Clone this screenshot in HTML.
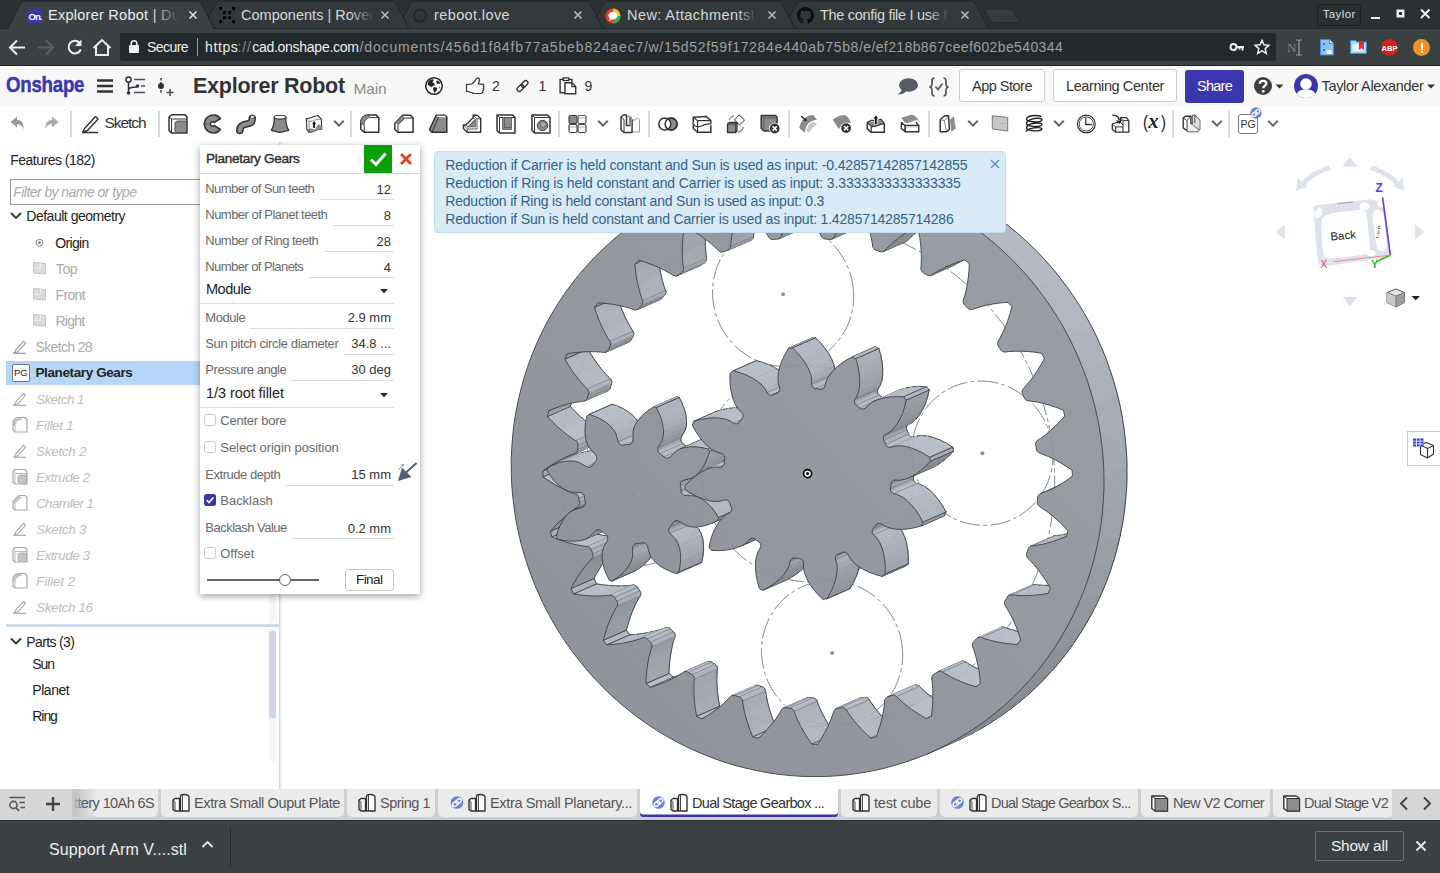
<!DOCTYPE html>
<html lang="en"><head><meta charset="utf-8"><title>Explorer Robot | Dual Stage Gearbox</title>
<style>
html,body{margin:0;padding:0;}
body{width:1440px;height:873px;overflow:hidden;position:relative;background:#fff;font-family:"Liberation Sans",sans-serif;}
div,span.t,svg{position:absolute;}
span.t{white-space:pre;line-height:1;}
div{box-sizing:border-box;}
</style></head>
<body>
<div style="left:0px;top:0px;width:1440px;height:28px;background:#2b3032;"></div>
<div style="left:0px;top:28px;width:1440px;height:37px;background:#3b4143;"></div>
<div style="left:0px;top:65px;width:1440px;height:1px;background:#1e2224;"></div>
<svg style="left:0;top:0" width="1440" height="29" viewBox="0 0 1440 29"><path d="M782,28.5 Q784,28 785,26 L797,3 Q798,1 800,1 L972,1 Q974,1 975,3 L987,26 Q988,28 990,28.5 Z" fill="#33393b" stroke="#1f2426" stroke-width="1"/><path d="M589,28.5 Q591,28 592,26 L604,3 Q605,1 607,1 L779,1 Q781,1 782,3 L794,26 Q795,28 797,28.5 Z" fill="#33393b" stroke="#1f2426" stroke-width="1"/><path d="M396,28.5 Q398,28 399,26 L411,3 Q412,1 414,1 L587,1 Q589,1 590,3 L602,26 Q603,28 605,28.5 Z" fill="#33393b" stroke="#1f2426" stroke-width="1"/><path d="M201,28.5 Q203,28 204,26 L216,3 Q217,1 219,1 L393,1 Q395,1 396,3 L408,26 Q409,28 411,28.5 Z" fill="#33393b" stroke="#1f2426" stroke-width="1"/><rect x="0" y="28" width="1440" height="1" fill="#23282a"/><path d="M6,28.5 Q8,28 9,26 L21,3 Q22,1 24,1 L198,1 Q200,1 201,3 L213,26 Q214,28 216,28.5 Z" fill="#3b4143" stroke="#1f2426" stroke-width="1"/><rect x="9" y="27.5" width="204" height="2" fill="#3b4143"/><path d="M986,9 L1010,9 C1012,9 1013,10 1014,12 L1019,21 C1019.5,22 1019,22.5 1018,22.5 L994,22.5 C992,22.5 991,21.5 990,19.5 L985,10.5 C984.5,9.5 985,9 986,9 Z" fill="#363c3e" stroke="#23282a"/><path d="M189.5,11.5 l7,7 m0,-7 l-7,7" stroke="#e4e6e6" stroke-width="1.5" fill="none"/><path d="M381.5,11.5 l7,7 m0,-7 l-7,7" stroke="#b9bcbd" stroke-width="1.5" fill="none"/><path d="M574.5,11.5 l7,7 m0,-7 l-7,7" stroke="#b9bcbd" stroke-width="1.5" fill="none"/><path d="M768.5,11.5 l7,7 m0,-7 l-7,7" stroke="#b9bcbd" stroke-width="1.5" fill="none"/><path d="M961.5,11.5 l7,7 m0,-7 l-7,7" stroke="#b9bcbd" stroke-width="1.5" fill="none"/></svg>
<div style="left:27px;top:9px;width:15px;height:14px;background:#3a36ae;"></div>
<span class="t" style="left:28.50px;top:11.96px;font-size:9.5px;color:#fff;font-weight:700;letter-spacing:-0.95px;">On.</span>
<svg style="left:219px;top:6px" width="17" height="18" viewBox="0 0 17 18"><rect x="0" y="0.9" width="3" height="3" fill="#000"/><rect x="13.1" y="0.9" width="3" height="3" fill="#000"/><rect x="4" y="5.1" width="3" height="3" fill="#000"/><rect x="9.1" y="5.1" width="3" height="3" fill="#000"/><rect x="4" y="10.2" width="3" height="3" fill="#000"/><rect x="9.1" y="10.2" width="3" height="3" fill="#000"/><rect x="0" y="14.2" width="3" height="3" fill="#000"/><rect x="13.1" y="14.2" width="3" height="3" fill="#000"/></svg>
<svg style="left:412px;top:8px" width="16" height="16" viewBox="0 0 16 16"><circle cx="8" cy="7.5" r="6" fill="none" stroke="#22272a" stroke-width="2"/><path d="M3,11 l-1.5,4 l4.5,-2z" fill="#22272a"/></svg>
<svg style="left:605px;top:8px" width="16" height="16" viewBox="0 0 16 16"><circle cx="8" cy="8" r="7.5" fill="#e8402a"/><path d="M8 .5a7.5 7.5 0 0 1 7.5 7.5h-7.5z" fill="#f5c518"/><path d="M15.500 8a7.5 7.500 0 0 1-7.500 7.500v-7.500z" fill="#2fb457"/><ellipse cx="8" cy="7.6" rx="4.600" ry="3.800" fill="#fff"/><path d="M5,10 l-1,3 l3.500,-2z" fill="#fff"/></svg>
<svg style="left:797px;top:7px" width="17" height="17" viewBox="0 0 16 16"><path fill="#0d0f10" d="M8 0C3.580 0 0 3.580 0 8c0 3.540 2.290 6.530 5.470 7.590.400.070.550-.170.550-.380 0-.190-.010-.820-.010-1.490-2.010.370-2.530-.490-2.690-.940-.090-.230-.480-.940-.820-1.130-.280-.150-.680-.520-.010-.530.630-.010 1.080.580 1.230.820.720 1.210 1.870.870 2.330.660.070-.520.280-.870.510-1.070-1.780-.200-3.640-.890-3.640-3.950 0-.870.310-1.590.820-2.150-.080-.200-.360-1.020.080-2.120 0 0 .670-.210 2.200.820.640-.180 1.320-.270 2-.270.680 0 1.360.090 2 .270 1.530-1.040 2.200-.820 2.200-.820.440 1.100.160 1.920.080 2.120.510.560.820 1.270.820 2.150 0 3.070-1.870 3.750-3.650 3.950.290.250.540.730.540 1.480 0 1.070-.010 1.930-.010 2.200 0 .210.150.460.550.380A8.013 8.013 0 0016 8c0-4.420-3.580-8-8-8z"/></svg>
<span class="t" style="left:48.00px;top:7.73px;font-size:14.5px;color:#eceeee;letter-spacing:0.26px;">Explorer Robot | Du</span>
<div style="left:150px;top:4px;width:34px;height:22px;background:linear-gradient(90deg,rgba(0,0,0,0),#3b4143 85%);"></div>
<span class="t" style="left:241.00px;top:7.73px;font-size:14.5px;color:#d5d8d9;letter-spacing:0.02px;">Components | Rover</span>
<div style="left:350px;top:4px;width:28px;height:22px;background:linear-gradient(90deg,rgba(0,0,0,0),#33393b 85%);"></div>
<span class="t" style="left:434.00px;top:7.73px;font-size:14.5px;color:#d5d8d9;letter-spacing:0.39px;">reboot.love</span>
<span class="t" style="left:627.00px;top:7.73px;font-size:14.5px;color:#d5d8d9;letter-spacing:0.42px;">New: Attachments!</span>
<div style="left:738px;top:4px;width:22px;height:22px;background:linear-gradient(90deg,rgba(0,0,0,0),#33393b 85%);"></div>
<span class="t" style="left:820.00px;top:7.73px;font-size:14.5px;color:#d5d8d9;letter-spacing:-0.3px;">The config file I use f</span>
<div style="left:928px;top:4px;width:24px;height:22px;background:linear-gradient(90deg,rgba(0,0,0,0),#33393b 85%);"></div>
<div style="left:1317px;top:4px;width:44px;height:22px;background:#2a2f31;border:1px solid #1b1f21;border-radius:3px;"></div>
<span class="t" style="left:1322.68px;top:9.27px;font-size:11.5px;color:#dcdfe0;letter-spacing:0.39px;">Taylor</span>
<svg style="left:1365px;top:0" width="75" height="28" viewBox="1365 0 75 28"><rect x="1371" y="17" width="9" height="2" fill="#eee"/><path d="M1396.500,9.500h8v8h-8z M1399,12v3h3v-3z" fill="#eee" fill-rule="evenodd"/><path d="M1421,9.500 l8.500,8.500 m0,-8.500 l-8.500,8.500" stroke="#eee" stroke-width="2" fill="none"/></svg>
<svg style="left:0;top:28px" width="120" height="37" viewBox="0 28 120 37" fill="none" stroke-linecap="butt"><path d="M25,47.500 H10.500 M17,40.500 l-7,7 l7,7" stroke="#eceeee" stroke-width="2"/><path d="M38,47.500 H52.500 M46,40.500 l7,7 l-7,7" stroke="#5b6163" stroke-width="2"/><path d="M79.500,42.700 A6.300,6.300 0 1 0 80.800,49.500" stroke="#eceeee" stroke-width="2"/><path d="M81.500,39.500 v6.500 h-6.500z" fill="#eceeee"/><path d="M93.500,48 L102,40 L110.500,48 M96,46.500 V55 H108 V46.500" stroke="#eceeee" stroke-width="2"/></svg>
<div style="left:120px;top:33px;width:1156px;height:28px;background:#24292b;border-radius:3px;"></div>
<svg style="left:128px;top:39px" width="12" height="15" viewBox="0 0 12 15"><rect x="1" y="6" width="10" height="8" rx="1" fill="#f0f0f0"/><path d="M3.200,6.500 V4.500 a2.800,2.800 0 0 1 5.600,0 V6.500" stroke="#f0f0f0" stroke-width="1.600" fill="none"/></svg>
<span class="t" style="left:147.00px;top:40.15px;font-size:14px;color:#eceeee;letter-spacing:-0.56px;">Secure</span>
<div style="left:197px;top:38px;width:1px;height:18px;background:#9a9ea0;"></div>
<span class="t" style="left:205.00px;top:40.15px;font-size:14px;color:#eceeee;letter-spacing:0.63px;">https</span>
<span class="t" style="left:237.60px;top:40.15px;font-size:14px;color:#8c9092;letter-spacing:0.78px;">://</span>
<span class="t" style="left:252.20px;top:40.15px;font-size:14px;color:#eceeee;letter-spacing:-0.27px;">cad.onshape.com</span>
<span class="t" style="left:359.50px;top:40.15px;font-size:14px;color:#9da1a3;letter-spacing:0.86px;">/documents/456d1f84fb77a5beb824aec7</span>
<span class="t" style="left:644.00px;top:40.15px;font-size:14px;color:#9da1a3;letter-spacing:0.67px;">/w/15d52f59f17284e440ab75b8</span>
<span class="t" style="left:859.00px;top:40.15px;font-size:14px;color:#9da1a3;letter-spacing:0.38px;">/e/ef218b867ceef602be540344</span>
<svg style="left:1228px;top:38px" width="48" height="20" viewBox="1228 38 48 20"><circle cx="1233.500" cy="47" r="3" stroke="#eceeee" stroke-width="2" fill="none"/><path d="M1236.500,47 h7.500 M1242.500,47 v3.500 M1239.500,47 v2.500" stroke="#eceeee" stroke-width="2" fill="none"/><path d="M1262,40.300 l2,4.500 l4.900,.5 l-3.700,3.300 l1.100,4.800 l-4.300,-2.600 l-4.300,2.600 l1.100,-4.800 l-3.700,-3.300 l4.900,-.5z" stroke="#eceeee" stroke-width="1.500" fill="none" stroke-linejoin="miter"/></svg>
<span class="t" style="left:1287.00px;top:41.00px;font-size:13px;color:#7e8486;font-family:'Liberation Serif',serif;">N</span>
<svg style="left:1295px;top:39px" width="8" height="17" viewBox="0 0 8 17"><path d="M1,1 h2 q1,0 1,1 v13 q0,1 -1,1 h-2 M7,1 h-2 q-1,0 -1,1 M7,16 h-2 q-1,0 -1,-1" stroke="#9ea3a5" stroke-width="1.200" fill="none"/></svg>
<svg style="left:1320px;top:38px" width="14" height="18" viewBox="0 0 14 18"><path d="M0.500,1.500 h9 l4,4 v11.500 h-13z" fill="#8ec3f7" stroke="#3b8be0" stroke-width="1"/><path d="M9.500,1.500 v4 h4" fill="#d8ecff" stroke="#3b8be0"/><rect x="3" y="5" width="2" height="2" fill="#2f6fc0"/><rect x="3" y="11" width="2" height="2" fill="#2f6fc0"/><rect x="6.500" y="12" width="5" height="4" fill="#e9f3ff"/></svg>
<svg style="left:1350px;top:38px" width="17" height="16" viewBox="0 0 17 16"><path d="M0.500,2.500 h5 l1.500,1.500 h9.500 v11.500 h-16z" fill="#9fd0f5" stroke="#3f93dd"/><rect x="2.500" y="5.500" width="12" height="8" fill="#e8f4fd"/><path d="M9,3 h5 v9 l-2.500,-2 l-2.500,2z" fill="#e03131"/></svg>
<div style="left:1381px;top:39px;width:17px;height:17px;background:#d81e1e;border-radius:50%;"></div>
<span class="t" style="left:1381.58px;top:44.65px;font-size:7.5px;color:#fff;font-weight:700;">ABP</span>
<div style="left:1413px;top:39px;width:17px;height:17px;background:#f0922b;border-radius:50%;"></div>
<div style="left:1420.5px;top:42.5px;width:2px;height:7px;background:#fff;"></div>
<div style="left:1420.5px;top:51px;width:2px;height:2px;background:#fff;"></div>
<div style="left:0px;top:66px;width:1440px;height:40px;background:#f8f8f8;"></div>
<span class="t" style="left:6.00px;top:73.98px;font-size:22px;color:#3a36ae;font-weight:700;transform:scaleX(.85);transform-origin:0 0;letter-spacing:-.3px;-webkit-text-stroke:.45px #3a36ae;">Onshape</span>
<svg style="left:90px;top:66px" width="100" height="39" viewBox="90 66 100 39"><path d="M97,80.500h16 M97,86h16 M97,91.500h16" stroke="#333" stroke-width="2.400"/><circle cx="128.500" cy="79.500" r="2.600" fill="none" stroke="#333" stroke-width="1.500"/><circle cx="128.500" cy="93" r="1.800" fill="#333"/><path d="M128.500,82 V92 M128.500,90 C128.500,86 136,88 137,86.500" stroke="#333" stroke-width="1.500" fill="none"/><circle cx="137.500" cy="86" r="1.700" fill="#333"/><path d="M134,79.500h11 M141,86h4 M134,92.500h11" stroke="#455060" stroke-width="1.500"/><path d="M161,78 V94" stroke="#333" stroke-width="1.500" stroke-dasharray="2.500,1.500"/><circle cx="161" cy="86" r="3" fill="#333"/><path d="M166.500,92.500h7 M170,89v7" stroke="#455060" stroke-width="1.600"/></svg>
<span class="t" style="left:193.00px;top:76.40px;font-size:21.5px;color:#333;font-weight:700;letter-spacing:-0.24px;">Explorer Robot</span>
<span class="t" style="left:353.50px;top:81.48px;font-size:15.5px;color:#8a8a8a;letter-spacing:-0.15px;">Main</span>
<svg style="left:424px;top:76px" width="20" height="20" viewBox="0 0 20 20"><circle cx="10" cy="10" r="8.300" fill="#fff" stroke="#222" stroke-width="1.500"/><path d="M4.500,5.500 C6,3.500 8,3 9.500,3.500 C10,5 8.500,5.500 8.500,6.500 C9.500,7.500 10.500,7 11,8.500 C10,10 8,10 7.500,11.500 C6.500,10.500 5.500,9.500 4,9 C3.500,8 3.800,6.500 4.500,5.500Z M12.500,4.500 C14,4.500 15.500,5.500 16.500,7.500 C15.500,8 14.500,7.500 13.500,8 C12.500,7 12,5.500 12.500,4.500Z M9.500,11.500 C11,11 12.500,11.500 13.500,12.500 C13,14.500 11.500,15.500 10.500,17 C9.500,16 10,14 9,13 C9,12.500 9.200,12 9.500,11.500Z M15,10.500 c1,0 1.500,1 1.500,2 c-.7,.3 -1.300,-.5 -1.500,-2z" fill="#222"/></svg>
<svg style="left:465px;top:75px" width="22" height="22" viewBox="0 0 22 22"><path d="M1.5,16.2 V9.6 L6.8,9 C9,7.5 10.500,5.500 11.400,3.500 C12.300,2.300 14.800,3.200 14.500,4.800 C14.300,6.300 13.800,7.700 13.200,9 L17,9.100 C18.600,9.200 19,10.300 18.300,11.200 C19.100,11.800 19,13 18.200,13.500 C18.900,14.300 18.600,15.300 17.800,15.700 C18.200,16.800 17.500,18.200 16,18.500 H9 C8,18.500 7.500,18 6.800,17.500 L1.500,16.200Z" fill="#fff" stroke="#333" stroke-width="1.200" stroke-linejoin="round"/></svg>
<span class="t" style="left:492.00px;top:79.15px;font-size:14px;color:#333;">2</span>
<svg style="left:514px;top:77px" width="18" height="18" viewBox="0 0 18 18"><g transform="rotate(-45 8.500 9)" fill="none" stroke="#333" stroke-width="1.400"><rect x="1.800" y="6.800" width="7.600" height="4.400" rx="2.200"/><rect x="7.600" y="6.800" width="7.600" height="4.400" rx="2.200"/></g></svg>
<span class="t" style="left:538.50px;top:79.15px;font-size:14px;color:#333;">1</span>
<svg style="left:559px;top:76px" width="20" height="20" viewBox="0 0 20 20"><path d="M4.200,3.400 H1.100 V16.700 H6 M9.800,3.400 H12.900 V6.800" fill="none" stroke="#333" stroke-width="1.400"/><rect x="4.200" y="1.900" width="5.600" height="2.600" fill="#fff" stroke="#333" stroke-width="1.300"/><path d="M6,6.800 H12.900 L16.700,10.600 V17.800 H6Z" fill="#fff" stroke="#333" stroke-width="1.400"/><path d="M12.900,6.800 V10.600 H16.700" fill="none" stroke="#333" stroke-width="1.200"/></svg>
<span class="t" style="left:584.50px;top:79.15px;font-size:14px;color:#333;">9</span>
<svg style="left:896px;top:77px" width="23" height="20" viewBox="0 0 23 20"><ellipse cx="12.500" cy="8" rx="9.500" ry="6.800" fill="#555c66"/><path d="M6,11.500 C5.500,14.500 3.500,16.500 1.500,17.500 C5.500,17.800 9,16 11,13.500Z" fill="#555c66"/></svg>
<svg style="left:928px;top:76px" width="22" height="22" viewBox="0 0 22 22" fill="none" stroke="#555c66" stroke-width="1.700"><path d="M6.500,2 C4,2 4,3.500 4,5.500 V8 C4,9.500 3.500,10.500 1.500,11 C3.500,11.500 4,12.500 4,14 V16.500 C4,18.500 4,20 6.500,20"/><path d="M15.500,2 C18,2 18,3.500 18,5.500 V8 C18,9.500 18.500,10.500 20.500,11 C18.500,11.500 18,12.500 18,14 V16.500 C18,18.500 18,20 15.500,20"/><path d="M7.500,10.500 L10,13.500 L14.500,7.500" stroke-width="1.800"/></svg>
<div style="left:959px;top:69px;width:86px;height:33px;background:#fff;border:1px solid #ccc;border-radius:3px;"></div>
<span class="t" style="left:972.00px;top:78.73px;font-size:14.5px;color:#333;letter-spacing:-0.5px;">App Store</span>
<div style="left:1053px;top:69px;width:124px;height:33px;background:#fff;border:1px solid #ccc;border-radius:3px;"></div>
<span class="t" style="left:1066.00px;top:78.73px;font-size:14.5px;color:#333;letter-spacing:-0.4px;">Learning Center</span>
<div style="left:1185px;top:70px;width:59px;height:32.5px;background:#3a36ae;border-radius:3px;"></div>
<span class="t" style="left:1197.00px;top:78.73px;font-size:14.5px;color:#fff;letter-spacing:-0.74px;">Share</span>
<svg style="left:1253px;top:76px" width="36" height="20" viewBox="0 0 36 20"><circle cx="10" cy="10" r="9" fill="#3d3d3d"/><path d="M6.800,7.800 C6.800,3.800 13.400,4 13.400,7.600 C13.400,9.800 10.200,9.800 10.200,12.300" stroke="#fff" stroke-width="2.300" fill="none"/><circle cx="10.200" cy="15.300" r="1.400" fill="#fff"/><path d="M22.500,8.500 h8 l-4,4z" fill="#333"/></svg>
<svg style="left:1294px;top:74px" width="24" height="26" viewBox="0 0 24 26"><defs><clipPath id="avc"><circle cx="12" cy="12" r="12"/></clipPath></defs><circle cx="12" cy="12" r="12" fill="#3a36ae"/><g clip-path="url(#avc)"><circle cx="12" cy="10" r="5.800" fill="#fff"/><path d="M1.500,25 C1.500,17 7,15.500 12,15.500 C17,15.500 22.500,17 22.500,25Z" fill="#fff"/></g></svg>
<span class="t" style="left:1321.50px;top:78.73px;font-size:14.5px;color:#333;letter-spacing:-0.33px;">Taylor Alexander</span>
<svg style="left:1426px;top:82px" width="10" height="8" viewBox="0 0 10 8"><path d="M1,2.500 h8 l-4,4z" fill="#333"/></svg>
<div style="left:0px;top:106px;width:1440px;height:36px;background:#fff;"></div>
<svg style="left:0;top:105px" width="1440" height="37" viewBox="0 105 1440 37" fill="none" stroke-linejoin="round"><path d="M10.500,122 L17,116.500 V120 C21.500,120 24,123 23.500,129.500 C22.500,126 21,124.300 17,124.300 V127.500Z" fill="#9a9a9a"/><path d="M58.500,122 L52,116.500 V120 C47.500,120 45,123 45.500,129.500 C46.500,126 48,124.300 52,124.300 V127.500Z" fill="#a9a9a9"/><rect x="70.2" y="111" width="1.600" height="26" fill="#d2d2d2"/><path d="M82,132.500 H98" stroke="#333" stroke-width="1.500"/><path d="M84.500,128.500 L95.500,116.500 L98,119 L87.500,130.500 L83,131.800Z" stroke="#333" stroke-width="1.400" fill="#fff"/><rect x="158.2" y="111" width="1.600" height="26" fill="#d2d2d2"/><g transform="translate(168,114)"><path d="M1,3 L3.500,0.800 H17 L19,3 V19 H3.500 L1,16.500Z" fill="#fff" stroke="#333" stroke-width="1.500"/><path d="M1,3 L3.500,5 V19 M3.500,5 H19" stroke="#333" stroke-width="1"/><path d="M7,8.500 L9,7 H18.500 V18.500 H9 L7,17Z" fill="#8c8c8c" stroke="#555" stroke-width="1"/></g><g transform="translate(202,114)"><path d="M18.500,4.500 A9,9 0 1 0 18.500,15.500 L12,11.500 A2.200,2.200 0 1 1 12,8.500Z" fill="#8c8c8c" stroke="#333" stroke-width="1.500"/><path d="M1,10 h5" stroke="#555" stroke-width=".8"/></g><g transform="translate(236,114)"><path d="M0.7,17.6 C0.6,14 2.5,9.5 7.6,7.8 C10.5,7 12.6,7.2 13.1,5.8 C13.4,4.5 13.2,3.5 13.6,2.6 C14.5,0.8 18.5,0.9 19.1,3.2 C19.4,5.5 19.2,7.5 18.3,9.2 C17,11.5 15,12.3 12.5,12.6 C10,12.9 8.3,13 7.6,14 C7,15.2 7,16.8 6.6,18.2 C5.8,20 1.2,19.9 0.7,17.6Z" fill="#8c8c8c" stroke="#333" stroke-width="1.5"/><ellipse cx="16.4" cy="3" rx="2.3" ry="1.4" fill="#fff" stroke="#333" stroke-width=".8"/></g><g transform="translate(271,114)"><path d="M3.2,3.2 C3.5,8 2.5,12.5 0.4,16.3 C3,17 6,18 9,18.4 C12,18 15,17 17.7,16.3 C15.5,12.5 14.5,8 14.9,3.2 Z" fill="#8c8c8c" stroke="#333" stroke-width="1.3"/><ellipse cx="9.05" cy="3.2" rx="5.85" ry="1.9" fill="#fff" stroke="#333" stroke-width="1.1"/></g><g transform="translate(305,114)"><path d="M1.3,4.6 C5,4.8 9,2 12.9,1.5 L16.3,5.100 L16.800,15.300 C12,14.500 9,18 4.200,18.400 L1.800,15.300Z" fill="#fff" stroke="#333" stroke-width="1.100"/><path d="M2.800,15.500 C5,14 7,14.500 9.500,15.500 C11.500,14 12.500,10 14,10.200 C15.500,10.500 16,12 16.800,13 V15.300 C12,14.500 9,18 4.200,18.400Z" fill="#8c8c8c"/><path d="M1.300,4.600 L4,7.500 L4.200,18.400 M4,7.500 C8,7.500 12,4.500 16.300,5.100" stroke="#555" stroke-width=".7" fill="none"/><path d="M9.100,14.200 V8.500" stroke="#fff" stroke-width="3.400"/><path d="M6.300,10.400 L9.100,6.500 L11.900,10.400Z" fill="#fff" stroke="#fff" stroke-width="1"/><path d="M9.100,13.900 V8.500" stroke="#111" stroke-width="1.900"/><path d="M7.100,10 L9.100,7.100 L11.100,10Z" fill="#111"/></g><path d="M334.2,120.8 l4.8,4.8 l4.8,-4.8" stroke="#666" stroke-width="2" fill="none" stroke-linejoin="miter"/><rect x="350.2" y="111" width="1.600" height="26" fill="#d2d2d2"/><g transform="translate(360,114)"><path d="M0.8,15.3 V9.5 C0.8,4.5 3.5,0.9 7.6,0.9 H15.9 L18.8,3.7 V18.2 H4.2Z" fill="#fff" stroke="#333" stroke-width="1.5"/><path d="M0.8,9.5 C0.8,4.5 3.5,0.9 7.6,0.9 L10.5,3.5 C6.500,3.700 4.200,7 4.200,11Z" fill="#8c8c8c" stroke="#444" stroke-width=".7"/><path d="M4.200,11 V18.200 M10.500,3.600 H18.800" stroke="#333" stroke-width="1" fill="none"/></g><g transform="translate(394,114)"><path d="M0.8,15.3 V9.5 L8.600,1.200 H16.400 L19.100,4.100 V18.200 H3.800Z" fill="#fff" stroke="#333" stroke-width="1.500"/><path d="M1.600,8.900 L8.800,1.600 L10.800,4.100 L4,10.500Z" fill="#8c8c8c"/><path d="M4,10.500 V18.200 M4,10.500 L10.800,4.100 H19.100" stroke="#333" stroke-width="1" fill="none"/></g><g transform="translate(429,114)"><path d="M0.400,15.800 L7.100,1.200 H15.900 L17.800,2.900 V18.200 H2.800Z" fill="#8c8c8c" stroke="#333" stroke-width="1.500"/><path d="M7.400,1.800 H15.600 L17.200,3.200 H9.600Z" fill="#fff"/><path d="M9.600,3.200 L3.200,18" stroke="#333" stroke-width="1" fill="none"/></g><g transform="translate(463,114)"><path d="M0.400,11 H2.800 L10.100,3.700 V1.200 H14 L17.700,4.600 V18.200 H4.300 L0.400,14.400Z" fill="#fff" stroke="#333" stroke-width="1.400"/><path d="M5.300,12.900 L12.500,5.600 V12.900Z" fill="#8c8c8c" stroke="#555" stroke-width=".7"/><path d="M0.400,11 L4.300,15 V18.200 M4.300,15 H14 V5 M2.800,11 L4.800,12.900 M10.100,3.700 L12.300,5.400 M10.100,1.200 L14,4.800 H17.700 M4.300,13.600 L12.300,5.400" stroke="#333" stroke-width=".8" fill="none"/></g><g transform="translate(496,114)"><path d="M1,1 H16.500 L19,3.500 V19 H3.500 L1,16.500Z" fill="#fff" stroke="#333" stroke-width="1.500"/><path d="M1,1 L3.500,3.500 V19 M3.500,3.500 H19" stroke="#333" stroke-width="1"/><path d="M6.500,3.500 H15.500 V15.500 H6.500Z" fill="#8c8c8c" stroke="#555" stroke-width=".8"/><path d="M8.500,3.500 V13.500 H15.500" stroke="#555" stroke-width=".8"/></g><g transform="translate(531,114)"><path d="M1,1 H16.500 L19,3.500 V19 H3.500 L1,16.500Z" fill="#fff" stroke="#333" stroke-width="1.500"/><path d="M1,1 L3.500,3.500 V19 M3.500,3.500 H19" stroke="#333" stroke-width="1"/><circle cx="11.500" cy="11.500" r="5.200" fill="#8c8c8c" stroke="#444" stroke-width="1"/><circle cx="12.300" cy="10.500" r="3" fill="#aaa" stroke="#555" stroke-width=".8"/></g><rect x="558.2" y="111" width="1.600" height="26" fill="#d2d2d2"/><g transform="translate(568,114)"><rect x="1" y="1.500" width="8" height="8" rx="1.500" fill="#8c8c8c" stroke="#444" stroke-width="1.200"/><rect x="10" y="1.500" width="8" height="8" rx="1.500" fill="#fff" stroke="#555" stroke-width="1.200"/><rect x="1" y="10.500" width="8" height="8" rx="1.500" fill="#fff" stroke="#444" stroke-width="1.200"/><rect x="10" y="10.500" width="8" height="8" rx="1.500" fill="#fff" stroke="#444" stroke-width="1.200"/><path d="M1,4 h17 M1,13 h17" stroke="#777" stroke-width=".6"/></g><path d="M598.2,120.8 l4.8,4.8 l4.8,-4.8" stroke="#666" stroke-width="2" fill="none" stroke-linejoin="miter"/><g transform="translate(620,114)"><path d="M12,6 H15 L17.500,4 L19.500,6 V18 H12Z" fill="#fff" stroke="#999" stroke-width="1"/><path d="M1,3 L3.500,1 H6.500 V11.500 H10.500 V6 H12 V18.500 H4 L1,16Z" fill="#fff" stroke="#333" stroke-width="1.500"/><path d="M1,3 L4,5.500 V18.500" stroke="#333" stroke-width="1"/><path d="M7,1 L12,3 V14 L9,11 V4Z" fill="#8c8c8c" stroke="none"/></g><rect x="648.2" y="111" width="1.600" height="26" fill="#d2d2d2"/><g transform="translate(658,114)"><circle cx="13.1" cy="10" r="6" fill="#8c8c8c" stroke="#333" stroke-width="1.500"/><circle cx="6.800" cy="10" r="6" fill="#fff" stroke="#333" stroke-width="1.500"/><circle cx="13.100" cy="10" r="6" fill="none" stroke="#333" stroke-width="1.500"/></g><g transform="translate(692,114)"><g stroke-linejoin="miter"><path d="M1.300,3.200 L14.400,2.500 L18.800,6.600 V18.200 H5.600 L1.300,14.500Z" fill="#fff" stroke="#333" stroke-width="1.500"/><path d="M1.300,3.200 L5.600,6.600 H18.800 M5.600,6.600 V18.200" stroke="#333" stroke-width="1.100" fill="none"/><path d="M18.800,9.200 V11.200 M1.300,8.500 V10.500" stroke="#fff" stroke-width="2.200"/><path d="M0.300,8.500 C3,13 6,13.500 9.500,12 C13,10 16,9.500 19.500,10" stroke="#333" stroke-width="1.200" fill="none"/></g></g><g transform="translate(726,114)"><path d="M3,6 A9,9 0 0 1 8,1.500 M17.500,13 A9,9 0 0 1 12,18.500" stroke="#999" stroke-width="1.500"/><path d="M13,1 L18.500,6 L13.500,11 L8.500,6Z" fill="#fff" stroke="#333" stroke-width="1"/><path d="M1.500,10 L3.500,8.500 H11 V17 L9.500,18.500 H1.500Z" fill="#8c8c8c" stroke="#333" stroke-width="1.300"/><path d="M1.500,10 H9.500 V18.500 M9.500,10 L11,8.500" stroke="#333" stroke-width=".8"/></g><g transform="translate(760,114)"><path d="M1.200,1.500 H15.500 L17,3 V17 H4 L1.200,14.500Z" fill="#8c8c8c" stroke="#333" stroke-width="1.500"/><path d="M1.200,1.500 L4,4 V17 M4,4 H17" stroke="#555" stroke-width=".9" fill="none"/><circle cx="14.7" cy="14.5" r="5.7" fill="#fff"/><circle cx="14.7" cy="14.5" r="4.9" fill="#333"/><path d="M12.6,12.4 l4.2,4.2 m0,-4.2 l-4.2,4.2" stroke="#fff" stroke-width="1.6"/></g><rect x="788.2" y="111" width="1.600" height="26" fill="#d2d2d2"/><g transform="translate(798,114)"><path d="M1.3,13.9 C1.8,11.5 2.4,10 3.2,8.6 C5,5.5 7,3.5 9.5,2.3 C11.5,1.4 13.5,1 15.4,1 L19,5.7 C16.5,6 14.5,6.6 12.9,7.6 C10.8,8.9 9.4,10.3 8.6,12 C7.6,14 7,16.3 6.6,18.8Z" fill="#8c8c8c"/><path d="M8.1,16.8 C8.6,14.6 9.3,12.9 10.5,11.5 C12,9.7 13.7,8.4 15.8,7.6 L19,10.5 C17.4,11.2 16,12.2 14.9,13.4 C13.4,15 12.2,16.8 11.5,18.8Z" fill="#c8c8c8"/><path d="M3.2,2 L7.6,6.2" stroke="#222" stroke-width="1.3"/><path d="M8.6,7.2 L5.2,6.6 L8,3.8Z" fill="#222"/></g><g transform="translate(831,114)"><path d="M1.8,5.700 C3.5,4.500 5.500,3.200 7.600,2.300 C9.500,1.500 11.500,1 13.400,1 C15,1.500 16.300,2.500 17.300,3.700 C18.500,5.200 19.200,7 19.700,8.600 C17.500,9 15.500,9.600 13.400,10.500 C11.500,11.400 9.500,13 7.600,14.900 C5.500,11.500 3.500,8.500 1.800,5.700Z" fill="#8c8c8c"/><circle cx="15.1" cy="14.1" r="5.7" fill="#fff"/><circle cx="15.1" cy="14.1" r="4.9" fill="#333"/><path d="M13.0,12.0 l4.2,4.2 m0,-4.2 l-4.2,4.2" stroke="#fff" stroke-width="1.6"/></g><g transform="translate(866,114)"><path d="M1.300,8.400 L5.600,6.400 L14.900,5.500 L18.300,9.400 V18.300 H5.200 L1.300,14.900Z" fill="#fff" stroke="#333" stroke-width="1.500"/><path d="M1.700,8.600 L14.900,6.200 L17.800,9.600 C15.500,9.700 13.500,10.300 12,11 C10,12 8.500,13 6.600,13 L5.200,12Z" fill="#8c8c8c"/><path d="M1.300,8.400 L5.200,12.300 V18.300 M5.200,12.500 C9,13.500 13,10 18.300,9.600" stroke="#333" stroke-width="1.200" fill="none"/><path d="M9.800,10.500 V3.700" stroke="#fff" stroke-width="3.600"/><path d="M6.800,4.800 L9.800,1 L12.900,4.800Z" fill="#fff" stroke="#fff" stroke-width="1.200"/><path d="M9.800,10 V3.700" stroke="#111" stroke-width="2"/><path d="M7.500,4.500 L9.800,1.600 L12.200,4.500Z" fill="#111"/></g><g transform="translate(900,114)"><path d="M1.300,3.700 C3,3.300 5,2.800 6.600,2.300 C8.500,1.700 10,1 11.500,0.800 C13,0.900 14.300,1.500 15.400,2.300 L18.800,6.200 C17.300,6.200 15.800,6.300 14.400,6.600 C12.500,7.100 11,8 9.500,8.600 C8,9 6.300,9 4.700,8.600Z" fill="#8c8c8c"/><path d="M1.300,8.800 L5.200,11.500 V17.800 L1.300,14.400Z" fill="#fff" stroke="#333" stroke-width="1.400"/><path d="M5.200,11.500 H18.800 V17.800 H5.200Z" fill="#fff" stroke="#333" stroke-width="1.400"/><path d="M5.900,12.200 H18.100 V13.800 H5.900Z" fill="#d4d4d4"/><path d="M15.800,8.300 L18.800,11.500 M1.300,8.800 L3,8.600" stroke="#333" stroke-width="1.300"/></g><rect x="928.2" y="111" width="1.600" height="26" fill="#d2d2d2"/><g transform="translate(939,114)"><path d="M10.900,5.700 L14.800,2.300 L16.800,14.400 L12.400,17.800Z" fill="#8c8c8c"/><path d="M1.200,17.800 V5.700 L5.600,1.800 H9.500 L10.400,15.400 L7.500,17.800Z" fill="#fff" stroke="#333" stroke-width="1.500"/><path d="M1.200,5.700 L5.400,6.600 L7.300,16.800 M5.400,6.600 L9.500,1.800" stroke="#666" stroke-width=".8"/></g><path d="M968.2,120.8 l4.8,4.8 l4.8,-4.8" stroke="#666" stroke-width="2" fill="none" stroke-linejoin="miter"/><g transform="translate(992,114)"><path d="M0.300,1.800 L15.700,3.400 V17.100 L0.300,14.900Z" fill="#c8c8c8" stroke="#777" stroke-width="1"/><path d="M8,9.500 h5" stroke="#aaa" stroke-width=".7"/></g><g transform="translate(1024,114)"><path d="M17.500,2.500 C12,0.500 3,1.800 2.500,5 C2.200,7.500 10,8.300 15,7.600 C19,7 19,4.300 14,4.300 C9,4.300 2.800,6 2.500,9.500 C2.200,12 10,13 15,12.300 C19,11.700 19,9 14,9 C9,9 2.800,10.500 2.500,14 C2.300,16 10,17.500 15,16.600 C19,16 19,13.600 14,13.600 C9,13.600 4,15 1.800,17.500" stroke="#222" stroke-width="1.400"/></g><path d="M1054.2,120.8 l4.8,4.8 l4.8,-4.8" stroke="#666" stroke-width="2" fill="none" stroke-linejoin="miter"/><g transform="translate(1076,114)"><circle cx="10.300" cy="10" r="8.900" stroke="#333" stroke-width="1.200" fill="#fff"/><circle cx="10.300" cy="10" r="7.100" stroke="#333" stroke-width=".9"/><path d="M9.800,3.700 V10.500 H15.900" stroke="#333" stroke-width="1.300"/></g><g transform="translate(1110,114)"><path d="M2.300,10 L6.600,8.500 H10.500 V3.700 H16.400 L18.800,6.600 V18.200 H5.700 L2.300,15.300Z" fill="#fff" stroke="#333" stroke-width="1.300"/><path d="M2.300,10 L5.700,12.900 V18.200 M5.700,12.900 H13 V18.200 M10.500,3.700 L13,6.600 H18.800 M13,6.600 V12.900 M10.500,8.500 L13,11" stroke="#333" stroke-width="1" fill="none"/><path d="M2.300,1.200 C6,1 8.600,2.700 9.400,6.500" stroke="#222" stroke-width="1.300" fill="none"/><path d="M5.900,5.900 L9.300,9.800 L12.800,5.600 L9.400,7Z" fill="#222"/></g></svg>
<span class="t" style="left:104.50px;top:115.38px;font-size:15.5px;color:#333;letter-spacing:-1.07px;">Sketch</span>
<span class="t" style="left:1143.30px;top:114.49px;font-size:17.5px;color:#222;transform:scaleX(.85);transform-origin:0 0;">(</span>
<span class="t" style="left:1160.80px;top:114.49px;font-size:17.5px;color:#222;transform:scaleX(.85);transform-origin:0 0;">)</span>
<span class="t" style="left:1148.30px;top:111.45px;font-size:20.5px;color:#222;font-weight:700;font-style:italic;font-family:'Liberation Serif',serif;">x</span>
<svg style="left:1170px;top:105px" width="120" height="37" viewBox="1170 105 120 37" fill="none" stroke-linejoin="round"><rect x="1172.2" y="111" width="1.600" height="26" fill="#d2d2d2"/><g transform="translate(1182,114)"><path d="M1.200,4.100 L3.600,2.200 H9 V10 H10.900 V1.700 L12.900,1.200 L17.700,6.600 V15.300 L15.300,17.500 H6.100 L1.200,13.900Z" fill="#fff" stroke="#333" stroke-width="1.400"/><path d="M10.900,1.700 L12.900,1.200 L17.700,6.600 V15.300 L10.900,10Z" fill="#e2e2e2"/><path d="M5.100,11 L10.900,10.300 L17.700,15.300 L15.300,17.500 H6.100 L5.100,16.500Z" fill="#f0f0f0"/><path d="M10.900,10.300 L17.700,15.300 L16.500,16.400 L9.500,10.500Z" fill="#9a9a9a"/><path d="M1.200,4.100 L5.100,6.600 V16.500 M5.100,6.600 L9,2.200 M12.900,1.200 V9" stroke="#333" stroke-width=".9" fill="none"/></g><path d="M1212.2,120.8 l4.8,4.8 l4.8,-4.8" stroke="#666" stroke-width="2" fill="none" stroke-linejoin="miter"/><rect x="1228.2" y="111" width="1.600" height="26" fill="#d2d2d2"/><rect x="1238.500" y="114.500" width="19" height="19" rx="2.500" fill="#fff" stroke="#777" stroke-width="1"/><circle cx="1256" cy="113" r="5.700" fill="#6d83d8"/><g transform="rotate(-40 1256 113)" stroke="#fff" stroke-width="1.300" fill="none"><rect x="1251.500" y="111.200" width="5.500" height="3.600" rx="1.800"/><rect x="1255" y="111.200" width="5.500" height="3.600" rx="1.800"/></g><path d="M1268.2,120.8 l4.8,4.8 l4.8,-4.8" stroke="#666" stroke-width="2" fill="none" stroke-linejoin="miter"/></svg>
<span class="t" style="left:1240.41px;top:118.61px;font-size:10.5px;color:#333;">PG</span>
<svg style="left:280px;top:142px" width="1160" height="647" viewBox="280 142 1160 647" fill="none" stroke-linejoin="round" stroke-linecap="round">
<style>.e{stroke:#3c4043;stroke-width:.9}.n{stroke:#6e7378;stroke-width:.6}.w0{fill:#858a90;stroke:#858a90;stroke-width:1}.w1{fill:#898e94;stroke:#898e94;stroke-width:1}.w2{fill:#8c9197;stroke:#8c9197;stroke-width:1}.w3{fill:#90959b;stroke:#90959b;stroke-width:1}.w4{fill:#93989f;stroke:#93989f;stroke-width:1}.w5{fill:#979ca2;stroke:#979ca2;stroke-width:1}.w6{fill:#9a9fa6;stroke:#9a9fa6;stroke-width:1}.w7{fill:#9ea3aa;stroke:#9ea3aa;stroke-width:1}.w8{fill:#a1a6ad;stroke:#a1a6ad;stroke-width:1}.w9{fill:#a5aab1;stroke:#a5aab1;stroke-width:1}.w10{fill:#a8adb5;stroke:#a8adb5;stroke-width:1}.w11{fill:#acb1b8;stroke:#acb1b8;stroke-width:1}.w12{fill:#afb4bc;stroke:#afb4bc;stroke-width:1}.w13{fill:#b3b8c0;stroke:#b3b8c0;stroke-width:1}.w14{fill:#b6bbc3;stroke:#b6bbc3;stroke-width:1}.w15{fill:#babfc7;stroke:#babfc7;stroke-width:1}</style>
<defs><linearGradient id="gf" gradientUnits="userSpaceOnUse" x1="560" y1="700" x2="1060" y2="250"><stop offset="0" stop-color="#90949a"/><stop offset="1" stop-color="#999da4"/></linearGradient></defs>
<path d="M853,286.1 L853.6,292.4 L853.7,298.7 L853.2,305 L852.2,311.2 L850.6,317.2 L848.6,323.1 L846,328.8 L843,334.1 L839.5,339.2 L835.6,344 L831.2,348.4 L826.5,352.3 L821.5,355.9 L816.2,358.9 L810.7,361.5 L804.9,363.5 L799,365 L792.9,366 L786.8,366.5 L780.6,366.3 L774.5,365.7 L768.4,364.5 L762.4,362.7 L756.6,360.5 L751,357.7 L745.7,354.5 L740.6,350.8 L735.8,346.7 L731.4,342.1 L727.4,337.2 L723.9,332 L720.7,326.5 L718.1,320.7 L715.9,314.8 L714.3,308.7 L713.2,302.5 L712.6,296.2 L712.5,289.9 L713,283.6 L714,277.4 L715.6,271.4 L717.6,265.5 L720.2,259.8 L723.2,254.5 L726.7,249.4 L730.6,244.6 L735,240.2 L739.7,236.3 L744.7,232.7 L750,229.7 L755.5,227.1 L761.3,225.1 L767.2,223.6 L773.3,222.6 L779.4,222.1 L785.6,222.3 L791.7,222.9 L797.8,224.1 L803.8,225.9 L809.6,228.1 L815.2,230.9 L820.5,234.1 L825.6,237.8 L830.4,241.9 L834.8,246.5 L838.8,251.4 L842.3,256.6 L845.5,262.1 L848.1,267.9 L850.3,273.8 L851.9,279.9ZM1052.3,445 L1052.9,451.3 L1053,457.6 L1052.5,463.9 L1051.5,470.1 L1049.9,476.1 L1047.9,482 L1045.3,487.7 L1042.3,493 L1038.8,498.1 L1034.9,502.9 L1030.5,507.3 L1025.8,511.2 L1020.8,514.8 L1015.5,517.8 L1010,520.4 L1004.2,522.4 L998.3,523.9 L992.2,524.9 L986.1,525.4 L979.9,525.2 L973.8,524.6 L967.7,523.4 L961.7,521.6 L955.9,519.4 L950.3,516.6 L945,513.4 L939.9,509.7 L935.1,505.6 L930.7,501 L926.7,496.1 L923.2,490.9 L920,485.4 L917.4,479.6 L915.2,473.7 L913.6,467.6 L912.5,461.4 L911.9,455.1 L911.8,448.8 L912.3,442.5 L913.3,436.3 L914.9,430.3 L916.9,424.4 L919.5,418.7 L922.5,413.4 L926,408.3 L929.9,403.5 L934.3,399.1 L939,395.2 L944,391.6 L949.3,388.6 L954.8,386 L960.6,384 L966.5,382.5 L972.6,381.5 L978.7,381 L984.9,381.2 L991,381.8 L997.1,383 L1003.1,384.8 L1008.9,387 L1014.5,389.8 L1019.8,393 L1024.9,396.7 L1029.7,400.8 L1034.1,405.4 L1038.1,410.3 L1041.6,415.5 L1044.8,421 L1047.4,426.8 L1049.6,432.7 L1051.2,438.8ZM902,644.7 L902.6,651 L902.7,657.3 L902.2,663.6 L901.2,669.8 L899.6,675.8 L897.6,681.7 L895,687.4 L892,692.7 L888.5,697.8 L884.6,702.6 L880.2,707 L875.5,710.9 L870.5,714.5 L865.2,717.5 L859.7,720.1 L853.9,722.1 L848,723.6 L841.9,724.6 L835.8,725.1 L829.6,724.9 L823.5,724.3 L817.4,723.1 L811.4,721.3 L805.6,719.1 L800,716.3 L794.7,713.1 L789.6,709.4 L784.8,705.3 L780.4,700.7 L776.4,695.8 L772.9,690.6 L769.7,685.1 L767.1,679.3 L764.9,673.4 L763.3,667.3 L762.2,661.1 L761.6,654.8 L761.5,648.5 L762,642.2 L763,636 L764.6,630 L766.6,624.1 L769.2,618.4 L772.2,613.1 L775.7,608 L779.6,603.2 L784,598.8 L788.7,594.9 L793.7,591.3 L799,588.3 L804.5,585.7 L810.3,583.7 L816.2,582.2 L822.3,581.2 L828.4,580.7 L834.6,580.9 L840.7,581.5 L846.8,582.7 L852.8,584.5 L858.6,586.7 L864.2,589.5 L869.5,592.7 L874.6,596.4 L879.4,600.5 L883.8,605.1 L887.8,610 L891.3,615.2 L894.5,620.7 L897.1,626.5 L899.3,632.4 L900.9,638.5ZM702.7,485.8 L703.3,492.1 L703.4,498.4 L702.9,504.7 L701.9,510.9 L700.3,516.9 L698.3,522.8 L695.7,528.5 L692.7,533.8 L689.2,538.9 L685.3,543.7 L680.9,548.1 L676.2,552 L671.2,555.6 L665.9,558.6 L660.4,561.2 L654.6,563.2 L648.7,564.7 L642.6,565.7 L636.5,566.2 L630.3,566 L624.2,565.4 L618.1,564.2 L612.1,562.4 L606.3,560.2 L600.7,557.4 L595.4,554.2 L590.3,550.5 L585.5,546.4 L581.1,541.8 L577.1,536.9 L573.6,531.7 L570.4,526.2 L567.8,520.4 L565.6,514.5 L564,508.4 L562.9,502.2 L562.3,495.9 L562.2,489.6 L562.7,483.3 L563.7,477.1 L565.3,471.1 L567.3,465.2 L569.9,459.5 L572.9,454.2 L576.4,449.1 L580.3,444.3 L584.7,439.9 L589.4,436 L594.4,432.4 L599.7,429.4 L605.2,426.8 L611,424.8 L616.9,423.3 L623,422.3 L629.1,421.8 L635.3,422 L641.4,422.6 L647.5,423.8 L653.5,425.6 L659.3,427.8 L664.9,430.6 L670.2,433.8 L675.3,437.5 L680.1,441.6 L684.5,446.2 L688.5,451.1 L692,456.3 L695.2,461.8 L697.8,467.6 L700,473.5 L701.6,479.6ZM1052.3,445 L1053.8,458.2 L1054.6,471.4 L1054.7,484.7 L1054.1,497.9 L1052.9,511 L1050.9,524 L1048.4,536.9 L1045.1,549.6 L1041.2,562.1 L1036.7,574.4 L1031.5,586.4 L1025.7,598 L1019.4,609.4 L1012.4,620.3 L1004.9,630.9 L996.8,641 L988.3,650.7 L979.2,659.9 L969.7,668.6 L959.7,676.7 L949.3,684.3 L938.5,691.3 L927.3,697.7 L915.8,703.5 L904.1,708.7 L892,713.2 L879.8,717.1 L867.3,720.3 L854.7,722.8 L841.9,724.6 L829,725.8 L816.1,726.2 L803.2,726 L790.3,725.1 L777.4,723.5 L764.6,721.2 L751.9,718.2 L739.4,714.5 L727.1,710.2 L714.9,705.3 L703.1,699.7 L691.5,693.5 L680.2,686.7 L669.3,679.3 L658.8,671.3 L648.7,662.8 L639,653.8 L629.8,644.3 L621,634.3 L612.8,623.8 L605.1,613 L598,601.8 L591.4,590.2 L585.5,578.3 L580.1,566.2 L575.4,553.7 L571.3,541.1 L567.8,528.2 L565,515.3 L562.9,502.2 L561.4,489 L560.6,475.8 L560.5,462.5 L561.1,449.3 L562.3,436.2 L564.3,423.2 L566.8,410.3 L570.1,397.6 L574,385.1 L578.5,372.8 L583.7,360.8 L589.5,349.2 L595.8,337.8 L602.8,326.9 L610.3,316.3 L618.4,306.2 L626.9,296.5 L636,287.3 L645.5,278.6 L655.5,270.5 L665.9,262.9 L676.7,255.9 L687.9,249.5 L699.4,243.7 L711.1,238.5 L723.2,234 L735.4,230.1 L747.9,226.9 L760.5,224.4 L773.3,222.6 L786.2,221.4 L799.1,221 L812,221.2 L824.9,222.1 L837.8,223.7 L850.6,226 L863.3,229 L875.8,232.7 L888.1,237 L900.3,241.9 L912.1,247.5 L923.7,253.7 L935,260.5 L945.9,267.9 L956.4,275.9 L966.5,284.4 L976.2,293.4 L985.4,302.9 L994.2,312.9 L1002.4,323.4 L1010.1,334.2 L1017.2,345.4 L1023.8,357 L1029.7,368.9 L1035.1,381 L1039.8,393.5 L1043.9,406.1 L1047.4,419 L1050.2,431.9ZM912.5,461.4 L913.4,470.8 L913.4,480.2 L912.7,489.6 L911.2,498.9 L908.9,508 L905.8,516.8 L901.9,525.3 L897.4,533.4 L892.2,541 L886.3,548.1 L879.8,554.7 L872.8,560.6 L865.2,565.9 L857.3,570.5 L848.9,574.3 L840.3,577.4 L831.4,579.7 L822.3,581.2 L813.1,581.8 L803.9,581.7 L794.7,580.7 L785.5,578.9 L776.6,576.3 L767.9,572.9 L759.5,568.7 L751.4,563.9 L743.8,558.3 L736.7,552.1 L730.1,545.3 L724.1,538 L718.8,530.2 L714.1,521.9 L710.1,513.3 L706.9,504.3 L704.4,495.2 L702.7,485.8 L701.8,476.4 L701.8,467 L702.5,457.6 L704,448.3 L706.3,439.2 L709.4,430.4 L713.3,421.9 L717.8,413.8 L723,406.2 L728.9,399.1 L735.4,392.5 L742.4,386.6 L750,381.3 L757.9,376.7 L766.3,372.9 L774.9,369.8 L783.8,367.5 L792.9,366 L802.1,365.4 L811.3,365.5 L820.5,366.5 L829.7,368.3 L838.6,370.9 L847.3,374.3 L855.7,378.5 L863.8,383.3 L871.4,388.9 L878.5,395.1 L885.1,401.9 L891.1,409.2 L896.4,417 L901.1,425.3 L905.1,433.9 L908.3,442.9 L910.8,452Z" stroke="#8d95a1" stroke-width="1" stroke-dasharray="20 4 3 4"/>
<circle cx="783.1" cy="294.3" r="2" fill="#8a929e"/>
<circle cx="982.4" cy="453.2" r="2" fill="#8a929e"/>
<circle cx="832.1" cy="652.9" r="2" fill="#8a929e"/>
<path class="w12" d="M571.8,590.4l-0.9,-1.8l23,-10.1l0.9,1.8z"/>
<path class="e" d="M594.8,580.3l-0.9,-1.8M570.9,588.6l23,-10.1"/>
<path class="w12" d="M572.7,592.2l-0.9,-1.8l23,-10.1l0.9,1.8z"/>
<path class="e" d="M595.7,582.1l-0.9,-1.8"/>
<path class="w12" d="M573.6,594l-0.9,-1.8l23,-10.1l0.9,1.8z"/>
<path class="e" d="M596.6,583.9l-0.9,-1.8M573.6,594l23,-10.1"/>
<path class="w4" d="M570.9,588.6l3.3,-6.1l23,-10.1l-3.3,6.1z"/>
<path class="e" d="M593.9,578.5l3.3,-6.1M570.9,588.6l23,-10.1"/>
<path class="w15" d="M580.5,595l-6.9,-1l23,-10.1l6.9,1z"/>
<path class="e" d="M603.5,584.9l-6.9,-1M573.6,594l23,-10.1"/>
<path class="w11" d="M551.9,537l-0.5,-1.9l23,-10.1l0.5,1.9z"/>
<path class="e" d="M574.9,526.9l-0.5,-1.9M551.9,537l23,-10.1"/>
<path class="w11" d="M551.4,535.1l-0.5,-1.9l23,-10.1l0.5,1.9z"/>
<path class="e" d="M574.4,525l-0.5,-1.9"/>
<path class="w11" d="M550.9,533.2l-0.5,-1.9l23,-10.1l0.5,1.9z"/>
<path class="e" d="M573.9,523.1l-0.5,-1.9M550.5,531.2l23,-10.1"/>
<path class="w15" d="M558.4,539.6l-6.5,-2.6l23,-10.1l6.5,2.6z"/>
<path class="e" d="M581.4,529.5l-6.5,-2.6M551.9,537l23,-10.1"/>
<path class="w2" d="M550.5,531.2l4.6,-5.2l23,-10.1l-4.6,5.2z"/>
<path class="e" d="M573.5,521.1l4.6,-5.2M550.5,531.2l23,-10.1"/>
<path class="w3" d="M574.3,582.5l3.5,-5.8l23,-10.1l-3.5,5.8z"/>
<path class="e" d="M597.3,572.4l3.5,-5.8"/>
<path class="w14" d="M604.5,641.8l-1.2,-1.6l23,-10.1l1.2,1.6z"/>
<path class="e" d="M627.5,631.7l-1.2,-1.6M603.3,640.3l23,-10.1"/>
<path class="w15" d="M587.3,595.7l-6.8,-0.7l23,-10.1l6.8,0.7z"/>
<path class="e" d="M610.3,585.6l-6.8,-0.7"/>
<path class="w14" d="M605.8,643.4l-1.2,-1.5l23,-10.1l1.2,1.5z"/>
<path class="e" d="M628.8,633.3l-1.2,-1.5"/>
<path class="w14" d="M607,644.9l-1.3,-1.5l23,-10.1l1.3,1.5z"/>
<path class="e" d="M630,634.8l-1.3,-1.5M607,644.9l23,-10.1"/>
<path class="w15" d="M564.9,541.8l-6.5,-2.2l23,-10.1l6.5,2.2z"/>
<path class="e" d="M587.9,531.7l-6.5,-2.2"/>
<path class="w6" d="M603.3,640.3l1.9,-6.8l23,-10.1l-1.9,6.8z"/>
<path class="e" d="M626.3,630.2l1.9,-6.8M603.3,640.3l23,-10.1"/>
<path class="w14" d="M613.9,644.4l-6.9,0.6l23,-10.1l6.9,-0.6z"/>
<path class="e" d="M636.9,634.3l-6.9,0.6M607,644.9l23,-10.1"/>
<path class="w1" d="M555.1,526l4.7,-4.9l23,-10.1l-4.7,4.9z"/>
<path class="e" d="M578.1,515.9l4.7,-4.9"/>
<path class="w3" d="M577.8,576.6l3.7,-5.5l23,-10.1l-3.7,5.5z"/>
<path class="e" d="M600.8,566.5l3.7,-5.5"/>
<path class="w15" d="M593.9,596l-6.6,-0.3l23,-10.1l6.6,0.3z"/>
<path class="e" d="M616.9,585.9l-6.6,-0.3"/>
<path class="w5" d="M605.2,633.5l2.2,-6.5l23,-10.1l-2.2,6.5z"/>
<path class="e" d="M628.2,623.4l2.2,-6.5"/>
<path class="w15" d="M571.4,543.6l-6.4,-1.8l23,-10.1l6.4,1.8z"/>
<path class="e" d="M594.4,533.5l-6.4,-1.8"/>
<path class="w2" d="M581.5,571.1l3.9,-5.2l23,-10.1l-3.9,5.2z"/>
<path class="e" d="M604.5,561l3.9,-5.2"/>
<path class="w9" d="M543,476.9l-0.1,-2l23,-10.1l0.1,2z"/>
<path class="e" d="M566,466.8l-0.1,-2M543,476.9l23,-10.1"/>
<path class="w14" d="M620.7,643.5l-6.7,0.9l23,-10.1l6.7,-0.9z"/>
<path class="e" d="M643.7,633.4l-6.7,0.9"/>
<path class="w1" d="M559.8,521.2l4.9,-4.5l23,-10.1l-4.9,4.5z"/>
<path class="e" d="M582.8,511.1l4.9,-4.5"/>
<path class="w5" d="M607.3,627l2.4,-6.3l23,-10.1l-2.4,6.3z"/>
<path class="e" d="M630.3,616.9l2.4,-6.3"/>
<path class="w9" d="M543,474.9l-0.1,-2l23,-10.1l0.1,2z"/>
<path class="e" d="M566,464.8l-0.1,-2"/>
<path class="w14" d="M600.4,596l-6.5,0l23,-10.1l6.5,-0z"/>
<path class="e" d="M623.4,585.9l-6.5,0"/>
<path class="w15" d="M577.8,545.1l-6.4,-1.5l23,-10.1l6.4,1.5z"/>
<path class="e" d="M600.8,535l-6.4,-1.5"/>
<path class="w9" d="M542.9,472.9l-0,-2l23,-10.1l0,2z"/>
<path class="e" d="M565.9,462.8l-0,-2M542.9,470.9l23,-10.1"/>
<path class="w15" d="M548.9,480.8l-5.9,-4l23,-10.1l5.9,4z"/>
<path class="e" d="M571.9,470.7l-5.9,-4M543,476.9l23,-10.1"/>
<path class="w4" d="M609.7,620.7l2.7,-6l23,-10.1l-2.7,6z"/>
<path class="e" d="M632.7,610.6l2.7,-6"/>
<path class="w0" d="M542.9,470.9l5.6,-4l23,-10.1l-5.6,4z"/>
<path class="e" d="M565.9,460.8l5.6,-4M542.9,470.9l23,-10.1"/>
<path class="w15" d="M554.8,484.5l-5.9,-3.6l23,-10.1l5.9,3.6z"/>
<path class="e" d="M577.8,474.4l-5.9,-3.6"/>
<path class="w2" d="M585.4,565.9l4.1,-4.8l23,-10.1l-4.1,4.8z"/>
<path class="e" d="M608.4,555.8l4.1,-4.8"/>
<path class="w0" d="M564.7,516.7l5,-4.1l23,-10.1l-5,4.1z"/>
<path class="e" d="M587.7,506.6l5,-4.1"/>
<path class="w15" d="M584,546.1l-6.3,-1.1l23,-10.1l6.3,1.1z"/>
<path class="e" d="M607,536l-6.3,-1.1"/>
<path class="w14" d="M627.2,642.3l-6.5,1.2l23,-10.1l6.5,-1.2z"/>
<path class="e" d="M650.2,632.2l-6.5,1.2"/>
<path class="w14" d="M606.7,595.6l-6.3,0.4l23,-10.1l6.3,-0.4z"/>
<path class="e" d="M629.7,585.5l-6.3,0.4"/>
<path class="w15" d="M560.7,487.7l-5.9,-3.2l23,-10.1l5.9,3.2z"/>
<path class="e" d="M583.7,477.6l-5.9,-3.2"/>
<path class="w1" d="M589.6,561.1l2.2,-2.3l23,-10.1l-2.2,2.3z"/>
<path class="e" d="M612.6,551l2.2,-2.3"/>
<path class="n" d="M591.8,558.8l23,-10.1"/>
<path class="w4" d="M612.4,614.7l2.9,-5.7l23,-10.1l-2.9,5.7z"/>
<path class="e" d="M635.4,604.6l2.9,-5.7"/>
<path class="w15" d="M587.3,546.5l-3.2,-0.3l23,-10.1l3.2,0.3z"/>
<path class="e" d="M610.3,536.4l-3.2,-0.3"/>
<path class="n" d="M587.3,546.5l23,-10.1"/>
<path class="w14" d="M647.4,684.8l-1.5,-1.2l23,-10.1l1.5,1.2z"/>
<path class="e" d="M670.4,674.7l-1.5,-1.2M645.9,683.6l23,-10.1"/>
<path class="w14" d="M609.9,595.2l-3.2,0.4l23,-10.1l3.2,-0.4z"/>
<path class="e" d="M632.9,585.1l-3.2,0.4"/>
<path class="n" d="M609.9,595.2l23,-10.1"/>
<path class="w15" d="M649,686l-1.5,-1.2l23,-10.1l1.5,1.2z"/>
<path class="e" d="M672,675.9l-1.5,-1.2"/>
<path class="w2" d="M591.8,558.8l0.8,-1.1l23,-10.1l-0.8,1.1z"/>
<path class="e" d="M614.8,548.7l0.8,-1.1"/>
<path class="n" d="M591.8,558.8l23,-10.1"/>
<path class="w8" d="M645.9,683.6l0.3,-7.1l23,-10.1l-0.3,7.1z"/>
<path class="e" d="M668.9,673.5l0.3,-7.1M645.9,683.6l23,-10.1"/>
<path class="w0" d="M548.5,466.9l5.7,-3.6l23,-10.1l-5.7,3.6z"/>
<path class="e" d="M571.5,456.8l5.7,-3.6"/>
<path class="w15" d="M588.5,546.8l-1.3,-0.3l23,-10.1l1.3,0.3z"/>
<path class="e" d="M611.5,536.7l-1.3,-0.3"/>
<path class="n" d="M587.3,546.5l23,-10.1"/>
<path class="w0" d="M569.6,512.5l5.1,-3.7l23,-10.1l-5.1,3.7z"/>
<path class="e" d="M592.6,502.4l5.1,-3.7"/>
<path class="w15" d="M650.5,687.3l-1.6,-1.2l23,-10.1l1.6,1.2z"/>
<path class="e" d="M673.5,677.2l-1.6,-1.2M650.5,687.3l23,-10.1"/>
<path class="w5" d="M592.6,557.7l0.4,-1.3l23,-10.1l-0.4,1.3z"/>
<path class="e" d="M615.6,547.6l0.4,-1.3"/>
<path class="w13" d="M633.5,640.8l-6.3,1.5l23,-10.1l6.3,-1.5z"/>
<path class="e" d="M656.5,630.7l-6.3,1.5"/>
<path class="w15" d="M589.7,547.5l-1.1,-0.7l23,-10.1l1.1,0.7z"/>
<path class="e" d="M612.7,537.4l-1.1,-0.7"/>
<path class="w15" d="M566.6,490.6l-5.9,-2.9l23,-10.1l5.9,2.9z"/>
<path class="e" d="M589.6,480.5l-5.9,-2.9"/>
<path class="w8" d="M593,556.5l0.1,-1.3l23,-10.1l-0.1,1.3z"/>
<path class="e" d="M616,546.4l0.1,-1.3"/>
<path class="w14" d="M611.2,595.2l-1.3,-0l23,-10.1l1.3,0z"/>
<path class="e" d="M634.2,585.1l-1.3,-0"/>
<path class="n" d="M609.9,595.2l23,-10.1"/>
<path class="w3" d="M615.3,609l1.7,-2.8l23,-10.1l-1.7,2.8z"/>
<path class="e" d="M638.3,598.9l1.7,-2.8"/>
<path class="n" d="M617,606.3l23,-10.1"/>
<path class="w10" d="M593.1,555.1l-0.3,-1.3l23,-10.1l0.3,1.3z"/>
<path class="e" d="M616.1,545l-0.3,-1.3"/>
<path class="n" d="M592.8,553.8l23,-10.1"/>
<path class="w14" d="M590.6,548.5l-0.9,-1l23,-10.1l0.9,1z"/>
<path class="e" d="M613.6,538.4l-0.9,-1"/>
<path class="w12" d="M592.8,553.8l-0.8,-2.1l23,-10.1l0.8,2.1z"/>
<path class="e" d="M615.8,543.7l-0.8,-2.1"/>
<path class="n" d="M592.8,553.8l23,-10.1"/>
<path class="w11" d="M592,551.7l-0.7,-2.1l23,-10.1l0.7,2.1z"/>
<path class="e" d="M615,541.6l-0.7,-2.1"/>
<path class="n" d="M591.2,549.7l23,-10.1"/>
<path class="w12" d="M591.2,549.7l-0.6,-1.2l23,-10.1l0.6,1.2z"/>
<path class="e" d="M614.2,539.6l-0.6,-1.2"/>
<path class="n" d="M591.2,549.7l23,-10.1"/>
<path class="w15" d="M612.5,595.6l-1.3,-0.4l23,-10.1l1.3,0.4z"/>
<path class="e" d="M635.5,585.5l-1.3,-0.4"/>
<path class="w8" d="M646.2,676.5l0.7,-6.9l23,-10.1l-0.7,6.9z"/>
<path class="e" d="M669.2,666.4l0.7,-6.9"/>
<path class="w0" d="M589.4,536.9l-4,2.3l23,-10.1l4,-2.3z"/>
<path class="e" d="M612.4,526.8l-4,2.3M585.4,539.2l23,-10.1"/>
<path class="w5" d="M617,606.3l0.5,-1.2l23,-10.1l-0.5,1.2z"/>
<path class="e" d="M640,596.2l0.5,-1.2"/>
<path class="n" d="M617,606.3l23,-10.1"/>
<path class="w15" d="M613.6,596.4l-1.1,-0.7l23,-10.1l1.1,0.7z"/>
<path class="e" d="M636.6,586.3l-1.1,-0.7"/>
<path class="w14" d="M614.5,597.4l-0.9,-1l23,-10.1l0.9,1z"/>
<path class="e" d="M637.5,587.3l-0.9,-1"/>
<path class="n" d="M614.5,597.4l23,-10.1"/>
<path class="w7" d="M617.5,605l0.2,-1.3l23,-10.1l-0.2,1.3z"/>
<path class="e" d="M640.5,594.9l0.2,-1.3"/>
<path class="w13" d="M615.7,599.3l-1.2,-1.9l23,-10.1l1.2,1.9z"/>
<path class="e" d="M638.7,589.2l-1.2,-1.9"/>
<path class="n" d="M614.5,597.4l23,-10.1"/>
<path class="w13" d="M657.1,685.1l-6.6,2.1l23,-10.1l6.6,-2.1z"/>
<path class="e" d="M680.1,675l-6.6,2.1M650.5,687.3l23,-10.1"/>
<path class="w13" d="M553.3,465l5.6,-2.1l23,-10.1l-5.6,2.1z"/>
<path class="e" d="M576.3,454.9l5.6,-2.1M553.3,465l23,-10.1"/>
<path class="w13" d="M616.9,601.2l-1.2,-1.9l23,-10.1l1.2,1.9z"/>
<path class="e" d="M639.9,591.1l-1.2,-1.9"/>
<path class="n" d="M616.9,601.2l23,-10.1"/>
<path class="w10" d="M617.7,603.7l-0.2,-1.3l23,-10.1l0.2,1.3z"/>
<path class="e" d="M640.7,593.6l-0.2,-1.3"/>
<path class="w12" d="M617.5,602.4l-0.6,-1.2l23,-10.1l0.6,1.2z"/>
<path class="e" d="M640.5,592.3l-0.6,-1.2"/>
<path class="n" d="M616.9,601.2l23,-10.1"/>
<path class="w0" d="M574.7,508.8l2.7,-1.7l23,-10.1l-2.7,1.7z"/>
<path class="e" d="M597.7,498.7l2.7,-1.7"/>
<path class="n" d="M577.4,507l23,-10.1"/>
<path class="w15" d="M572.6,493l-5.9,-2.5l23,-10.1l5.9,2.5z"/>
<path class="e" d="M595.6,482.9l-5.9,-2.5"/>
<path class="w0" d="M554.2,463.3l5.7,-3.3l23,-10.1l-5.7,3.3z"/>
<path class="e" d="M577.2,453.2l5.7,-3.3"/>
<path class="w7" d="M646.9,669.6l1,-6.7l23,-10.1l-1,6.7z"/>
<path class="e" d="M669.9,659.5l1,-6.7"/>
<path class="w13" d="M574.1,509.8l8,-2.1l23,-10.1l-8,2.1z"/>
<path class="e" d="M597.1,499.7l8,-2.1M574.1,509.8l23,-10.1M582,507.7l23,-10.1"/>
<path class="w13" d="M639.5,639l-6,1.8l23,-10.1l6,-1.8z"/>
<path class="e" d="M662.5,628.9l-6,1.8"/>
<path class="w0" d="M577.4,507l1,-0.9l23,-10.1l-1,0.9z"/>
<path class="e" d="M600.4,496.9l1,-0.9"/>
<path class="n" d="M577.4,507l23,-10.1"/>
<path class="w3" d="M578.4,506.2l0.7,-1.1l23,-10.1l-0.7,1.1z"/>
<path class="e" d="M601.4,496.1l0.7,-1.1"/>
<path class="w15" d="M575.7,494.1l-3.1,-1.1l23,-10.1l3.1,1.1z"/>
<path class="e" d="M598.7,484l-3.1,-1.1"/>
<path class="n" d="M575.7,494.1l23,-10.1"/>
<path class="w6" d="M579.1,505.1l0.4,-1.3l23,-10.1l-0.4,1.3z"/>
<path class="e" d="M602.1,495l0.4,-1.3"/>
<path class="w1" d="M595.3,531.1l-5.9,5.8l23,-10.1l5.9,-5.8z"/>
<path class="e" d="M618.3,521l-5.9,5.8"/>
<path class="n" d="M595.3,531.1l23,-10.1"/>
<path class="w8" d="M579.5,503.8l-0,-1.3l23,-10.1l0,1.3z"/>
<path class="e" d="M602.5,493.7l-0,-1.3"/>
<path class="n" d="M579.5,502.5l23,-10.1"/>
<path class="w7" d="M647.9,662.9l1.3,-6.5l23,-10.1l-1.3,6.5z"/>
<path class="e" d="M670.9,652.8l1.3,-6.5"/>
<path class="w13" d="M558.9,462.8l5.5,-1.4l23,-10.1l-5.5,1.4z"/>
<path class="e" d="M581.9,452.7l5.5,-1.4"/>
<path class="w10" d="M579.5,502.5l-0.3,-2.2l23,-10.1l0.3,2.2z"/>
<path class="e" d="M602.5,492.4l-0.3,-2.2"/>
<path class="n" d="M579.5,502.5l23,-10.1"/>
<path class="w15" d="M576.8,494.7l-1.2,-0.6l23,-10.1l1.2,0.6z"/>
<path class="e" d="M599.8,484.6l-1.2,-0.6"/>
<path class="n" d="M575.7,494.1l23,-10.1"/>
<path class="w13" d="M663.4,682.7l-6.3,2.4l23,-10.1l6.3,-2.4z"/>
<path class="e" d="M686.4,672.6l-6.3,2.4"/>
<path class="w10" d="M579.1,500.3l-0.3,-2.2l23,-10.1l0.3,2.2z"/>
<path class="e" d="M602.1,490.2l-0.3,-2.2"/>
<path class="n" d="M578.9,498.1l23,-10.1"/>
<path class="w14" d="M577.8,495.6l-1,-0.9l23,-10.1l1,0.9z"/>
<path class="e" d="M600.8,485.5l-1,-0.9"/>
<path class="w0" d="M617.2,577.7l-5.3,3.4l23,-10.1l5.3,-3.4z"/>
<path class="e" d="M640.2,567.6l-5.3,3.4M611.9,581.1l23,-10.1"/>
<path class="w11" d="M578.9,498.1l-0.4,-1.3l23,-10.1l0.4,1.3z"/>
<path class="e" d="M601.9,488l-0.4,-1.3"/>
<path class="n" d="M578.9,498.1l23,-10.1"/>
<path class="w13" d="M578.5,496.8l-0.7,-1.2l23,-10.1l0.7,1.2z"/>
<path class="e" d="M601.5,486.7l-0.7,-1.2"/>
<path class="w13" d="M642.5,637.9l-3,1.1l23,-10.1l3,-1.1z"/>
<path class="e" d="M665.5,627.8l-3,1.1"/>
<path class="n" d="M642.5,637.9l23,-10.1"/>
<path class="w0" d="M560,460l5.8,-2.9l23,-10.1l-5.8,2.9z"/>
<path class="e" d="M583,449.9l5.8,-2.9M565.7,457.2l23,-10.1"/>
<path class="w6" d="M649.1,656.4l1.6,-6.2l23,-10.1l-1.6,6.2z"/>
<path class="e" d="M672.1,646.3l1.6,-6.2"/>
<path class="w14" d="M643.8,637.6l-1.3,0.3l23,-10.1l1.3,-0.3z"/>
<path class="e" d="M666.8,627.5l-1.3,0.3"/>
<path class="n" d="M642.5,637.9l23,-10.1"/>
<path class="w0" d="M596.7,530.1l-1.4,0.9l23,-10.1l1.4,-0.9z"/>
<path class="e" d="M619.7,520l-1.4,0.9M596.7,530.1l23,-10.1"/>
<path class="n" d="M595.3,531.1l23,-10.1"/>
<path class="w15" d="M645.1,637.7l-1.3,-0.1l23,-10.1l1.3,0.1z"/>
<path class="e" d="M668.1,627.6l-1.3,-0.1"/>
<path class="w14" d="M564.4,461.5l5.3,-0.6l23,-10.1l-5.3,0.6z"/>
<path class="e" d="M587.4,451.4l5.3,-0.6"/>
<path class="w7" d="M547.4,416.6l0.4,-1.9l23,-10.1l-0.4,1.9z"/>
<path class="e" d="M570.4,406.5l0.4,-1.9M547.4,416.6l23,-10.1"/>
<path class="w15" d="M646.3,638.2l-1.2,-0.5l23,-10.1l1.2,0.5z"/>
<path class="e" d="M669.3,628.1l-1.2,-0.5"/>
<path class="w14" d="M552.3,421.7l-4.9,-5.2l23,-10.1l4.9,5.2z"/>
<path class="e" d="M575.3,411.6l-4.9,-5.2M547.4,416.6l23,-10.1"/>
<path class="w5" d="M650.8,650.2l1,-3.1l23,-10.1l-1,3.1z"/>
<path class="e" d="M673.8,640.1l1,-3.1"/>
<path class="n" d="M651.8,647.1l23,-10.1"/>
<path class="w15" d="M647.4,639l-1.1,-0.8l23,-10.1l1.1,0.8z"/>
<path class="e" d="M670.4,628.9l-1.1,-0.8"/>
<path class="n" d="M647.4,639l23,-10.1"/>
<path class="w7" d="M547.8,414.6l0.4,-1.9l23,-10.1l-0.4,1.9z"/>
<path class="e" d="M570.8,404.5l0.4,-1.9"/>
<path class="w0" d="M621.9,573.9l-4.7,3.8l23,-10.1l4.7,-3.8z"/>
<path class="e" d="M644.9,563.8l-4.7,3.8"/>
<path class="w12" d="M669.5,680.1l-6.1,2.6l23,-10.1l6.1,-2.6z"/>
<path class="e" d="M692.5,670l-6.1,2.6M669.5,680.1l23,-10.1"/>
<path class="w14" d="M648.9,640.6l-1.5,-1.6l23,-10.1l1.5,1.6z"/>
<path class="e" d="M671.9,630.5l-1.5,-1.6"/>
<path class="n" d="M647.4,639l23,-10.1"/>
<path class="w6" d="M548.2,412.7l0.4,-1.9l23,-10.1l-0.4,1.9z"/>
<path class="e" d="M571.2,402.6l0.4,-1.9M548.6,410.8l23,-10.1"/>
<path class="w7" d="M651.8,647.1l0.2,-1.3l23,-10.1l-0.2,1.3z"/>
<path class="e" d="M674.8,637l0.2,-1.3"/>
<path class="n" d="M651.8,647.1l23,-10.1"/>
<path class="w14" d="M650.5,642.1l-1.6,-1.5l23,-10.1l1.6,1.5z"/>
<path class="e" d="M673.5,632l-1.6,-1.5"/>
<path class="n" d="M650.5,642.1l23,-10.1"/>
<path class="w9" d="M652,645.8l-0.1,-1.3l23,-10.1l0.1,1.3z"/>
<path class="e" d="M675,635.7l-0.1,-1.3"/>
<path class="w13" d="M651.4,643.2l-0.8,-1.1l23,-10.1l0.8,1.1z"/>
<path class="e" d="M674.4,633.1l-0.8,-1.1"/>
<path class="n" d="M650.5,642.1l23,-10.1"/>
<path class="w14" d="M557.3,426.6l-5,-4.8l23,-10.1l5,4.8z"/>
<path class="e" d="M580.3,416.5l-5,-4.8"/>
<path class="w12" d="M651.9,644.4l-0.5,-1.3l23,-10.1l0.5,1.3z"/>
<path class="e" d="M674.9,634.3l-0.5,-1.3"/>
<path class="w15" d="M569.7,460.9l5,0.2l23,-10.1l-5,-0.2z"/>
<path class="e" d="M592.7,450.8l5,0.2"/>
<path class="w14" d="M562.4,431.1l-5.1,-4.5l23,-10.1l5.1,4.5z"/>
<path class="e" d="M585.4,421l-5.1,-4.5"/>
<path class="w1" d="M625.8,569.8l-3.9,4.1l23,-10.1l3.9,-4.1z"/>
<path class="e" d="M648.8,559.7l-3.9,4.1"/>
<path class="w15" d="M574.7,461.2l4.5,1.3l23,-10.1l-4.5,-1.3z"/>
<path class="e" d="M597.7,451.1l4.5,1.3"/>
<path class="w15" d="M567.6,435.2l-5.2,-4.1l23,-10.1l5.2,4.1z"/>
<path class="e" d="M590.6,425.1l-5.2,-4.1"/>
<path class="w0" d="M574.6,453.6l1.2,-0.6l23,-10.1l-1.2,0.6z"/>
<path class="e" d="M597.6,443.5l1.2,-0.6M574.6,453.6l23,-10.1"/>
<path class="w1" d="M575.7,453l0.9,-0.9l23,-10.1l-0.9,0.9z"/>
<path class="e" d="M598.7,442.9l0.9,-0.9"/>
<path class="w2" d="M629,565.5l-3.2,4.3l23,-10.1l3.2,-4.3z"/>
<path class="e" d="M652,555.4l-3.2,4.3"/>
<path class="w15" d="M572.9,438.9l-5.3,-3.7l23,-10.1l5.3,3.7z"/>
<path class="e" d="M595.9,428.8l-5.3,-3.7"/>
<path class="w4" d="M576.7,452.1l0.6,-1.2l23,-10.1l-0.6,1.2z"/>
<path class="e" d="M599.7,442l0.6,-1.2"/>
<path class="w15" d="M579.2,462.4l7.3,4.3l23,-10.1l-7.3,-4.3z"/>
<path class="e" d="M602.2,452.3l7.3,4.3"/>
<path class="n" d="M586.5,466.7l23,-10.1"/>
<path class="w6" d="M577.3,450.9l0.3,-1.3l23,-10.1l-0.3,1.3z"/>
<path class="e" d="M600.3,440.8l0.3,-1.3"/>
<path class="n" d="M577.6,449.6l23,-10.1"/>
<path class="w8" d="M577.6,449.6l0.2,-2.2l23,-10.1l-0.2,2.2z"/>
<path class="e" d="M600.6,439.5l0.2,-2.2"/>
<path class="n" d="M577.6,449.6l23,-10.1"/>
<path class="w15" d="M575.7,440.7l-2.8,-1.7l23,-10.1l2.8,1.7z"/>
<path class="e" d="M598.7,430.6l-2.8,-1.7"/>
<path class="n" d="M575.7,440.7l23,-10.1"/>
<path class="w8" d="M577.7,447.4l0.2,-2.2l23,-10.1l-0.2,2.2z"/>
<path class="e" d="M600.7,437.3l0.2,-2.2"/>
<path class="n" d="M577.9,445.3l23,-10.1"/>
<path class="w15" d="M586.5,466.7l1.6,0.6l23,-10.1l-1.6,-0.6z"/>
<path class="e" d="M609.5,456.6l1.6,0.6"/>
<path class="n" d="M586.5,466.7l23,-10.1"/>
<path class="w15" d="M698.3,717.2l-1.8,-0.9l23,-10.1l1.8,0.9z"/>
<path class="e" d="M721.3,707.1l-1.8,-0.9M696.6,716.3l23,-10.1"/>
<path class="w14" d="M576.7,441.5l-1,-0.9l23,-10.1l1,0.9z"/>
<path class="e" d="M599.7,431.4l-1,-0.9"/>
<path class="n" d="M575.7,440.7l23,-10.1"/>
<path class="w10" d="M696.6,716.3l-1.2,-7l23,-10.1l1.2,7z"/>
<path class="e" d="M719.6,706.2l-1.2,-7M696.6,716.3l23,-10.1"/>
<path class="w4" d="M631.4,561.1l-2.3,4.5l23,-10.1l2.3,-4.5z"/>
<path class="e" d="M654.4,551l-2.3,4.5"/>
<path class="w9" d="M577.9,445.3l-0.1,-1.3l23,-10.1l0.1,1.3z"/>
<path class="e" d="M600.9,435.2l-0.1,-1.3"/>
<path class="n" d="M577.9,445.3l23,-10.1"/>
<path class="w13" d="M577.5,442.6l-0.8,-1.1l23,-10.1l0.8,1.1z"/>
<path class="e" d="M600.5,432.5l-0.8,-1.1"/>
<path class="w11" d="M577.9,443.9l-0.4,-1.3l23,-10.1l0.4,1.3z"/>
<path class="e" d="M600.9,433.8l-0.4,-1.3"/>
<path class="w15" d="M700.1,718l-1.8,-0.9l23,-10.1l1.8,0.9z"/>
<path class="e" d="M723.1,707.9l-1.8,-0.9"/>
<path class="w14" d="M588.2,467.3l1.7,-0.1l23,-10.1l-1.7,0.1z"/>
<path class="e" d="M611.2,457.2l1.7,-0.1M589.9,467.2l23,-10.1"/>
<path class="w10" d="M695.4,709.3l-0.9,-6.9l23,-10.1l0.9,6.9z"/>
<path class="e" d="M718.4,699.2l-0.9,-6.9"/>
<path class="w15" d="M701.9,718.9l-1.8,-0.8l23,-10.1l1.8,0.8z"/>
<path class="e" d="M724.9,708.8l-1.8,-0.8M701.9,718.9l23,-10.1"/>
<path class="w6" d="M632.6,556.5l-1.2,4.6l23,-10.1l1.2,-4.6z"/>
<path class="e" d="M655.6,546.4l-1.2,4.6"/>
<path class="w9" d="M694.5,702.4l-0.5,-6.8l23,-10.1l0.5,6.8z"/>
<path class="e" d="M717.5,692.3l-0.5,-6.8"/>
<path class="w9" d="M694,695.6l-0.2,-6.6l23,-10.1l0.2,6.6z"/>
<path class="e" d="M717,685.5l-0.2,-6.6"/>
<path class="w14" d="M685.8,671.5l-1.3,0.2l23,-10.1l1.3,-0.2z"/>
<path class="e" d="M708.8,661.4l-1.3,0.2M684.5,671.7l23,-10.1"/>
<path class="w8" d="M632.6,548l-0,8.5l23,-10.1l0,-8.5z"/>
<path class="e" d="M655.6,537.9l-0,8.5"/>
<path class="n" d="M632.6,548l23,-10.1"/>
<path class="w15" d="M687.1,671.7l-1.3,-0.2l23,-10.1l1.3,0.2z"/>
<path class="e" d="M710.1,661.6l-1.3,-0.2"/>
<path class="w15" d="M688.3,672.3l-1.2,-0.6l23,-10.1l1.2,0.6z"/>
<path class="e" d="M711.3,662.2l-1.2,-0.6"/>
<path class="n" d="M688.3,672.3l23,-10.1"/>
<path class="w7" d="M632.9,546.3l-0.3,1.7l23,-10.1l0.3,-1.7z"/>
<path class="e" d="M655.9,536.2l-0.3,1.7"/>
<path class="n" d="M632.6,548l23,-10.1"/>
<path class="w8" d="M693.8,688.9l0.2,-6.5l23,-10.1l-0.2,6.5z"/>
<path class="e" d="M716.8,678.8l0.2,-6.5"/>
<path class="w15" d="M690.2,673.4l-1.8,-1.2l23,-10.1l1.8,1.2z"/>
<path class="e" d="M713.2,663.3l-1.8,-1.2"/>
<path class="n" d="M688.3,672.3l23,-10.1"/>
<path class="w3" d="M633.9,544.8l-0.9,1.5l23,-10.1l0.9,-1.5z"/>
<path class="e" d="M656.9,534.7l-0.9,1.5"/>
<path class="w15" d="M692.1,674.6l-1.9,-1.2l23,-10.1l1.9,1.2z"/>
<path class="e" d="M715.1,664.5l-1.9,-1.2"/>
<path class="n" d="M692.1,674.6l23,-10.1"/>
<path class="w8" d="M694,682.5l0.3,-3.3l23,-10.1l-0.3,3.3z"/>
<path class="e" d="M717,672.4l0.3,-3.3"/>
<path class="n" d="M694.3,679.2l23,-10.1"/>
<path class="w0" d="M635.3,543.8l-1.4,1l23,-10.1l1.4,-1z"/>
<path class="e" d="M658.3,533.7l-1.4,1M635.3,543.8l23,-10.1"/>
<path class="w14" d="M693.1,675.4l-1,-0.9l23,-10.1l1,0.9z"/>
<path class="e" d="M716.1,665.3l-1,-0.9"/>
<path class="n" d="M692.1,674.6l23,-10.1"/>
<path class="w9" d="M694.3,679.2l-0.1,-1.3l23,-10.1l0.1,1.3z"/>
<path class="e" d="M717.3,669.1l-0.1,-1.3"/>
<path class="n" d="M694.3,679.2l23,-10.1"/>
<path class="w13" d="M693.9,676.6l-0.8,-1.1l23,-10.1l0.8,1.1z"/>
<path class="e" d="M716.9,666.5l-0.8,-1.1"/>
<path class="w11" d="M694.3,677.8l-0.4,-1.3l23,-10.1l0.4,1.3z"/>
<path class="e" d="M717.3,667.7l-0.4,-1.3"/>
<path class="w13" d="M568.5,365.2l-3.7,-6.1l23,-10.1l3.7,6.1z"/>
<path class="e" d="M591.5,355.1l-3.7,-6.1M564.9,359.1l23,-10.1"/>
<path class="w4" d="M564.9,359.1l0.8,-1.8l23,-10.1l-0.8,1.8z"/>
<path class="e" d="M587.9,349l0.8,-1.8M564.9,359.1l23,-10.1"/>
<path class="w13" d="M572.4,371.1l-3.8,-5.8l23,-10.1l3.8,5.8z"/>
<path class="e" d="M595.4,361l-3.8,-5.8"/>
<path class="w0" d="M584.7,400.9l1.1,-0.7l23,-10.1l-1.1,0.7z"/>
<path class="e" d="M607.7,390.8l1.1,-0.7M584.7,400.9l23,-10.1"/>
<path class="w4" d="M565.6,357.3l0.8,-1.8l23,-10.1l-0.8,1.8z"/>
<path class="e" d="M588.6,347.2l0.8,-1.8"/>
<path class="w15" d="M589.2,414.4l6.1,2.1l23,-10.1l-6.1,-2.1z"/>
<path class="e" d="M612.2,404.3l6.1,2.1M589.2,414.4l23,-10.1"/>
<path class="w13" d="M576.4,376.6l-4,-5.5l23,-10.1l4,5.5z"/>
<path class="e" d="M599.4,366.5l-4,-5.5"/>
<path class="w2" d="M585.8,400.2l0.9,-1l23,-10.1l-0.9,1z"/>
<path class="e" d="M608.8,390.1l0.9,-1"/>
<path class="w4" d="M566.4,355.5l0.8,-1.8l23,-10.1l-0.8,1.8z"/>
<path class="e" d="M589.4,345.4l0.8,-1.8M567.2,353.7l23,-10.1"/>
<path class="w4" d="M586.7,399.2l0.6,-1.2l23,-10.1l-0.6,1.2z"/>
<path class="e" d="M609.7,389.1l0.6,-1.2"/>
<path class="n" d="M587.2,398l23,-10.1"/>
<path class="w14" d="M580.6,381.8l-4.2,-5.2l23,-10.1l4.2,5.2z"/>
<path class="e" d="M603.6,371.7l-4.2,-5.2"/>
<path class="w6" d="M587.2,398l0.6,-2.1l23,-10.1l-0.6,2.1z"/>
<path class="e" d="M610.2,387.9l0.6,-2.1"/>
<path class="n" d="M587.2,398l23,-10.1"/>
<path class="w14" d="M584.9,386.6l-4.4,-4.8l23,-10.1l4.4,4.8z"/>
<path class="e" d="M607.9,376.5l-4.4,-4.8"/>
<path class="w15" d="M595.2,416.5l5.5,2.6l23,-10.1l-5.5,-2.6z"/>
<path class="e" d="M618.2,406.4l5.5,2.6"/>
<path class="w5" d="M587.9,395.9l0.7,-2.1l23,-10.1l-0.7,2.1z"/>
<path class="e" d="M610.9,385.8l0.7,-2.1"/>
<path class="n" d="M588.5,393.9l23,-10.1"/>
<path class="w14" d="M587.3,388.9l-2.4,-2.3l23,-10.1l2.4,2.3z"/>
<path class="e" d="M610.3,378.8l-2.4,-2.3"/>
<path class="n" d="M587.3,388.9l23,-10.1"/>
<path class="w7" d="M588.5,393.9l0.2,-1.3l23,-10.1l-0.2,1.3z"/>
<path class="e" d="M611.5,383.8l0.2,-1.3"/>
<path class="n" d="M588.5,393.9l23,-10.1"/>
<path class="w9" d="M588.8,392.6l-0.1,-1.3l23,-10.1l0.1,1.3z"/>
<path class="e" d="M611.8,382.5l-0.1,-1.3"/>
<path class="w13" d="M588.1,390l-0.8,-1.1l23,-10.1l0.8,1.1z"/>
<path class="e" d="M611.1,379.9l-0.8,-1.1"/>
<path class="n" d="M587.3,388.9l23,-10.1"/>
<path class="w12" d="M588.6,391.2l-0.5,-1.3l23,-10.1l0.5,1.3z"/>
<path class="e" d="M611.6,381.1l-0.5,-1.3"/>
<path class="w15" d="M600.7,419.1l4.9,3l23,-10.1l-4.9,-3z"/>
<path class="e" d="M623.7,409l4.9,3"/>
<path class="w14" d="M605.7,422.1l4.2,3.4l23,-10.1l-4.2,-3.4z"/>
<path class="e" d="M628.7,412l4.2,3.4"/>
<path class="w14" d="M609.9,425.6l3.5,3.8l23,-10.1l-3.5,-3.8z"/>
<path class="e" d="M632.9,415.5l3.5,3.8"/>
<path class="w12" d="M618.1,441.7l0.8,1.6l23,-10.1l-0.8,-1.6z"/>
<path class="e" d="M641.1,431.6l0.8,1.6"/>
<path class="n" d="M618.1,441.7l23,-10.1"/>
<path class="w14" d="M618.9,443.3l1.3,1.2l23,-10.1l-1.3,-1.2z"/>
<path class="e" d="M641.9,433.2l1.3,1.2"/>
<path class="w11" d="M615.8,433.5l2.3,8.2l23,-10.1l-2.3,-8.2z"/>
<path class="e" d="M638.8,423.4l2.3,8.2"/>
<path class="n" d="M618.1,441.7l23,-10.1"/>
<path class="w0" d="M677.2,573.1l-0.7,0.4l23,-10.1l0.7,-0.4z"/>
<path class="e" d="M700.2,563l-0.7,0.4M676.4,573.6l23,-10.1"/>
<path class="w13" d="M613.4,429.4l2.4,4.1l23,-10.1l-2.4,-4.1z"/>
<path class="e" d="M636.4,419.3l2.4,4.1"/>
<path class="w15" d="M620.2,444.5l1.6,0.6l23,-10.1l-1.6,-0.6z"/>
<path class="e" d="M643.2,434.4l1.6,0.6"/>
<path class="w0" d="M677.9,572.7l-0.7,0.4l23,-10.1l0.7,-0.4z"/>
<path class="e" d="M700.9,562.6l-0.7,0.4"/>
<path class="w13" d="M732.7,695.4l-1.2,0.5l23,-10.1l1.2,-0.5z"/>
<path class="e" d="M755.7,685.3l-1.2,0.5M731.5,695.9l23,-10.1"/>
<path class="w0" d="M678.7,572.3l-0.7,0.4l23,-10.1l0.7,-0.4z"/>
<path class="e" d="M701.7,562.2l-0.7,0.4M678.7,572.3l23,-10.1"/>
<path class="w14" d="M621.8,445.2l1.7,0l23,-10.1l-1.7,-0z"/>
<path class="e" d="M644.8,435.1l1.7,0"/>
<path class="n" d="M623.5,445.2l23,-10.1"/>
<path class="w14" d="M734,695.3l-1.3,0.1l23,-10.1l1.3,-0.1z"/>
<path class="e" d="M757,685.2l-1.3,0.1"/>
<path class="w15" d="M735.3,695.6l-1.3,-0.3l23,-10.1l1.3,0.3z"/>
<path class="e" d="M758.3,685.5l-1.3,-0.3"/>
<path class="n" d="M735.3,695.6l23,-10.1"/>
<path class="w12" d="M752.8,736.9l-2.7,-6.6l23,-10.1l2.7,6.6z"/>
<path class="e" d="M775.8,726.8l-2.7,-6.6M752.8,736.9l23,-10.1"/>
<path class="w6" d="M680,566l-1.3,6.3l23,-10.1l1.3,-6.3z"/>
<path class="e" d="M703,555.9l-1.3,6.3M678.7,572.3l23,-10.1"/>
<path class="w11" d="M750.1,730.3l-2.3,-6.6l23,-10.1l2.3,6.6z"/>
<path class="e" d="M773.1,720.2l-2.3,-6.6"/>
<path class="w14" d="M623.5,445.2l2.6,-0.5l23,-10.1l-2.6,0.5z"/>
<path class="e" d="M646.5,435.1l2.6,-0.5"/>
<path class="n" d="M623.5,445.2l23,-10.1"/>
<path class="w15" d="M754.7,737.3l-1.9,-0.5l23,-10.1l1.9,0.5z"/>
<path class="e" d="M777.7,727.2l-1.9,-0.5M752.8,736.9l23,-10.1"/>
<path class="w11" d="M747.8,723.7l-2,-6.5l23,-10.1l2,6.5z"/>
<path class="e" d="M770.8,713.6l-2,-6.5"/>
<path class="w15" d="M737.3,696.3l-2,-0.7l23,-10.1l2,0.7z"/>
<path class="e" d="M760.3,686.2l-2,-0.7"/>
<path class="n" d="M735.3,695.6l23,-10.1"/>
<path class="w11" d="M745.8,717.1l-1.6,-6.5l23,-10.1l1.6,6.5z"/>
<path class="e" d="M768.8,707l-1.6,-6.5"/>
<path class="w15" d="M756.6,737.8l-1.9,-0.4l23,-10.1l1.9,0.4z"/>
<path class="e" d="M779.6,727.7l-1.9,-0.4"/>
<path class="w15" d="M739.4,697l-2.1,-0.7l23,-10.1l2.1,0.7z"/>
<path class="e" d="M762.4,686.9l-2.1,-0.7"/>
<path class="n" d="M739.4,697l23,-10.1"/>
<path class="w14" d="M626.1,444.7l2.6,-0.1l23,-10.1l-2.6,0.1z"/>
<path class="e" d="M649.1,434.6l2.6,-0.1"/>
<path class="n" d="M628.7,444.6l23,-10.1"/>
<path class="w10" d="M744.2,710.7l-1.2,-6.4l23,-10.1l1.2,6.4z"/>
<path class="e" d="M767.2,700.6l-1.2,-6.4"/>
<path class="w7" d="M680.6,559.8l-0.6,6.1l23,-10.1l0.6,-6.1z"/>
<path class="e" d="M703.6,549.7l-0.6,6.1"/>
<path class="w15" d="M758.5,738.2l-1.9,-0.4l23,-10.1l1.9,0.4z"/>
<path class="e" d="M781.5,728.1l-1.9,-0.4M758.5,738.2l23,-10.1"/>
<path class="w15" d="M740.6,697.6l-1.2,-0.6l23,-10.1l1.2,0.6z"/>
<path class="e" d="M763.6,687.5l-1.2,-0.6"/>
<path class="n" d="M739.4,697l23,-10.1"/>
<path class="w10" d="M743,704.3l-0.4,-3.3l23,-10.1l0.4,3.3z"/>
<path class="e" d="M766,694.2l-0.4,-3.3"/>
<path class="n" d="M742.6,701l23,-10.1"/>
<path class="w14" d="M741.6,698.5l-1,-0.9l23,-10.1l1,0.9z"/>
<path class="e" d="M764.6,688.4l-1,-0.9"/>
<path class="w13" d="M628.7,444.6l1.7,-0.4l23,-10.1l-1.7,0.4z"/>
<path class="e" d="M651.7,434.5l1.7,-0.4M630.3,444.2l23,-10.1"/>
<path class="n" d="M628.7,444.6l23,-10.1"/>
<path class="w11" d="M742.6,701l-0.4,-1.3l23,-10.1l0.4,1.3z"/>
<path class="e" d="M765.6,690.9l-0.4,-1.3"/>
<path class="n" d="M742.6,701l23,-10.1"/>
<path class="w13" d="M742.2,699.7l-0.7,-1.2l23,-10.1l0.7,1.2z"/>
<path class="e" d="M765.2,689.6l-0.7,-1.2"/>
<path class="w13" d="M669.1,531.8l1,1.5l23,-10.1l-1,-1.5z"/>
<path class="e" d="M692.1,521.7l1,1.5"/>
<path class="n" d="M670,533.3l23,-10.1"/>
<path class="w10" d="M668.7,530.1l0.4,1.7l23,-10.1l-0.4,-1.7z"/>
<path class="e" d="M691.7,520l0.4,1.7"/>
<path class="w9" d="M680.5,554l0.1,5.8l23,-10.1l-0.1,-5.8z"/>
<path class="e" d="M703.5,543.9l0.1,5.8"/>
<path class="w7" d="M669,528.4l-0.3,1.7l23,-10.1l0.3,-1.7z"/>
<path class="e" d="M692,518.3l-0.3,1.7"/>
<path class="w14" d="M670,533.3l5.9,6.2l23,-10.1l-5.9,-6.2z"/>
<path class="e" d="M693,523.2l5.9,6.2"/>
<path class="n" d="M670,533.3l23,-10.1"/>
<path class="w3" d="M669.8,526.9l-0.9,1.5l23,-10.1l0.9,-1.5z"/>
<path class="e" d="M692.8,516.8l-0.9,1.5"/>
<path class="n" d="M669.8,526.9l23,-10.1"/>
<path class="w10" d="M679.7,548.6l0.8,5.4l23,-10.1l-0.8,-5.4z"/>
<path class="e" d="M702.7,538.5l0.8,5.4"/>
<path class="w11" d="M678.2,543.7l1.5,4.9l23,-10.1l-1.5,-4.9z"/>
<path class="e" d="M701.2,533.6l1.5,4.9"/>
<path class="w13" d="M675.9,539.5l2.3,4.2l23,-10.1l-2.3,-4.2z"/>
<path class="e" d="M698.9,529.4l2.3,4.2"/>
<path class="w2" d="M671.6,524.9l-1.7,2l23,-10.1l1.7,-2z"/>
<path class="e" d="M694.6,514.8l-1.7,2"/>
<path class="n" d="M669.8,526.9l23,-10.1"/>
<path class="w3" d="M673,522.7l-1.4,2.2l23,-10.1l1.4,-2.2z"/>
<path class="e" d="M696,512.6l-1.4,2.2"/>
<path class="n" d="M673,522.7l23,-10.1"/>
<path class="w1" d="M674.2,521.5l-1.2,1.2l23,-10.1l1.2,-1.2z"/>
<path class="e" d="M697.2,511.4l-1.2,1.2"/>
<path class="n" d="M673,522.7l23,-10.1"/>
<path class="w0" d="M675.7,520.8l-1.6,0.7l23,-10.1l1.6,-0.7z"/>
<path class="e" d="M698.7,510.7l-1.6,0.7M675.7,520.8l23,-10.1"/>
<path class="w0" d="M606.1,352l1.1,-0.8l23,-10.1l-1.1,0.8z"/>
<path class="e" d="M629.1,341.9l1.1,-0.8M606.1,352l23,-10.1"/>
<path class="w2" d="M607.1,351.2l0.8,-1l23,-10.1l-0.8,1z"/>
<path class="e" d="M630.1,341.1l0.8,-1"/>
<path class="n" d="M607.9,350.2l23,-10.1"/>
<path class="w3" d="M607.9,350.2l1.1,-1.9l23,-10.1l-1.1,1.9z"/>
<path class="e" d="M630.9,340.1l1.1,-1.9"/>
<path class="n" d="M607.9,350.2l23,-10.1"/>
<path class="w3" d="M609,348.3l1.1,-1.9l23,-10.1l-1.1,1.9z"/>
<path class="e" d="M632,338.2l1.1,-1.9"/>
<path class="n" d="M610.1,346.5l23,-10.1"/>
<path class="w12" d="M602,327l-2.7,-6.3l23,-10.1l2.7,6.3z"/>
<path class="e" d="M625,316.9l-2.7,-6.3"/>
<path class="w5" d="M610.1,346.5l0.5,-1.2l23,-10.1l-0.5,1.2z"/>
<path class="e" d="M633.1,336.4l0.5,-1.2"/>
<path class="n" d="M610.1,346.5l23,-10.1"/>
<path class="w12" d="M604.9,332.9l-3,-6l23,-10.1l3,6z"/>
<path class="e" d="M627.9,322.8l-3,-6"/>
<path class="w12" d="M599.2,320.7l-2.5,-6.5l23,-10.1l2.5,6.5z"/>
<path class="e" d="M622.2,310.6l-2.5,-6.5"/>
<path class="w13" d="M608.2,338.6l-3.2,-5.7l23,-10.1l3.2,5.7z"/>
<path class="e" d="M631.2,328.5l-3.2,-5.7"/>
<path class="w11" d="M596.7,314.2l-2.2,-6.8l23,-10.1l2.2,6.8z"/>
<path class="e" d="M619.7,304.1l-2.2,-6.8M594.5,307.4l23,-10.1"/>
<path class="w7" d="M610.6,345.3l0.2,-1.3l23,-10.1l-0.2,1.3z"/>
<path class="e" d="M633.6,335.2l0.2,-1.3"/>
<path class="w12" d="M657.9,450.8l0.7,1.6l23,-10.1l-0.7,-1.6z"/>
<path class="e" d="M680.9,440.7l0.7,1.6"/>
<path class="w13" d="M610,341.4l-1.8,-2.8l23,-10.1l1.8,2.8z"/>
<path class="e" d="M633,331.3l-1.8,-2.8"/>
<path class="n" d="M610,341.4l23,-10.1"/>
<path class="w10" d="M610.8,343.9l-0.2,-1.3l23,-10.1l0.2,1.3z"/>
<path class="e" d="M633.8,333.8l-0.2,-1.3"/>
<path class="w9" d="M657.8,449l0.1,1.8l23,-10.1l-0.1,-1.8z"/>
<path class="e" d="M680.8,438.9l0.1,1.8"/>
<path class="w14" d="M658.6,452.4l1.2,1.2l23,-10.1l-1.2,-1.2z"/>
<path class="e" d="M681.6,442.3l1.2,1.2"/>
<path class="n" d="M659.8,453.7l23,-10.1"/>
<path class="w12" d="M610.6,342.6l-0.6,-1.2l23,-10.1l0.6,1.2z"/>
<path class="e" d="M633.6,332.5l-0.6,-1.2"/>
<path class="n" d="M610,341.4l23,-10.1"/>
<path class="w2" d="M594.5,307.4l1.2,-1.6l23,-10.1l-1.2,1.6z"/>
<path class="e" d="M617.5,297.3l1.2,-1.6M594.5,307.4l23,-10.1"/>
<path class="w5" d="M658.3,447.4l-0.5,1.7l23,-10.1l0.5,-1.7z"/>
<path class="e" d="M681.3,437.3l-0.5,1.7"/>
<path class="n" d="M658.3,447.4l23,-10.1"/>
<path class="w15" d="M659.8,453.7l2.2,1.5l23,-10.1l-2.2,-1.5z"/>
<path class="e" d="M682.8,443.6l2.2,1.5"/>
<path class="n" d="M659.8,453.7l23,-10.1"/>
<path class="w2" d="M595.6,305.8l1.2,-1.5l23,-10.1l-1.2,1.5z"/>
<path class="e" d="M618.6,295.7l1.2,-1.5"/>
<path class="w14" d="M662,455.2l2,1.8l23,-10.1l-2,-1.8z"/>
<path class="e" d="M685,445.1l2,1.8"/>
<path class="n" d="M664,457l23,-10.1"/>
<path class="w15" d="M664,457l1.5,0.9l23,-10.1l-1.5,-0.9z"/>
<path class="e" d="M687,446.9l1.5,0.9"/>
<path class="n" d="M664,457l23,-10.1"/>
<path class="w2" d="M596.8,304.3l1.2,-1.5l23,-10.1l-1.2,1.5z"/>
<path class="e" d="M619.8,294.2l1.2,-1.5M598,302.7l23,-10.1"/>
<path class="w15" d="M665.5,457.9l1.7,0.3l23,-10.1l-1.7,-0.3z"/>
<path class="e" d="M688.5,447.8l1.7,0.3"/>
<path class="w11" d="M681,491.1l0.4,1.7l23,-10.1l-0.4,-1.7z"/>
<path class="e" d="M704,481l0.4,1.7"/>
<path class="n" d="M681,491.1l23,-10.1"/>
<path class="w13" d="M681.5,492.8l1,1.4l23,-10.1l-1,-1.4z"/>
<path class="e" d="M704.5,482.7l1,1.4"/>
<path class="w4" d="M662.3,440l-4,7.3l23,-10.1l4,-7.3z"/>
<path class="e" d="M685.3,429.9l-4,7.3"/>
<path class="n" d="M658.3,447.4l23,-10.1"/>
<path class="w9" d="M680.9,488.4l0.2,2.7l23,-10.1l-0.2,-2.7z"/>
<path class="e" d="M703.9,478.3l0.2,2.7"/>
<path class="n" d="M681,491.1l23,-10.1"/>
<path class="w15" d="M682.5,494.2l1.5,1l23,-10.1l-1.5,-1z"/>
<path class="e" d="M705.5,484.1l1.5,1"/>
<path class="w10" d="M680.3,485.8l0.5,2.6l23,-10.1l-0.5,-2.6z"/>
<path class="e" d="M703.3,475.7l0.5,2.6"/>
<path class="n" d="M680.3,485.8l23,-10.1"/>
<path class="w14" d="M667.2,458.2l1.7,-0.3l23,-10.1l-1.7,0.3z"/>
<path class="e" d="M690.2,448.1l1.7,-0.3M668.9,457.9l23,-10.1"/>
<path class="w15" d="M683.9,495.2l1.7,0.4l23,-10.1l-1.7,-0.4z"/>
<path class="e" d="M706.9,485.1l1.7,0.4"/>
<path class="n" d="M685.6,495.6l23,-10.1"/>
<path class="w9" d="M680.3,484l0,1.8l23,-10.1l-0,-1.8z"/>
<path class="e" d="M703.3,473.9l0,1.8"/>
<path class="n" d="M680.3,485.8l23,-10.1"/>
<path class="w5" d="M680.9,482.4l-0.6,1.6l23,-10.1l0.6,-1.6z"/>
<path class="e" d="M703.9,472.3l-0.6,1.6"/>
<path class="w2" d="M682,481.1l-1.1,1.3l23,-10.1l1.1,-1.3z"/>
<path class="e" d="M705,471l-1.1,1.3"/>
<path class="w6" d="M663.4,435.4l-1.1,4.6l23,-10.1l1.1,-4.6z"/>
<path class="e" d="M686.4,425.3l-1.1,4.6"/>
<path class="w0" d="M683.6,480.3l-1.5,0.8l23,-10.1l1.5,-0.8z"/>
<path class="e" d="M706.6,470.2l-1.5,0.8M683.6,480.3l23,-10.1"/>
<path class="w15" d="M685.6,495.6l8.3,0.2l23,-10.1l-8.3,-0.2z"/>
<path class="e" d="M708.6,485.5l8.3,0.2"/>
<path class="n" d="M685.6,495.6l23,-10.1"/>
<path class="w13" d="M784.5,707.8l-1.2,0.4l23,-10.1l1.2,-0.4z"/>
<path class="e" d="M807.5,697.7l-1.2,0.4M783.3,708.2l23,-10.1"/>
<path class="w8" d="M663.5,430.3l-0.1,5.1l23,-10.1l0.1,-5.1z"/>
<path class="e" d="M686.5,420.2l-0.1,5.1"/>
<path class="w14" d="M785.8,707.7l-1.3,0l23,-10.1l1.3,-0z"/>
<path class="e" d="M808.8,697.6l-1.3,0"/>
<path class="n" d="M785.8,707.7l23,-10.1"/>
<path class="w15" d="M653.7,406.9l0.8,0.2l23,-10.1l-0.8,-0.2z"/>
<path class="e" d="M676.7,396.8l0.8,0.2M653.7,406.9l23,-10.1"/>
<path class="w10" d="M662.8,424.9l0.7,5.4l23,-10.1l-0.7,-5.4z"/>
<path class="e" d="M685.8,414.8l0.7,5.4"/>
<path class="w15" d="M788,708l-2.1,-0.3l23,-10.1l2.1,0.3z"/>
<path class="e" d="M811,697.9l-2.1,-0.3"/>
<path class="n" d="M785.8,707.7l23,-10.1"/>
<path class="w15" d="M654.5,407.2l0.8,0.2l23,-10.1l-0.8,-0.2z"/>
<path class="e" d="M677.5,397.1l0.8,0.2"/>
<path class="w11" d="M661.4,419.2l1.5,5.7l23,-10.1l-1.5,-5.7z"/>
<path class="e" d="M684.4,409.1l1.5,5.7"/>
<path class="w15" d="M655.3,407.4l0.8,0.3l23,-10.1l-0.8,-0.3z"/>
<path class="e" d="M678.3,397.3l0.8,0.3M656.2,407.6l23,-10.1"/>
<path class="w12" d="M656.2,407.6l3,5.8l23,-10.1l-3,-5.8z"/>
<path class="e" d="M679.2,397.5l3,5.8M656.2,407.6l23,-10.1"/>
<path class="w12" d="M659.1,413.5l2.2,5.8l23,-10.1l-2.2,-5.8z"/>
<path class="e" d="M682.1,403.4l2.2,5.8"/>
<path class="w15" d="M790.1,708.2l-2.2,-0.2l23,-10.1l2.2,0.2z"/>
<path class="e" d="M813.1,698.1l-2.2,-0.2"/>
<path class="n" d="M790.1,708.2l23,-10.1"/>
<path class="w15" d="M693.9,495.8l4.5,1.4l23,-10.1l-4.5,-1.4z"/>
<path class="e" d="M716.9,485.7l4.5,1.4"/>
<path class="w15" d="M791.4,708.5l-1.3,-0.3l23,-10.1l1.3,0.3z"/>
<path class="e" d="M814.4,698.4l-1.3,-0.3"/>
<path class="n" d="M790.1,708.2l23,-10.1"/>
<path class="w15" d="M792.6,709.2l-1.2,-0.7l23,-10.1l1.2,0.7z"/>
<path class="e" d="M815.6,699.1l-1.2,-0.7"/>
<path class="w14" d="M793.5,710.2l-0.9,-1l23,-10.1l0.9,1z"/>
<path class="e" d="M816.5,700.1l-0.9,-1"/>
<path class="w12" d="M797.8,720.5l-2.6,-6l23,-10.1l2.6,6z"/>
<path class="e" d="M820.8,710.4l-2.6,-6"/>
<path class="w12" d="M800.8,726.5l-3,-6l23,-10.1l3,6z"/>
<path class="e" d="M823.8,716.4l-3,-6"/>
<path class="w11" d="M795.2,714.5l-1.1,-3.1l23,-10.1l1.1,3.1z"/>
<path class="e" d="M818.2,704.4l-1.1,-3.1"/>
<path class="n" d="M794.1,711.4l23,-10.1"/>
<path class="w12" d="M794.1,711.4l-0.6,-1.2l23,-10.1l0.6,1.2z"/>
<path class="e" d="M817.1,701.3l-0.6,-1.2"/>
<path class="n" d="M794.1,711.4l23,-10.1"/>
<path class="w13" d="M804.1,732.5l-3.3,-6l23,-10.1l3.3,6z"/>
<path class="e" d="M827.1,722.4l-3.3,-6"/>
<path class="w15" d="M698.4,497.2l4.4,2.5l23,-10.1l-4.4,-2.5z"/>
<path class="e" d="M721.4,487.1l4.4,2.5"/>
<path class="w13" d="M807.8,738.4l-3.7,-5.9l23,-10.1l3.7,5.9z"/>
<path class="e" d="M830.8,728.3l-3.7,-5.9"/>
<path class="w13" d="M811.9,744.3l-4.1,-5.9l23,-10.1l4.1,5.9z"/>
<path class="e" d="M834.9,734.2l-4.1,-5.9M811.9,744.3l23,-10.1"/>
<path class="w0" d="M695.5,475.8l-4,2.4l23,-10.1l4,-2.4z"/>
<path class="e" d="M718.5,465.7l-4,2.4M691.5,478.2l23,-10.1"/>
<path class="w15" d="M702.9,499.7l4.3,3.4l23,-10.1l-4.3,-3.4z"/>
<path class="e" d="M725.9,489.6l4.3,3.4"/>
<path class="w14" d="M813.8,744.3l-1.9,-0l23,-10.1l1.9,0z"/>
<path class="e" d="M836.8,734.2l-1.9,-0M811.9,744.3l23,-10.1"/>
<path class="w13" d="M680.2,448.8l4.8,-1.4l23,-10.1l-4.8,1.4z"/>
<path class="e" d="M703.2,438.7l4.8,-1.4M680.2,448.8l23,-10.1"/>
<path class="w0" d="M717.9,520.2l-5.6,2.9l23,-10.1l5.6,-2.9z"/>
<path class="e" d="M740.9,510.1l-5.6,2.9M717.9,520.2l23,-10.1M712.3,523l23,-10.1"/>
<path class="w14" d="M707.2,503.1l4.1,4.1l23,-10.1l-4.1,-4.1z"/>
<path class="e" d="M730.2,493l4.1,4.1"/>
<path class="w14" d="M815.7,744.3l-1.9,0l23,-10.1l1.9,-0z"/>
<path class="e" d="M838.7,734.2l-1.9,0"/>
<path class="w1" d="M699.1,472.4l-3.6,3.5l23,-10.1l3.6,-3.5z"/>
<path class="e" d="M722.1,462.3l-3.6,3.5"/>
<path class="w14" d="M711.3,507.2l3.8,4.9l23,-10.1l-3.8,-4.9z"/>
<path class="e" d="M734.3,497.1l3.8,4.9"/>
<path class="w14" d="M817.7,744.3l-1.9,0l23,-10.1l1.9,-0z"/>
<path class="e" d="M840.7,734.2l-1.9,0M817.7,744.3l23,-10.1"/>
<path class="w6" d="M718.1,519.3l-0.2,0.8l23,-10.1l0.2,-0.8z"/>
<path class="e" d="M741.1,509.2l-0.2,0.8M717.9,520.2l23,-10.1"/>
<path class="w6" d="M718.3,518.5l-0.2,0.8l23,-10.1l0.2,-0.8z"/>
<path class="e" d="M741.3,508.4l-0.2,0.8"/>
<path class="w13" d="M715.1,512.1l3.5,5.5l23,-10.1l-3.5,-5.5z"/>
<path class="e" d="M738.1,502l3.5,5.5M718.6,517.6l23,-10.1"/>
<path class="w6" d="M718.6,517.6l-0.2,0.9l23,-10.1l0.2,-0.9z"/>
<path class="e" d="M741.6,507.5l-0.2,0.9M718.6,517.6l23,-10.1"/>
<path class="w14" d="M685,447.5l5.3,-0.7l23,-10.1l-5.3,0.7z"/>
<path class="e" d="M708,437.4l5.3,-0.7"/>
<path class="w2" d="M702.4,468.1l-3.3,4.3l23,-10.1l3.3,-4.3z"/>
<path class="e" d="M725.4,458l-3.3,4.3"/>
<path class="w14" d="M690.3,446.8l5.7,0l23,-10.1l-5.7,-0z"/>
<path class="e" d="M713.3,436.7l5.7,0"/>
<path class="w3" d="M705.2,463.2l-2.8,5l23,-10.1l2.8,-5z"/>
<path class="e" d="M728.2,453.1l-2.8,5"/>
<path class="w13" d="M705.3,469.8l5.4,-2l23,-10.1l-5.4,2z"/>
<path class="e" d="M728.3,459.7l5.4,-2M705.3,469.8l23,-10.1"/>
<path class="w15" d="M696,446.8l6,0.8l23,-10.1l-6,-0.8z"/>
<path class="e" d="M719,436.7l6,0.8"/>
<path class="w0" d="M637.6,309.4l1,-0.8l23,-10.1l-1,0.8z"/>
<path class="e" d="M660.6,299.3l1,-0.8M637.6,309.4l23,-10.1"/>
<path class="n" d="M638.7,308.6l23,-10.1"/>
<path class="w5" d="M707.6,457.6l-2.4,5.6l23,-10.1l2.4,-5.6z"/>
<path class="e" d="M730.6,447.5l-2.4,5.6"/>
<path class="w1" d="M638.7,308.6l1.5,-1.6l23,-10.1l-1.5,1.6z"/>
<path class="e" d="M661.7,298.5l1.5,-1.6"/>
<path class="n" d="M638.7,308.6l23,-10.1"/>
<path class="w0" d="M746.9,542.3l-4.4,3.1l23,-10.1l4.4,-3.1z"/>
<path class="e" d="M769.9,532.2l-4.4,3.1M742.5,545.4l23,-10.1"/>
<path class="w1" d="M640.1,307l1.5,-1.5l23,-10.1l-1.5,1.5z"/>
<path class="e" d="M663.1,296.9l1.5,-1.5"/>
<path class="n" d="M641.6,305.5l23,-10.1"/>
<path class="w0" d="M769.2,586.9l-6.1,3.3l23,-10.1l6.1,-3.3z"/>
<path class="e" d="M792.2,576.8l-6.1,3.3M763.1,590.2l23,-10.1"/>
<path class="w14" d="M710.6,467.8l5.3,-0.9l23,-10.1l-5.3,0.9z"/>
<path class="e" d="M733.6,457.7l5.3,-0.9"/>
<path class="w15" d="M702,447.6l6.2,1.5l23,-10.1l-6.2,-1.5z"/>
<path class="e" d="M725,437.5l6.2,1.5M708.2,449.1l23,-10.1"/>
<path class="w2" d="M641.6,305.5l0.8,-1.1l23,-10.1l-0.8,1.1z"/>
<path class="e" d="M664.6,295.4l0.8,-1.1"/>
<path class="n" d="M641.6,305.5l23,-10.1"/>
<path class="w6" d="M709.5,451.4l-1.9,6.2l23,-10.1l1.9,-6.2z"/>
<path class="e" d="M732.5,441.3l-1.9,6.2M709.5,451.4l23,-10.1"/>
<path class="w5" d="M642.4,304.4l0.4,-1.3l23,-10.1l-0.4,1.3z"/>
<path class="e" d="M665.4,294.3l0.4,-1.3"/>
<path class="w8" d="M642.8,303.1l0.1,-1.3l23,-10.1l-0.1,1.3z"/>
<path class="e" d="M665.8,293l0.1,-1.3"/>
<path class="w2" d="M749.4,539.5l-2.5,2.8l23,-10.1l2.5,-2.8z"/>
<path class="e" d="M772.4,529.4l-2.5,2.8"/>
<path class="n" d="M749.4,539.5l23,-10.1"/>
<path class="w10" d="M642.9,301.8l-0.3,-1.3l23,-10.1l0.3,1.3z"/>
<path class="e" d="M665.9,291.7l-0.3,-1.3"/>
<path class="n" d="M642.6,300.5l23,-10.1"/>
<path class="w12" d="M642.6,300.5l-1.2,-3.1l23,-10.1l1.2,3.1z"/>
<path class="e" d="M665.6,290.4l-1.2,-3.1"/>
<path class="n" d="M642.6,300.5l23,-10.1"/>
<path class="w13" d="M708.2,449.1l0.4,0.8l23,-10.1l-0.4,-0.8z"/>
<path class="e" d="M731.2,439l0.4,0.8M708.2,449.1l23,-10.1"/>
<path class="w13" d="M708.6,449.9l0.4,0.8l23,-10.1l-0.4,-0.8z"/>
<path class="e" d="M731.6,439.8l0.4,0.8"/>
<path class="w13" d="M709.1,450.7l0.4,0.8l23,-10.1l-0.4,-0.8z"/>
<path class="e" d="M732.1,440.6l0.4,0.8M709.5,451.4l23,-10.1"/>
<path class="w11" d="M641.4,297.4l-1.9,-6.2l23,-10.1l1.9,6.2z"/>
<path class="e" d="M664.4,287.3l-1.9,-6.2"/>
<path class="w11" d="M639.5,291.2l-1.6,-6.5l23,-10.1l1.6,6.5z"/>
<path class="e" d="M662.5,281.1l-1.6,-6.5"/>
<path class="w13" d="M693.8,421.3l6.7,-1.9l23,-10.1l-6.7,1.9z"/>
<path class="e" d="M716.8,411.2l6.7,-1.9M693.8,421.3l23,-10.1"/>
<path class="w15" d="M716,466.9l3.7,0.3l23,-10.1l-3.7,-0.3z"/>
<path class="e" d="M739,456.8l3.7,0.3"/>
<path class="n" d="M719.7,467.2l23,-10.1"/>
<path class="w0" d="M750.7,538.5l-1.3,1l23,-10.1l1.3,-1z"/>
<path class="e" d="M773.7,528.4l-1.3,1M750.7,538.5l23,-10.1"/>
<path class="n" d="M749.4,539.5l23,-10.1"/>
<path class="w10" d="M637.9,284.7l-1.3,-6.7l23,-10.1l1.3,6.7z"/>
<path class="e" d="M660.9,274.6l-1.3,-6.7"/>
<path class="w0" d="M774.7,583.2l-5.5,3.7l23,-10.1l5.5,-3.7z"/>
<path class="e" d="M797.7,573.1l-5.5,3.7"/>
<path class="w14" d="M719.7,467.2l1.6,-0.2l23,-10.1l-1.6,0.2z"/>
<path class="e" d="M742.7,457.1l1.6,-0.2M721.3,467l23,-10.1"/>
<path class="n" d="M719.7,467.2l23,-10.1"/>
<path class="w10" d="M636.5,278l-1,-6.9l23,-10.1l1,6.9z"/>
<path class="e" d="M659.5,267.9l-1,-6.9"/>
<path class="w9" d="M635.5,271.1l-0.7,-7.1l23,-10.1l0.7,7.1z"/>
<path class="e" d="M658.5,261l-0.7,-7.1M634.8,264l23,-10.1"/>
<path class="w14" d="M700.5,419.5l6.6,-1.2l23,-10.1l-6.6,1.2z"/>
<path class="e" d="M723.5,409.4l6.6,-1.2"/>
<path class="w0" d="M634.8,264l1.5,-1.2l23,-10.1l-1.5,1.2z"/>
<path class="e" d="M657.8,253.9l1.5,-1.2M634.8,264l23,-10.1"/>
<path class="w0" d="M779.6,579.1l-4.9,4.1l23,-10.1l4.9,-4.1z"/>
<path class="e" d="M802.6,569l-4.9,4.1"/>
<path class="w0" d="M636.2,262.8l1.5,-1.2l23,-10.1l-1.5,1.2z"/>
<path class="e" d="M659.2,252.7l1.5,-1.2"/>
<path class="w0" d="M637.7,261.5l1.5,-1.2l23,-10.1l-1.5,1.2z"/>
<path class="e" d="M660.7,251.4l1.5,-1.2M639.2,260.3l23,-10.1"/>
<path class="w13" d="M837.5,708.2l-1.3,0.3l23,-10.1l1.3,-0.3z"/>
<path class="e" d="M860.5,698.1l-1.3,0.3M836.2,708.5l23,-10.1"/>
<path class="n" d="M837.5,708.2l23,-10.1"/>
<path class="w14" d="M707.1,418.3l6.3,-0.5l23,-10.1l-6.3,0.5z"/>
<path class="e" d="M730.1,408.2l6.3,-0.5"/>
<path class="w14" d="M839.6,707.9l-2.1,0.2l23,-10.1l2.1,-0.2z"/>
<path class="e" d="M862.6,697.8l-2.1,0.2"/>
<path class="n" d="M837.5,708.2l23,-10.1"/>
<path class="w1" d="M783.8,574.7l-4.2,4.4l23,-10.1l4.2,-4.4z"/>
<path class="e" d="M806.8,564.6l-4.2,4.4"/>
<path class="w14" d="M841.8,707.7l-2.1,0.3l23,-10.1l2.1,-0.3z"/>
<path class="e" d="M864.8,697.6l-2.1,0.3"/>
<path class="n" d="M841.8,707.7l23,-10.1"/>
<path class="w14" d="M843.1,707.7l-1.3,-0l23,-10.1l1.3,0z"/>
<path class="e" d="M866.1,697.6l-1.3,-0"/>
<path class="n" d="M841.8,707.7l23,-10.1"/>
<path class="w15" d="M844.3,708.1l-1.3,-0.4l23,-10.1l1.3,0.4z"/>
<path class="e" d="M867.3,698l-1.3,-0.4"/>
<path class="w15" d="M713.4,417.8l6.1,0.2l23,-10.1l-6.1,-0.2z"/>
<path class="e" d="M736.4,407.7l6.1,0.2"/>
<path class="w15" d="M845.4,708.8l-1.1,-0.7l23,-10.1l1.1,0.7z"/>
<path class="e" d="M868.4,698.7l-1.1,-0.7"/>
<path class="w2" d="M787.1,570l-3.4,4.7l23,-10.1l3.4,-4.7z"/>
<path class="e" d="M810.1,559.9l-3.4,4.7"/>
<path class="w14" d="M846.3,709.9l-0.9,-1l23,-10.1l0.9,1z"/>
<path class="e" d="M869.3,699.8l-0.9,-1"/>
<path class="n" d="M846.3,709.9l23,-10.1"/>
<path class="w13" d="M848.1,712.7l-1.8,-2.8l23,-10.1l1.8,2.8z"/>
<path class="e" d="M871.1,702.6l-1.8,-2.8"/>
<path class="n" d="M846.3,709.9l23,-10.1"/>
<path class="w13" d="M851.9,718l-3.8,-5.3l23,-10.1l3.8,5.3z"/>
<path class="e" d="M874.9,707.9l-3.8,-5.3"/>
<path class="w14" d="M856,723.2l-4.2,-5.2l23,-10.1l4.2,5.2z"/>
<path class="e" d="M879,713.1l-4.2,-5.2"/>
<path class="w15" d="M719.5,418.1l5.7,1l23,-10.1l-5.7,-1z"/>
<path class="e" d="M742.5,408l5.7,1"/>
<path class="w4" d="M789.4,565l-2.3,5l23,-10.1l2.3,-5z"/>
<path class="e" d="M812.4,554.9l-2.3,5"/>
<path class="w14" d="M860.6,728.3l-4.5,-5.1l23,-10.1l4.5,5.1z"/>
<path class="e" d="M883.6,718.2l-4.5,-5.1"/>
<path class="w14" d="M865.5,733.2l-4.9,-5l23,-10.1l4.9,5z"/>
<path class="e" d="M888.5,723.1l-4.9,-5"/>
<path class="w7" d="M790.1,561.3l-0.7,3.7l23,-10.1l0.7,-3.7z"/>
<path class="e" d="M813.1,551.2l-0.7,3.7"/>
<path class="n" d="M790.1,561.3l23,-10.1"/>
<path class="w15" d="M725.2,419.1l5.1,2l23,-10.1l-5.1,-2z"/>
<path class="e" d="M748.2,409l5.1,2"/>
<path class="w5" d="M790.8,559.7l-0.6,1.5l23,-10.1l0.6,-1.5z"/>
<path class="e" d="M813.8,549.6l-0.6,1.5"/>
<path class="n" d="M790.1,561.3l23,-10.1"/>
<path class="w14" d="M870.7,738.1l-5.2,-4.8l23,-10.1l5.2,4.8z"/>
<path class="e" d="M893.7,728l-5.2,-4.8M870.7,738.1l23,-10.1"/>
<path class="w1" d="M791.9,558.6l-1.1,1.2l23,-10.1l1.1,-1.2z"/>
<path class="e" d="M814.9,548.5l-1.1,1.2M791.9,558.6l23,-10.1"/>
<path class="w15" d="M730.3,421l3.1,2.1l23,-10.1l-3.1,-2.1z"/>
<path class="e" d="M753.3,410.9l3.1,2.1"/>
<path class="n" d="M733.5,423.2l23,-10.1"/>
<path class="w13" d="M872.5,737.7l-1.9,0.4l23,-10.1l1.9,-0.4z"/>
<path class="e" d="M895.5,727.6l-1.9,0.4M870.7,738.1l23,-10.1"/>
<path class="w15" d="M733.5,423.2l1.5,0.7l23,-10.1l-1.5,-0.7z"/>
<path class="e" d="M756.5,413.1l1.5,0.7"/>
<path class="n" d="M733.5,423.2l23,-10.1"/>
<path class="w13" d="M874.4,737.2l-1.9,0.4l23,-10.1l1.9,-0.4z"/>
<path class="e" d="M897.4,727.1l-1.9,0.4"/>
<path class="w14" d="M735,423.8l1.6,0l23,-10.1l-1.6,-0z"/>
<path class="e" d="M758,413.7l1.6,0"/>
<path class="w13" d="M876.3,736.8l-1.9,0.5l23,-10.1l1.9,-0.5z"/>
<path class="e" d="M899.3,726.7l-1.9,0.5M876.3,736.8l23,-10.1"/>
<path class="w13" d="M736.6,423.9l1.5,-0.6l23,-10.1l-1.5,0.6z"/>
<path class="e" d="M759.6,413.8l1.5,-0.6M738.2,423.3l23,-10.1"/>
<path class="w0" d="M676.7,275.8l1.2,-0.6l23,-10.1l-1.2,0.6z"/>
<path class="e" d="M699.7,265.7l1.2,-0.6M676.7,275.8l23,-10.1"/>
<path class="n" d="M677.8,275.2l23,-10.1"/>
<path class="w0" d="M677.8,275.2l1.8,-1.2l23,-10.1l-1.8,1.2z"/>
<path class="e" d="M700.8,265.1l1.8,-1.2"/>
<path class="n" d="M677.8,275.2l23,-10.1"/>
<path class="w0" d="M679.6,274l1.8,-1.2l23,-10.1l-1.8,1.2z"/>
<path class="e" d="M702.6,263.9l1.8,-1.2"/>
<path class="n" d="M681.4,272.9l23,-10.1"/>
<path class="w0" d="M681.4,272.9l1,-0.9l23,-10.1l-1,0.9z"/>
<path class="e" d="M704.4,262.8l1,-0.9"/>
<path class="n" d="M681.4,272.9l23,-10.1"/>
<path class="w3" d="M682.4,272l0.7,-1.1l23,-10.1l-0.7,1.1z"/>
<path class="e" d="M705.4,261.9l0.7,-1.1"/>
<path class="w6" d="M683.1,270.9l0.4,-1.3l23,-10.1l-0.4,1.3z"/>
<path class="e" d="M706.1,260.8l0.4,-1.3"/>
<path class="w8" d="M683.5,269.6l-0,-1.3l23,-10.1l0,1.3z"/>
<path class="e" d="M706.5,259.5l-0,-1.3"/>
<path class="n" d="M683.5,268.3l23,-10.1"/>
<path class="w10" d="M683.5,268.3l-0.5,-3.3l23,-10.1l0.5,3.3z"/>
<path class="e" d="M706.5,258.2l-0.5,-3.3"/>
<path class="n" d="M683.5,268.3l23,-10.1"/>
<path class="w3" d="M830.3,592.8l-3.6,6.1l23,-10.1l3.6,-6.1z"/>
<path class="e" d="M853.3,582.7l-3.6,6.1M826.7,598.9l23,-10.1"/>
<path class="w9" d="M683,265l-0.5,-6.5l23,-10.1l0.5,6.5z"/>
<path class="e" d="M706,254.9l-0.5,-6.5"/>
<path class="w9" d="M682.4,258.5l-0.2,-6.6l23,-10.1l0.2,6.6z"/>
<path class="e" d="M705.4,248.4l-0.2,-6.6"/>
<path class="w4" d="M833.2,586.7l-2.9,6.1l23,-10.1l2.9,-6.1z"/>
<path class="e" d="M856.2,576.6l-2.9,6.1"/>
<path class="w15" d="M733.2,370.8l6.8,1.8l23,-10.1l-6.8,-1.8z"/>
<path class="e" d="M756.2,360.7l6.8,1.8M733.2,370.8l23,-10.1"/>
<path class="w8" d="M682.3,251.9l0.2,-6.8l23,-10.1l-0.2,6.8z"/>
<path class="e" d="M705.3,241.8l0.2,-6.8"/>
<path class="w8" d="M682.4,245.1l0.5,-6.9l23,-10.1l-0.5,6.9z"/>
<path class="e" d="M705.4,235l0.5,-6.9"/>
<path class="w5" d="M835.3,580.6l-2.2,6.1l23,-10.1l2.2,-6.1z"/>
<path class="e" d="M858.3,570.5l-2.2,6.1"/>
<path class="w15" d="M740,372.7l6.3,2.4l23,-10.1l-6.3,-2.4z"/>
<path class="e" d="M763,362.6l6.3,2.4"/>
<path class="w7" d="M682.9,238.2l0.8,-7l23,-10.1l-0.8,7z"/>
<path class="e" d="M705.9,228.1l0.8,-7M683.7,231.2l23,-10.1"/>
<path class="w6" d="M836.7,574.6l-1.4,6l23,-10.1l1.4,-6z"/>
<path class="e" d="M859.7,564.5l-1.4,6"/>
<path class="w13" d="M889.7,696.1l-2,0.7l23,-10.1l2,-0.7z"/>
<path class="e" d="M912.7,686l-2,0.7M887.6,696.8l23,-10.1"/>
<path class="w0" d="M683.7,231.2l1.7,-0.9l23,-10.1l-1.7,0.9z"/>
<path class="e" d="M706.7,221.1l1.7,-0.9M683.7,231.2l23,-10.1"/>
<path class="w15" d="M746.3,375l5.8,2.8l23,-10.1l-5.8,-2.8z"/>
<path class="e" d="M769.3,364.9l5.8,2.8"/>
<path class="w13" d="M891.7,695.4l-2,0.8l23,-10.1l2,-0.8z"/>
<path class="e" d="M914.7,685.3l-2,0.8"/>
<path class="n" d="M891.7,695.4l23,-10.1"/>
<path class="w0" d="M685.5,230.3l1.7,-0.9l23,-10.1l-1.7,0.9z"/>
<path class="e" d="M708.5,220.2l1.7,-0.9"/>
<path class="w7" d="M837.3,568.8l-0.6,5.8l23,-10.1l0.6,-5.8z"/>
<path class="e" d="M860.3,558.7l-0.6,5.8"/>
<path class="w14" d="M892.9,695.1l-1.3,0.3l23,-10.1l1.3,-0.3z"/>
<path class="e" d="M915.9,685l-1.3,0.3"/>
<path class="n" d="M891.7,695.4l23,-10.1"/>
<path class="w0" d="M687.2,229.4l1.7,-0.8l23,-10.1l-1.7,0.8z"/>
<path class="e" d="M710.2,219.3l1.7,-0.8M688.9,228.6l23,-10.1"/>
<path class="w15" d="M894.3,695.2l-1.3,-0.1l23,-10.1l1.3,0.1z"/>
<path class="e" d="M917.3,685.1l-1.3,-0.1"/>
<path class="w15" d="M752.1,377.9l5.2,3.3l23,-10.1l-5.2,-3.3z"/>
<path class="e" d="M775.1,367.8l5.2,3.3"/>
<path class="w9" d="M836.8,563.2l0.5,5.6l23,-10.1l-0.5,-5.6z"/>
<path class="e" d="M859.8,553.1l0.5,5.6"/>
<path class="w15" d="M895.5,695.7l-1.2,-0.5l23,-10.1l1.2,0.5z"/>
<path class="e" d="M918.5,685.6l-1.2,-0.5"/>
<path class="w11" d="M835.6,559.6l1.2,3.6l23,-10.1l-1.2,-3.6z"/>
<path class="e" d="M858.6,549.5l1.2,3.6"/>
<path class="n" d="M835.6,559.6l23,-10.1"/>
<path class="w10" d="M835.4,557.9l0.2,1.7l23,-10.1l-0.2,-1.7z"/>
<path class="e" d="M858.4,547.8l0.2,1.7"/>
<path class="n" d="M835.6,559.6l23,-10.1"/>
<path class="w15" d="M896.6,696.5l-1.1,-0.8l23,-10.1l1.1,0.8z"/>
<path class="e" d="M919.6,686.4l-1.1,-0.8"/>
<path class="n" d="M896.6,696.5l23,-10.1"/>
<path class="w6" d="M835.8,556.3l-0.4,1.6l23,-10.1l0.4,-1.6z"/>
<path class="e" d="M858.8,546.2l-0.4,1.6"/>
<path class="w14" d="M898.9,698.9l-2.3,-2.4l23,-10.1l2.3,2.4z"/>
<path class="e" d="M921.9,688.8l-2.3,-2.4"/>
<path class="n" d="M896.6,696.5l23,-10.1"/>
<path class="w14" d="M757.3,381.2l4.5,3.8l23,-10.1l-4.5,-3.8z"/>
<path class="e" d="M780.3,371.1l4.5,3.8"/>
<path class="w2" d="M836.8,555l-1,1.3l23,-10.1l1,-1.3z"/>
<path class="e" d="M859.8,544.9l-1,1.3"/>
<path class="w14" d="M903.7,703.2l-4.8,-4.3l23,-10.1l4.8,4.3z"/>
<path class="e" d="M926.7,693.1l-4.8,-4.3"/>
<path class="w14" d="M761.9,384.9l3.5,4.3l23,-10.1l-3.5,-4.3z"/>
<path class="e" d="M784.9,374.8l3.5,4.3"/>
<path class="w0" d="M838.2,554.1l-1.4,0.8l23,-10.1l1.4,-0.8z"/>
<path class="e" d="M861.2,544l-1.4,0.8M838.2,554.1l23,-10.1"/>
<path class="w12" d="M765.4,389.3l1.7,3.4l23,-10.1l-1.7,-3.4z"/>
<path class="e" d="M788.4,379.2l1.7,3.4"/>
<path class="n" d="M767.1,392.7l23,-10.1"/>
<path class="w13" d="M767.1,392.7l1,1.3l23,-10.1l-1,-1.3z"/>
<path class="e" d="M790.1,382.6l1,1.3"/>
<path class="n" d="M767.1,392.7l23,-10.1"/>
<path class="w15" d="M768.1,394l1.4,0.9l23,-10.1l-1.4,-0.9z"/>
<path class="e" d="M791.1,383.9l1.4,0.9"/>
<path class="w14" d="M908.9,707.3l-5.2,-4.1l23,-10.1l5.2,4.1z"/>
<path class="e" d="M931.9,697.2l-5.2,-4.1"/>
<path class="w15" d="M769.6,394.9l1.6,0.3l23,-10.1l-1.6,-0.3z"/>
<path class="e" d="M792.6,384.8l1.6,0.3"/>
<path class="w0" d="M842.4,552.4l-2.1,1l23,-10.1l2.1,-1z"/>
<path class="e" d="M865.4,542.3l-2.1,1M842.4,552.4l23,-10.1M840.3,553.4l23,-10.1"/>
<path class="w13" d="M771.2,395.2l1.6,-0.4l23,-10.1l-1.6,0.4z"/>
<path class="e" d="M794.2,385.1l1.6,-0.4M772.8,394.8l23,-10.1"/>
<path class="w15" d="M914.4,711.3l-5.5,-4l23,-10.1l5.5,4z"/>
<path class="e" d="M937.4,701.2l-5.5,-4"/>
<path class="w0" d="M937.4,749.4l-10.6,4.7l23,-10.1l10.6,-4.7z"/>
<path class="e" d="M960.4,739.3l-10.6,4.7M926.9,754.1l23,-10.1"/>
<path class="w13" d="M774.9,393.8l2.2,-0.8l23,-10.1l-2.2,0.8z"/>
<path class="e" d="M797.9,383.7l2.2,-0.8M774.9,393.8l23,-10.1M777,393.1l23,-10.1"/>
<path class="w15" d="M920.2,715.1l-5.8,-3.8l23,-10.1l5.8,3.8z"/>
<path class="e" d="M943.2,705l-5.8,-3.8"/>
<path class="w15" d="M926.3,718.6l-6.1,-3.6l23,-10.1l6.1,3.6z"/>
<path class="e" d="M949.3,708.5l-6.1,-3.6M926.3,718.6l23,-10.1"/>
<path class="w13" d="M688.3,193.1l10.7,-4.3l23,-10.1l-10.7,4.3z"/>
<path class="e" d="M711.3,183l10.7,-4.3M688.3,193.1l23,-10.1"/>
<path class="w0" d="M947.8,744.2l-10.4,5.1l23,-10.1l10.4,-5.1z"/>
<path class="e" d="M970.8,734.1l-10.4,5.1"/>
<path class="w0" d="M727.6,250.4l1.2,-0.6l23,-10.1l-1.2,0.6z"/>
<path class="e" d="M750.6,240.3l1.2,-0.6M727.6,250.4l23,-10.1"/>
<path class="w1" d="M728.7,249.7l0.9,-0.9l23,-10.1l-0.9,0.9z"/>
<path class="e" d="M751.7,239.6l0.9,-0.9"/>
<path class="w4" d="M729.7,248.8l0.6,-1.2l23,-10.1l-0.6,1.2z"/>
<path class="e" d="M752.7,238.7l0.6,-1.2"/>
<path class="w6" d="M730.3,247.7l0.3,-1.3l23,-10.1l-0.3,1.3z"/>
<path class="e" d="M753.3,237.6l0.3,-1.3"/>
<path class="n" d="M730.6,246.4l23,-10.1"/>
<path class="w13" d="M699.1,188.8l10.9,-3.8l23,-10.1l-10.9,3.8z"/>
<path class="e" d="M722.1,178.7l10.9,-3.8"/>
<path class="w8" d="M730.6,246.4l0.2,-3.3l23,-10.1l-0.2,3.3z"/>
<path class="e" d="M753.6,236.3l0.2,-3.3"/>
<path class="n" d="M730.6,246.4l23,-10.1"/>
<path class="w7" d="M730.8,243.1l0.9,-6.4l23,-10.1l-0.9,6.4z"/>
<path class="e" d="M753.8,233l0.9,-6.4"/>
<path class="w0" d="M957.9,738.7l-10.1,5.6l23,-10.1l10.1,-5.6z"/>
<path class="e" d="M980.9,728.6l-10.1,5.6"/>
<path class="w0" d="M883.1,575.6l-1.1,0.8l23,-10.1l1.1,-0.8z"/>
<path class="e" d="M906.1,565.5l-1.1,0.8M882,576.4l23,-10.1"/>
<path class="w7" d="M731.7,236.7l1.3,-6.5l23,-10.1l-1.3,6.5z"/>
<path class="e" d="M754.7,226.6l1.3,-6.5"/>
<path class="w0" d="M884.2,574.7l-1.1,0.8l23,-10.1l1.1,-0.8z"/>
<path class="e" d="M907.2,564.6l-1.1,0.8"/>
<path class="w0" d="M885.2,573.9l-1,0.8l23,-10.1l1,-0.8z"/>
<path class="e" d="M908.2,563.8l-1,0.8M885.2,573.9l23,-10.1"/>
<path class="w6" d="M732.9,230.2l1.6,-6.5l23,-10.1l-1.6,6.5z"/>
<path class="e" d="M755.9,220.1l1.6,-6.5"/>
<path class="w8" d="M885.3,566.8l-0.1,7.1l23,-10.1l0.1,-7.1z"/>
<path class="e" d="M908.3,556.7l-0.1,7.1M885.2,573.9l23,-10.1"/>
<path class="w13" d="M710,185l11.1,-3.4l23,-10.1l-11.1,3.4z"/>
<path class="e" d="M733,174.9l11.1,-3.4"/>
<path class="w14" d="M788.5,348.3l1.3,-0.2l23,-10.1l-1.3,0.2z"/>
<path class="e" d="M811.5,338.2l1.3,-0.2M788.5,348.3l23,-10.1"/>
<path class="w9" d="M884.8,559.9l0.5,6.8l23,-10.1l-0.5,-6.8z"/>
<path class="e" d="M907.8,549.8l0.5,6.8"/>
<path class="w14" d="M789.8,348.2l1.3,-0.2l23,-10.1l-1.3,0.2z"/>
<path class="e" d="M812.8,338.1l1.3,-0.2"/>
<path class="w11" d="M872.1,531.9l0.4,1.6l23,-10.1l-0.4,-1.6z"/>
<path class="e" d="M895.1,521.8l0.4,1.6"/>
<path class="w13" d="M872.6,533.5l1,1.4l23,-10.1l-1,-1.4z"/>
<path class="e" d="M895.6,523.4l1,1.4"/>
<path class="n" d="M873.6,534.9l23,-10.1"/>
<path class="w7" d="M872.3,530.2l-0.2,1.7l23,-10.1l0.2,-1.7z"/>
<path class="e" d="M895.3,520.1l-0.2,1.7"/>
<path class="w14" d="M791.1,348l1.3,-0.1l23,-10.1l-1.3,0.1z"/>
<path class="e" d="M814.1,337.9l1.3,-0.1M792.4,347.9l23,-10.1"/>
<path class="w6" d="M734.6,223.7l2,-6.6l23,-10.1l-2,6.6z"/>
<path class="e" d="M757.6,213.6l2,-6.6"/>
<path class="w14" d="M873.6,534.9l2.8,2.6l23,-10.1l-2.8,-2.6z"/>
<path class="e" d="M896.6,524.8l2.8,2.6"/>
<path class="n" d="M873.6,534.9l23,-10.1"/>
<path class="w0" d="M967.9,732.7l-9.9,6l23,-10.1l9.9,-6z"/>
<path class="e" d="M990.9,722.6l-9.9,6"/>
<path class="w10" d="M883.6,553.5l1.1,6.4l23,-10.1l-1.1,-6.4z"/>
<path class="e" d="M906.6,543.4l1.1,6.4"/>
<path class="w4" d="M873.1,528.8l-0.8,1.5l23,-10.1l0.8,-1.5z"/>
<path class="e" d="M896.1,518.7l-0.8,1.5"/>
<path class="n" d="M873.1,528.8l23,-10.1"/>
<path class="w13" d="M876.4,537.5l3.2,4.6l23,-10.1l-3.2,-4.6z"/>
<path class="e" d="M899.4,527.4l3.2,4.6"/>
<path class="w11" d="M881.9,547.5l1.7,6l23,-10.1l-1.7,-6z"/>
<path class="e" d="M904.9,537.4l1.7,6"/>
<path class="w14" d="M792.4,347.9l5.1,5l23,-10.1l-5.1,-5z"/>
<path class="e" d="M815.4,337.8l5.1,5M792.4,347.9l23,-10.1"/>
<path class="w12" d="M879.5,542.1l2.4,5.4l23,-10.1l-2.4,-5.4z"/>
<path class="e" d="M902.5,532l2.4,5.4"/>
<path class="w2" d="M874.5,527l-1.5,1.8l23,-10.1l1.5,-1.8z"/>
<path class="e" d="M897.5,516.9l-1.5,1.8"/>
<path class="n" d="M873.1,528.8l23,-10.1"/>
<path class="w13" d="M811.8,385.5l0.8,1.5l23,-10.1l-0.8,-1.5z"/>
<path class="e" d="M834.8,375.4l0.8,1.5"/>
<path class="w10" d="M811.6,383.9l0.2,1.7l23,-10.1l-0.2,-1.7z"/>
<path class="e" d="M834.6,373.8l0.2,1.7"/>
<path class="n" d="M811.6,383.9l23,-10.1"/>
<path class="w14" d="M812.7,387l1.3,1.1l23,-10.1l-1.3,-1.1z"/>
<path class="e" d="M835.7,376.9l1.3,1.1"/>
<path class="w14" d="M797.5,352.9l4.4,5.2l23,-10.1l-4.4,-5.2z"/>
<path class="e" d="M820.5,342.8l4.4,5.2"/>
<path class="w8" d="M811.8,380.1l-0.2,3.8l23,-10.1l0.2,-3.8z"/>
<path class="e" d="M834.8,370l-0.2,3.8"/>
<path class="n" d="M811.6,383.9l23,-10.1"/>
<path class="w14" d="M939.8,671.2l-1.3,0.2l23,-10.1l1.3,-0.2z"/>
<path class="e" d="M962.8,661.1l-1.3,0.2M938.5,671.4l23,-10.1"/>
<path class="w3" d="M875.9,525.1l-1.3,1.9l23,-10.1l1.3,-1.9z"/>
<path class="e" d="M898.9,515l-1.3,1.9"/>
<path class="n" d="M875.9,525.1l23,-10.1"/>
<path class="w5" d="M736.6,217.1l2.3,-6.6l23,-10.1l-2.3,6.6z"/>
<path class="e" d="M759.6,207l2.3,-6.6M738.9,210.4l23,-10.1"/>
<path class="w15" d="M814,388.1l1.6,0.5l23,-10.1l-1.6,-0.5z"/>
<path class="e" d="M837,378l1.6,0.5"/>
<path class="n" d="M815.5,388.6l23,-10.1"/>
<path class="w15" d="M941.1,671.4l-1.3,-0.2l23,-10.1l1.3,0.2z"/>
<path class="e" d="M964.1,661.3l-1.3,-0.2"/>
<path class="w13" d="M801.9,358.2l3.7,5.4l23,-10.1l-3.7,-5.4z"/>
<path class="e" d="M824.9,348.1l3.7,5.4"/>
<path class="w10" d="M810.8,374.6l1,5.5l23,-10.1l-1,-5.5z"/>
<path class="e" d="M833.8,364.5l1,5.5"/>
<path class="w1" d="M877,523.9l-1.2,1.1l23,-10.1l1.2,-1.1z"/>
<path class="e" d="M900,513.8l-1.2,1.1M877,523.9l23,-10.1"/>
<path class="n" d="M875.9,525.1l23,-10.1"/>
<path class="w15" d="M815.5,388.6l2.3,0.3l23,-10.1l-2.3,-0.3z"/>
<path class="e" d="M838.5,378.5l2.3,0.3"/>
<path class="n" d="M815.5,388.6l23,-10.1"/>
<path class="w13" d="M805.7,363.6l3,5.5l23,-10.1l-3,-5.5z"/>
<path class="e" d="M828.7,353.5l3,5.5"/>
<path class="w15" d="M942.3,672l-1.2,-0.6l23,-10.1l1.2,0.6z"/>
<path class="e" d="M965.3,661.9l-1.2,-0.6"/>
<path class="n" d="M942.3,672l23,-10.1"/>
<path class="w12" d="M808.6,369l2.1,5.5l23,-10.1l-2.1,-5.5z"/>
<path class="e" d="M831.6,358.9l2.1,5.5"/>
<path class="w15" d="M945.1,673.7l-2.8,-1.8l23,-10.1l2.8,1.8z"/>
<path class="e" d="M968.1,663.6l-2.8,-1.8"/>
<path class="n" d="M942.3,672l23,-10.1"/>
<path class="w13" d="M721,181.6l11.2,-3l23,-10.1l-11.2,3z"/>
<path class="e" d="M744,171.5l11.2,-3"/>
<path class="w15" d="M817.8,388.8l2.3,0.4l23,-10.1l-2.3,-0.4z"/>
<path class="e" d="M840.8,378.7l2.3,0.4"/>
<path class="n" d="M820.1,389.3l23,-10.1"/>
<path class="w14" d="M820.1,389.3l1.6,-0l23,-10.1l-1.6,0z"/>
<path class="e" d="M843.1,379.2l1.6,-0"/>
<path class="n" d="M820.1,389.3l23,-10.1"/>
<path class="w15" d="M950.7,676.9l-5.6,-3.2l23,-10.1l5.6,3.2z"/>
<path class="e" d="M973.7,666.8l-5.6,-3.2"/>
<path class="w12" d="M821.8,389.3l1.5,-0.6l23,-10.1l-1.5,0.6z"/>
<path class="e" d="M844.8,379.2l1.5,-0.6M823.3,388.6l23,-10.1"/>
<path class="w0" d="M977.5,726.3l-9.7,6.4l23,-10.1l9.7,-6.4z"/>
<path class="e" d="M1000.5,716.2l-9.7,6.4"/>
<path class="w15" d="M956.7,679.8l-5.9,-2.9l23,-10.1l5.9,2.9z"/>
<path class="e" d="M979.7,669.7l-5.9,-2.9"/>
<path class="w15" d="M962.8,682.4l-6.2,-2.6l23,-10.1l6.2,2.6z"/>
<path class="e" d="M985.8,672.3l-6.2,-2.6"/>
<path class="w14" d="M732.2,178.6l11.3,-2.5l23,-10.1l-11.3,2.5z"/>
<path class="e" d="M755.2,168.5l11.3,-2.5"/>
<path class="w0" d="M986.9,719.6l-9.4,6.8l23,-10.1l9.4,-6.8z"/>
<path class="e" d="M1009.9,709.5l-9.4,6.8"/>
<path class="w15" d="M969.3,684.8l-6.4,-2.4l23,-10.1l6.4,2.4z"/>
<path class="e" d="M992.3,674.7l-6.4,-2.4"/>
<path class="w15" d="M976,686.9l-6.7,-2.1l23,-10.1l6.7,2.1z"/>
<path class="e" d="M999,676.8l-6.7,-2.1M976,686.9l23,-10.1"/>
<path class="w14" d="M743.6,176.1l11.4,-2l23,-10.1l-11.4,2z"/>
<path class="e" d="M766.6,166l11.4,-2"/>
<path class="w12" d="M890.5,490.3l0.7,1.6l23,-10.1l-0.7,-1.6z"/>
<path class="e" d="M913.5,480.2l0.7,1.6"/>
<path class="w0" d="M779,238.7l1.1,-0.7l23,-10.1l-1.1,0.7z"/>
<path class="e" d="M802,228.6l1.1,-0.7M779,238.7l23,-10.1"/>
<path class="w14" d="M891.2,491.8l1.2,1.2l23,-10.1l-1.2,-1.2z"/>
<path class="e" d="M914.2,481.7l1.2,1.2"/>
<path class="w9" d="M890.4,488.6l0,1.7l23,-10.1l-0,-1.7z"/>
<path class="e" d="M913.4,478.5l0,1.7"/>
<path class="n" d="M890.4,488.6l23,-10.1"/>
<path class="w15" d="M892.3,493l1.5,0.7l23,-10.1l-1.5,-0.7z"/>
<path class="e" d="M915.3,482.9l1.5,0.7"/>
<path class="n" d="M893.8,493.7l23,-10.1"/>
<path class="w7" d="M890.8,486.3l-0.4,2.3l23,-10.1l0.4,-2.3z"/>
<path class="e" d="M913.8,476.2l-0.4,2.3"/>
<path class="n" d="M890.4,488.6l23,-10.1"/>
<path class="w2" d="M780.1,238l0.9,-1l23,-10.1l-0.9,1z"/>
<path class="e" d="M803.1,227.9l0.9,-1"/>
<path class="w0" d="M996.1,712.4l-9.1,7.1l23,-10.1l9.1,-7.1z"/>
<path class="e" d="M1019.1,702.3l-9.1,7.1"/>
<path class="w4" d="M781,237l0.6,-1.2l23,-10.1l-0.6,1.2z"/>
<path class="e" d="M804,226.9l0.6,-1.2"/>
<path class="n" d="M781.5,235.8l23,-10.1"/>
<path class="w12" d="M854.4,402.3l0.6,1.6l23,-10.1l-0.6,-1.6z"/>
<path class="e" d="M877.4,392.2l0.6,1.6"/>
<path class="w8" d="M891,483.9l-0.2,2.4l23,-10.1l0.2,-2.4z"/>
<path class="e" d="M914,473.8l-0.2,2.4"/>
<path class="n" d="M891,483.9l23,-10.1"/>
<path class="w14" d="M855,403.9l1.1,1.2l23,-10.1l-1.1,-1.2z"/>
<path class="e" d="M878,393.8l1.1,1.2"/>
<path class="n" d="M856.2,405.1l23,-10.1"/>
<path class="w8" d="M854.4,400.6l0,1.7l23,-10.1l-0,-1.7z"/>
<path class="e" d="M877.4,390.5l0,1.7"/>
<path class="w15" d="M893.8,493.7l3.7,0.9l23,-10.1l-3.7,-0.9z"/>
<path class="e" d="M916.8,483.6l3.7,0.9"/>
<path class="n" d="M893.8,493.7l23,-10.1"/>
<path class="w15" d="M856.2,405.1l1.9,1.4l23,-10.1l-1.9,-1.4z"/>
<path class="e" d="M879.2,395l1.9,1.4"/>
<path class="n" d="M856.2,405.1l23,-10.1"/>
<path class="w6" d="M891.5,482.3l-0.4,1.6l23,-10.1l0.4,-1.6z"/>
<path class="e" d="M914.5,472.2l-0.4,1.6"/>
<path class="n" d="M891,483.9l23,-10.1"/>
<path class="w5" d="M855,399.1l-0.6,1.5l23,-10.1l0.6,-1.5z"/>
<path class="e" d="M878,389l-0.6,1.5"/>
<path class="n" d="M855,399.1l23,-10.1"/>
<path class="w6" d="M781.5,235.8l1,-3.1l23,-10.1l-1,3.1z"/>
<path class="e" d="M804.5,225.7l1,-3.1"/>
<path class="n" d="M781.5,235.8l23,-10.1"/>
<path class="w14" d="M858.1,406.5l1.8,1.5l23,-10.1l-1.8,-1.5z"/>
<path class="e" d="M881.1,396.4l1.8,1.5"/>
<path class="n" d="M859.9,408.1l23,-10.1"/>
<path class="w2" d="M892.5,481l-1,1.3l23,-10.1l1,-1.3z"/>
<path class="e" d="M915.5,470.9l-1,1.3"/>
<path class="w15" d="M859.9,408.1l1.4,0.8l23,-10.1l-1.4,-0.8z"/>
<path class="e" d="M882.9,398l1.4,0.8"/>
<path class="n" d="M859.9,408.1l23,-10.1"/>
<path class="w3" d="M857,395.9l-2,3.2l23,-10.1l2,-3.2z"/>
<path class="e" d="M880,385.8l-2,3.2"/>
<path class="n" d="M855,399.1l23,-10.1"/>
<path class="w0" d="M893.9,480.2l-1.4,0.8l23,-10.1l1.4,-0.8z"/>
<path class="e" d="M916.9,470.1l-1.4,0.8M893.9,480.2l23,-10.1"/>
<path class="w15" d="M897.5,494.6l4.9,2.4l23,-10.1l-4.9,-2.4z"/>
<path class="e" d="M920.5,484.5l4.9,2.4"/>
<path class="w15" d="M861.3,408.9l1.6,0.2l23,-10.1l-1.6,-0.2z"/>
<path class="e" d="M884.3,398.8l1.6,0.2"/>
<path class="w5" d="M782.5,232.7l2.2,-6l23,-10.1l-2.2,6z"/>
<path class="e" d="M805.5,222.6l2.2,-6"/>
<path class="w13" d="M863,409.1l1.6,-0.4l23,-10.1l-1.6,0.4z"/>
<path class="e" d="M886,399l1.6,-0.4M864.5,408.7l23,-10.1"/>
<path class="w14" d="M755,174.1l11.5,-1.6l23,-10.1l-11.5,1.6z"/>
<path class="e" d="M778,164l11.5,-1.6"/>
<path class="w5" d="M858.8,390.7l-1.8,5.2l23,-10.1l1.8,-5.2z"/>
<path class="e" d="M881.8,380.6l-1.8,5.2"/>
<path class="w15" d="M902.4,497l4.7,3.6l23,-10.1l-4.7,-3.6z"/>
<path class="e" d="M925.4,486.9l4.7,3.6"/>
<path class="w4" d="M784.7,226.7l2.6,-6l23,-10.1l-2.6,6z"/>
<path class="e" d="M807.7,216.6l2.6,-6"/>
<path class="w14" d="M907.1,500.6l4.4,4.4l23,-10.1l-4.4,-4.4z"/>
<path class="e" d="M930.1,490.5l4.4,4.4"/>
<path class="w0" d="M1004.9,704.9l-8.8,7.5l23,-10.1l8.8,-7.5z"/>
<path class="e" d="M1027.9,694.8l-8.8,7.5"/>
<path class="w7" d="M859.7,384.9l-0.8,5.8l23,-10.1l0.8,-5.8z"/>
<path class="e" d="M882.7,374.8l-0.8,5.8"/>
<path class="w11" d="M884.8,442.2l0.8,2.2l23,-10.1l-0.8,-2.2z"/>
<path class="e" d="M907.8,432.1l0.8,2.2"/>
<path class="n" d="M885.6,444.4l23,-10.1"/>
<path class="w13" d="M885.6,444.4l0.9,1.4l23,-10.1l-0.9,-1.4z"/>
<path class="e" d="M908.6,434.3l0.9,1.4"/>
<path class="n" d="M885.6,444.4l23,-10.1"/>
<path class="w12" d="M883.8,440l1,2.2l23,-10.1l-1,-2.2z"/>
<path class="e" d="M906.8,429.9l1,2.2"/>
<path class="n" d="M883.8,440l23,-10.1"/>
<path class="w14" d="M911.5,505l4.1,5.1l23,-10.1l-4.1,-5.1z"/>
<path class="e" d="M934.5,494.9l4.1,5.1"/>
<path class="w11" d="M883.4,438.4l0.4,1.6l23,-10.1l-0.4,-1.6z"/>
<path class="e" d="M906.4,428.3l0.4,1.6"/>
<path class="n" d="M883.8,440l23,-10.1"/>
<path class="w5" d="M921.9,524.6l-0.5,1.3l23,-10.1l0.5,-1.3z"/>
<path class="e" d="M944.9,514.5l-0.5,1.3M921.4,525.9l23,-10.1"/>
<path class="w15" d="M886.5,445.9l1.3,1l23,-10.1l-1.3,-1z"/>
<path class="e" d="M909.5,435.8l1.3,1"/>
<path class="w7" d="M883.6,436.7l-0.2,1.7l23,-10.1l0.2,-1.7z"/>
<path class="e" d="M906.6,426.6l-0.2,1.7"/>
<path class="w5" d="M922.4,523.4l-0.5,1.3l23,-10.1l0.5,-1.3z"/>
<path class="e" d="M945.4,513.3l-0.5,1.3"/>
<path class="w8" d="M859.7,378.7l-0.1,6.2l23,-10.1l0.1,-6.2z"/>
<path class="e" d="M882.7,368.6l-0.1,6.2"/>
<path class="w13" d="M915.7,510.1l3.8,5.7l23,-10.1l-3.8,-5.7z"/>
<path class="e" d="M938.7,500l3.8,5.7"/>
<path class="w15" d="M887.8,446.9l1.6,0.5l23,-10.1l-1.6,-0.5z"/>
<path class="e" d="M910.8,436.8l1.6,0.5"/>
<path class="w3" d="M884.4,435.3l-0.8,1.4l23,-10.1l0.8,-1.4z"/>
<path class="e" d="M907.4,425.2l-0.8,1.4"/>
<path class="w5" d="M922.9,522.1l-0.5,1.3l23,-10.1l0.5,-1.3z"/>
<path class="e" d="M945.9,512l-0.5,1.3M922.9,522.1l23,-10.1"/>
<path class="w13" d="M919.5,515.8l3.4,6.3l23,-10.1l-3.4,-6.3z"/>
<path class="e" d="M942.5,505.7l3.4,6.3M922.9,522.1l23,-10.1"/>
<path class="w4" d="M787.4,220.7l3,-6l23,-10.1l-3,6z"/>
<path class="e" d="M810.4,210.6l3,-6"/>
<path class="w14" d="M889.4,447.4l1.6,-0.2l23,-10.1l-1.6,0.2z"/>
<path class="e" d="M912.4,437.3l1.6,-0.2"/>
<path class="n" d="M891,447.2l23,-10.1"/>
<path class="w0" d="M885.7,434.3l-1.3,1l23,-10.1l1.3,-1z"/>
<path class="e" d="M908.7,424.2l-1.3,1"/>
<path class="n" d="M885.7,434.3l23,-10.1"/>
<path class="w9" d="M859.1,372.2l0.6,6.5l23,-10.1l-0.6,-6.5z"/>
<path class="e" d="M882.1,362.1l0.6,6.5"/>
<path class="w15" d="M852.1,357l1.2,0.5l23,-10.1l-1.2,-0.5z"/>
<path class="e" d="M875.1,346.9l1.2,0.5M852.1,357l23,-10.1"/>
<path class="w10" d="M857.8,365.5l1.3,6.7l23,-10.1l-1.3,-6.7z"/>
<path class="e" d="M880.8,355.4l1.3,6.7"/>
<path class="w13" d="M891,447.2l3.5,-1.1l23,-10.1l-3.5,1.1z"/>
<path class="e" d="M914,437.1l3.5,-1.1"/>
<path class="n" d="M891,447.2l23,-10.1"/>
<path class="w15" d="M853.3,357.5l1.2,0.5l23,-10.1l-1.2,-0.5z"/>
<path class="e" d="M876.3,347.4l1.2,0.5"/>
<path class="w0" d="M889,432.6l-3.3,1.7l23,-10.1l3.3,-1.7z"/>
<path class="e" d="M912,422.5l-3.3,1.7"/>
<path class="n" d="M885.7,434.3l23,-10.1"/>
<path class="w14" d="M766.5,172.5l11.6,-1.1l23,-10.1l-11.6,1.1z"/>
<path class="e" d="M789.5,162.4l11.6,-1.1"/>
<path class="w13" d="M978.8,637.3l-1.2,0.5l23,-10.1l1.2,-0.5z"/>
<path class="e" d="M1001.8,627.2l-1.2,0.5M977.6,637.8l23,-10.1"/>
<path class="w11" d="M855.8,358.6l2,6.9l23,-10.1l-2,-6.9z"/>
<path class="e" d="M878.8,348.5l2,6.9M855.8,358.6l23,-10.1"/>
<path class="w15" d="M854.5,358l1.2,0.6l23,-10.1l-1.2,-0.6z"/>
<path class="e" d="M877.5,347.9l1.2,0.6M855.8,358.6l23,-10.1"/>
<path class="w14" d="M980.1,637.2l-1.3,0.1l23,-10.1l1.3,-0.1z"/>
<path class="e" d="M1003.1,627.1l-1.3,0.1"/>
<path class="w3" d="M790.4,214.8l3.4,-5.9l23,-10.1l-3.4,5.9z"/>
<path class="e" d="M813.4,204.7l3.4,-5.9"/>
<path class="w12" d="M872.7,401.8l5.3,-2.3l23,-10.1l-5.3,2.3z"/>
<path class="e" d="M895.7,391.7l5.3,-2.3M872.7,401.8l23,-10.1"/>
<path class="w15" d="M981.4,637.5l-1.3,-0.3l23,-10.1l1.3,0.3z"/>
<path class="e" d="M1004.4,627.4l-1.3,-0.3"/>
<path class="n" d="M981.4,637.5l23,-10.1"/>
<path class="w1" d="M1013.4,697.1l-8.5,7.9l23,-10.1l8.5,-7.9z"/>
<path class="e" d="M1036.4,687l-8.5,7.9"/>
<path class="w14" d="M894.5,446.1l5.4,-0.4l23,-10.1l-5.4,0.4z"/>
<path class="e" d="M917.5,436l5.4,-0.4"/>
<path class="w0" d="M893.2,429.1l-4.1,3.5l23,-10.1l4.1,-3.5z"/>
<path class="e" d="M916.2,419l-4.1,3.5"/>
<path class="w15" d="M984.4,638.6l-3.1,-1.1l23,-10.1l3.1,1.1z"/>
<path class="e" d="M1007.4,628.5l-3.1,-1.1"/>
<path class="n" d="M981.4,637.5l23,-10.1"/>
<path class="w0" d="M915.2,474.5l-5.3,2.9l23,-10.1l5.3,-2.9z"/>
<path class="e" d="M938.2,464.4l-5.3,2.9M909.9,477.4l23,-10.1"/>
<path class="w3" d="M793.8,208.8l3.7,-5.9l23,-10.1l-3.7,5.9z"/>
<path class="e" d="M816.8,198.7l3.7,-5.9M797.5,202.9l23,-10.1"/>
<path class="w13" d="M878,399.6l5.8,-1.6l23,-10.1l-5.8,1.6z"/>
<path class="e" d="M901,389.5l5.8,-1.6"/>
<path class="w15" d="M990.6,640.4l-6.1,-1.8l23,-10.1l6.1,1.8z"/>
<path class="e" d="M1013.6,630.3l-6.1,-1.8"/>
<path class="w15" d="M900,445.7l5.7,0.7l23,-10.1l-5.7,-0.7z"/>
<path class="e" d="M923,435.6l5.7,0.7"/>
<path class="w2" d="M896.7,424.6l-3.6,4.5l23,-10.1l3.6,-4.5z"/>
<path class="e" d="M919.7,414.5l-3.6,4.5"/>
<path class="w14" d="M778,171.4l11.6,-0.6l23,-10.1l-11.6,0.6z"/>
<path class="e" d="M801,161.3l11.6,-0.6"/>
<path class="w0" d="M920.4,470.8l-5.2,3.7l23,-10.1l5.2,-3.7z"/>
<path class="e" d="M943.4,460.7l-5.2,3.7"/>
<path class="w15" d="M996.9,641.9l-6.4,-1.5l23,-10.1l6.4,1.5z"/>
<path class="e" d="M1019.9,631.8l-6.4,-1.5"/>
<path class="w15" d="M905.7,446.4l5.9,1.6l23,-10.1l-5.9,-1.6z"/>
<path class="e" d="M928.7,436.3l5.9,1.6"/>
<path class="w14" d="M883.8,397.9l6.3,-1l23,-10.1l-6.3,1z"/>
<path class="e" d="M906.8,387.8l6.3,-1"/>
<path class="w1" d="M1021.6,688.9l-8.2,8.2l23,-10.1l8.2,-8.2z"/>
<path class="e" d="M1044.6,678.8l-8.2,8.2"/>
<path class="w3" d="M899.8,419.3l-3.1,5.3l23,-10.1l3.1,-5.3z"/>
<path class="e" d="M922.8,409.2l-3.1,5.3"/>
<path class="w0" d="M925.4,466.4l-5,4.4l23,-10.1l5,-4.4z"/>
<path class="e" d="M948.4,456.3l-5,4.4"/>
<path class="w15" d="M911.6,448l6,2.4l23,-10.1l-6,-2.4z"/>
<path class="e" d="M934.6,437.9l6,2.4"/>
<path class="w15" d="M1003.5,643.1l-6.6,-1.2l23,-10.1l6.6,1.2z"/>
<path class="e" d="M1026.5,633l-6.6,-1.2"/>
<path class="w4" d="M902.5,413.5l-2.6,5.9l23,-10.1l2.6,-5.9z"/>
<path class="e" d="M925.5,403.4l-2.6,5.9"/>
<path class="w14" d="M890.1,396.9l6.7,-0.4l23,-10.1l-6.7,0.4z"/>
<path class="e" d="M913.1,386.8l6.7,-0.4"/>
<path class="w14" d="M789.6,170.7l11.6,-0.2l23,-10.1l-11.6,0.2z"/>
<path class="e" d="M812.6,160.6l11.6,-0.2"/>
<path class="w15" d="M917.6,450.4l6,3.1l23,-10.1l-6,-3.1z"/>
<path class="e" d="M940.6,440.3l6,3.1"/>
<path class="w5" d="M904.6,407.1l-2.1,6.4l23,-10.1l2.1,-6.4z"/>
<path class="e" d="M927.6,397l-2.1,6.4"/>
<path class="w15" d="M1010.3,643.9l-6.8,-0.9l23,-10.1l6.8,0.9z"/>
<path class="e" d="M1033.3,633.8l-6.8,-0.9"/>
<path class="w1" d="M930.2,461.4l-4.8,5.1l23,-10.1l4.8,-5.1z"/>
<path class="e" d="M953.2,451.3l-4.8,5.1M930.2,461.4l23,-10.1"/>
<path class="w1" d="M1029.5,680.3l-7.9,8.5l23,-10.1l7.9,-8.5z"/>
<path class="e" d="M1052.5,670.2l-7.9,8.5"/>
<path class="w15" d="M896.7,396.6l7,0.3l23,-10.1l-7,-0.3z"/>
<path class="e" d="M919.7,386.5l7,0.3M903.7,396.8l23,-10.1"/>
<path class="w15" d="M923.6,453.5l6,3.8l23,-10.1l-6,-3.8z"/>
<path class="e" d="M946.6,443.4l6,3.8M929.7,457.3l23,-10.1"/>
<path class="w10" d="M930.1,460l0.2,1.4l23,-10.1l-0.2,-1.4z"/>
<path class="e" d="M953.1,449.9l0.2,1.4M930.2,461.4l23,-10.1"/>
<path class="w0" d="M831.9,239l1.1,-0.7l23,-10.1l-1.1,0.7z"/>
<path class="e" d="M854.9,228.9l1.1,-0.7M831.9,239l23,-10.1"/>
<path class="w10" d="M929.9,458.6l0.2,1.4l23,-10.1l-0.2,-1.4z"/>
<path class="e" d="M952.9,448.5l0.2,1.4"/>
<path class="w6" d="M906.2,400.1l-1.6,6.9l23,-10.1l1.6,-6.9z"/>
<path class="e" d="M929.2,390l-1.6,6.9M906.2,400.1l23,-10.1"/>
<path class="w10" d="M929.7,457.3l0.2,1.4l23,-10.1l-0.2,-1.4z"/>
<path class="e" d="M952.7,447.2l0.2,1.4M929.7,457.3l23,-10.1"/>
<path class="w2" d="M833,238.3l0.8,-1l23,-10.1l-0.8,1z"/>
<path class="e" d="M856,228.2l0.8,-1"/>
<path class="n" d="M833.8,237.3l23,-10.1"/>
<path class="w13" d="M903.7,396.8l0.8,1.1l23,-10.1l-0.8,-1.1z"/>
<path class="e" d="M926.7,386.7l0.8,1.1M903.7,396.8l23,-10.1"/>
<path class="w13" d="M904.6,397.9l0.8,1.1l23,-10.1l-0.8,-1.1z"/>
<path class="e" d="M927.6,387.8l0.8,1.1"/>
<path class="w13" d="M905.4,399l0.8,1.1l23,-10.1l-0.8,-1.1z"/>
<path class="e" d="M928.4,388.9l0.8,1.1M906.2,400.1l23,-10.1"/>
<path class="w15" d="M1017.2,644.5l-6.9,-0.5l23,-10.1l6.9,0.5z"/>
<path class="e" d="M1040.2,634.4l-6.9,-0.5M1017.2,644.5l23,-10.1"/>
<path class="w3" d="M833.8,237.3l1.6,-2.8l23,-10.1l-1.6,2.8z"/>
<path class="e" d="M856.8,227.2l1.6,-2.8"/>
<path class="n" d="M833.8,237.3l23,-10.1"/>
<path class="w14" d="M801.2,170.6l11.6,0.3l23,-10.1l-11.6,-0.3z"/>
<path class="e" d="M824.2,160.5l11.6,0.3"/>
<path class="w3" d="M835.4,234.4l3.5,-5.3l23,-10.1l-3.5,5.3z"/>
<path class="e" d="M858.4,224.3l3.5,-5.3"/>
<path class="w2" d="M1037.1,671.5l-7.5,8.9l23,-10.1l7.5,-8.9z"/>
<path class="e" d="M1060.1,661.4l-7.5,8.9"/>
<path class="w2" d="M838.9,229.1l3.9,-5.2l23,-10.1l-3.9,5.2z"/>
<path class="e" d="M861.9,219l3.9,-5.2"/>
<path class="w15" d="M812.9,170.8l11.6,0.8l23,-10.1l-11.6,-0.8z"/>
<path class="e" d="M835.9,160.7l11.6,0.8"/>
<path class="w2" d="M1044.3,662.3l-7.2,9.2l23,-10.1l7.2,-9.2z"/>
<path class="e" d="M1067.3,652.2l-7.2,9.2"/>
<path class="w2" d="M842.8,223.9l4.3,-5.1l23,-10.1l-4.3,5.1z"/>
<path class="e" d="M865.8,213.8l4.3,-5.1"/>
<path class="w13" d="M1010.4,594.8l-1.2,0.4l23,-10.1l1.2,-0.4z"/>
<path class="e" d="M1033.4,584.7l-1.2,0.4M1009.1,595.2l23,-10.1"/>
<path class="w14" d="M1011.7,594.8l-1.3,0l23,-10.1l1.3,-0z"/>
<path class="e" d="M1034.7,584.7l-1.3,0"/>
<path class="n" d="M1011.7,594.8l23,-10.1"/>
<path class="w15" d="M1014.9,595.2l-3.2,-0.4l23,-10.1l3.2,0.4z"/>
<path class="e" d="M1037.9,585.1l-3.2,-0.4"/>
<path class="n" d="M1011.7,594.8l23,-10.1"/>
<path class="w1" d="M847.1,218.8l4.6,-5l23,-10.1l-4.6,5z"/>
<path class="e" d="M870.1,208.7l4.6,-5"/>
<path class="w15" d="M824.5,171.6l11.6,1.2l23,-10.1l-11.6,-1.2z"/>
<path class="e" d="M847.5,161.5l11.6,1.2"/>
<path class="w15" d="M1021.3,595.5l-6.3,-0.4l23,-10.1l6.3,0.4z"/>
<path class="e" d="M1044.3,585.4l-6.3,-0.4"/>
<path class="w2" d="M1051.1,652.8l-6.8,9.5l23,-10.1l6.8,-9.5z"/>
<path class="e" d="M1074.1,642.7l-6.8,9.5"/>
<path class="w1" d="M851.7,213.8l5,-4.9l23,-10.1l-5,4.9z"/>
<path class="e" d="M874.7,203.7l5,-4.9M856.7,209l23,-10.1"/>
<path class="w14" d="M1027.7,595.5l-6.5,-0l23,-10.1l6.5,0z"/>
<path class="e" d="M1050.7,585.4l-6.5,-0"/>
<path class="w15" d="M836.1,172.8l11.6,1.7l23,-10.1l-11.6,-1.7z"/>
<path class="e" d="M859.1,162.7l11.6,1.7"/>
<path class="w14" d="M1034.4,595.2l-6.6,0.3l23,-10.1l6.6,-0.3z"/>
<path class="e" d="M1057.4,585.1l-6.6,0.3"/>
<path class="w3" d="M1057.5,643.1l-6.4,9.7l23,-10.1l6.4,-9.7z"/>
<path class="e" d="M1080.5,633l-6.4,9.7"/>
<path class="w0" d="M883.7,251.3l1,-0.8l23,-10.1l-1,0.8z"/>
<path class="e" d="M906.7,241.2l1,-0.8M883.7,251.3l23,-10.1"/>
<path class="n" d="M884.8,250.5l23,-10.1"/>
<path class="w14" d="M1041.1,594.5l-6.7,0.7l23,-10.1l6.7,-0.7z"/>
<path class="e" d="M1064.1,584.4l-6.7,0.7"/>
<path class="w1" d="M884.8,250.5l2.2,-2.4l23,-10.1l-2.2,2.4z"/>
<path class="e" d="M907.8,240.4l2.2,-2.4"/>
<path class="n" d="M884.8,250.5l23,-10.1"/>
<path class="w15" d="M847.7,174.5l11.5,2.1l23,-10.1l-11.5,-2.1z"/>
<path class="e" d="M870.7,164.4l11.5,2.1"/>
<path class="w3" d="M1063.6,633.1l-6.1,10l23,-10.1l6.1,-10z"/>
<path class="e" d="M1086.6,623l-6.1,10"/>
<path class="w1" d="M887,248.1l4.6,-4.3l23,-10.1l-4.6,4.3z"/>
<path class="e" d="M910,238l4.6,-4.3"/>
<path class="w14" d="M1048,593.5l-6.8,1l23,-10.1l6.8,-1z"/>
<path class="e" d="M1071,583.4l-6.8,1M1048,593.5l23,-10.1"/>
<path class="w15" d="M859.2,176.7l11.4,2.6l23,-10.1l-11.4,-2.6z"/>
<path class="e" d="M882.2,166.6l11.4,2.6"/>
<path class="w0" d="M891.6,243.8l5,-4.2l23,-10.1l-5,4.2z"/>
<path class="e" d="M914.6,233.7l5,-4.2"/>
<path class="w4" d="M1069.3,622.9l-5.7,10.2l23,-10.1l5.7,-10.2z"/>
<path class="e" d="M1092.3,612.8l-5.7,10.2"/>
<path class="w13" d="M1031.8,546l-1.3,0.3l23,-10.1l1.3,-0.3z"/>
<path class="e" d="M1054.8,535.9l-1.3,0.3M1030.5,546.3l23,-10.1"/>
<path class="n" d="M1031.8,546l23,-10.1"/>
<path class="w14" d="M1035,545.6l-3.2,0.3l23,-10.1l3.2,-0.3z"/>
<path class="e" d="M1058,535.5l-3.2,0.3"/>
<path class="n" d="M1031.8,546l23,-10.1"/>
<path class="w0" d="M896.5,239.6l5.3,-4l23,-10.1l-5.3,4z"/>
<path class="e" d="M919.5,229.5l5.3,-4"/>
<path class="w15" d="M870.6,179.3l11.3,3.1l23,-10.1l-11.3,-3.1z"/>
<path class="e" d="M893.6,169.2l11.3,3.1"/>
<path class="w14" d="M1041.2,544.6l-6.2,1.1l23,-10.1l6.2,-1.1z"/>
<path class="e" d="M1064.2,534.5l-6.2,1.1"/>
<path class="w4" d="M1074.5,612.4l-5.3,10.5l23,-10.1l5.3,-10.5z"/>
<path class="e" d="M1097.5,602.3l-5.3,10.5"/>
<path class="w0" d="M901.8,235.7l5.6,-3.8l23,-10.1l-5.6,3.8z"/>
<path class="e" d="M924.8,225.6l5.6,-3.8"/>
<path class="w13" d="M1047.5,543.1l-6.3,1.5l23,-10.1l6.3,-1.5z"/>
<path class="e" d="M1070.5,533l-6.3,1.5"/>
<path class="w15" d="M881.9,182.3l11.2,3.5l23,-10.1l-11.2,-3.5z"/>
<path class="e" d="M904.9,172.2l11.2,3.5"/>
<path class="w0" d="M907.4,231.9l5.9,-3.6l23,-10.1l-5.9,3.6z"/>
<path class="e" d="M930.4,221.8l5.9,-3.6M913.3,228.3l23,-10.1"/>
<path class="w4" d="M1079.4,601.7l-4.9,10.7l23,-10.1l4.9,-10.7z"/>
<path class="e" d="M1102.4,591.6l-4.9,10.7"/>
<path class="w0" d="M930.7,275.5l1.2,-0.6l23,-10.1l-1.2,0.6z"/>
<path class="e" d="M953.7,265.4l1.2,-0.6M930.7,275.5l23,-10.1"/>
<path class="n" d="M931.8,274.9l23,-10.1"/>
<path class="w13" d="M1053.9,541.2l-6.3,1.9l23,-10.1l6.3,-1.9z"/>
<path class="e" d="M1076.9,531.1l-6.3,1.9"/>
<path class="w0" d="M931.8,274.9l2.7,-1.8l23,-10.1l-2.7,1.8z"/>
<path class="e" d="M954.8,264.8l2.7,-1.8"/>
<path class="n" d="M931.8,274.9l23,-10.1"/>
<path class="w15" d="M893.1,185.8l11.1,3.9l23,-10.1l-11.1,-3.9z"/>
<path class="e" d="M916.1,175.7l11.1,3.9"/>
<path class="w0" d="M934.5,273.2l5.5,-3.2l23,-10.1l-5.5,3.2z"/>
<path class="e" d="M957.5,263.1l5.5,-3.2"/>
<path class="w5" d="M1083.8,590.8l-4.4,10.9l23,-10.1l4.4,-10.9z"/>
<path class="e" d="M1106.8,580.7l-4.4,10.9"/>
<path class="w13" d="M1060.2,539l-6.4,2.2l23,-10.1l6.4,-2.2z"/>
<path class="e" d="M1083.2,528.9l-6.4,2.2"/>
<path class="w0" d="M940,270l5.8,-2.9l23,-10.1l-5.8,2.9z"/>
<path class="e" d="M963,259.9l5.8,-2.9M945.7,267.1l23,-10.1"/>
<path class="w13" d="M1043.7,492.5l-3,1.1l23,-10.1l3,-1.1z"/>
<path class="e" d="M1066.7,482.4l-3,1.1M1040.6,493.6l23,-10.1"/>
<path class="w15" d="M904.2,189.8l10.9,4.4l23,-10.1l-10.9,-4.4z"/>
<path class="e" d="M927.2,179.7l10.9,4.4"/>
<path class="w13" d="M1066.6,536.4l-6.4,2.6l23,-10.1l6.4,-2.6z"/>
<path class="e" d="M1089.6,526.3l-6.4,2.6M1066.6,536.4l23,-10.1"/>
<path class="w5" d="M1087.8,579.8l-4,11.1l23,-10.1l4,-11.1z"/>
<path class="e" d="M1110.8,569.7l-4,11.1"/>
<path class="w12" d="M1049.5,490l-5.8,2.5l23,-10.1l5.8,-2.5z"/>
<path class="e" d="M1072.5,479.9l-5.8,2.5M1049.5,490l23,-10.1"/>
<path class="w15" d="M915.1,194.2l10.8,4.8l23,-10.1l-10.8,-4.8z"/>
<path class="e" d="M938.1,184.1l10.8,4.8"/>
<path class="w5" d="M1091.4,568.5l-3.6,11.2l23,-10.1l3.6,-11.2z"/>
<path class="e" d="M1114.4,558.4l-3.6,11.2"/>
<path class="w15" d="M925.9,199l10.6,5.2l23,-10.1l-10.6,-5.2z"/>
<path class="e" d="M948.9,188.9l10.6,5.2"/>
<path class="w6" d="M1094.5,557.2l-3.1,11.4l23,-10.1l3.1,-11.4z"/>
<path class="e" d="M1117.5,547.1l-3.1,11.4"/>
<path class="w15" d="M936.5,204.2l10.4,5.7l23,-10.1l-10.4,-5.7z"/>
<path class="e" d="M959.5,194.1l10.4,5.7"/>
<path class="w6" d="M1097.2,545.7l-2.7,11.5l23,-10.1l2.7,-11.5z"/>
<path class="e" d="M1120.2,535.6l-2.7,11.5"/>
<path class="w15" d="M946.9,209.9l10.2,6.1l23,-10.1l-10.2,-6.1z"/>
<path class="e" d="M969.9,199.8l10.2,6.1"/>
<path class="w7" d="M1099.5,534.1l-2.3,11.6l23,-10.1l2.3,-11.6z"/>
<path class="e" d="M1122.5,524l-2.3,11.6"/>
<path class="w15" d="M957,215.9l9.9,6.5l23,-10.1l-9.9,-6.5z"/>
<path class="e" d="M980,205.8l9.9,6.5"/>
<path class="w7" d="M1101.3,522.4l-1.8,11.7l23,-10.1l1.8,-11.7z"/>
<path class="e" d="M1124.3,512.3l-1.8,11.7"/>
<path class="w15" d="M967,222.4l9.7,6.8l23,-10.1l-9.7,-6.8z"/>
<path class="e" d="M990,212.3l9.7,6.8"/>
<path class="w7" d="M1102.6,510.6l-1.3,11.8l23,-10.1l1.3,-11.8z"/>
<path class="e" d="M1125.6,500.5l-1.3,11.8"/>
<path class="w15" d="M976.6,229.2l9.4,7.2l23,-10.1l-9.4,-7.2z"/>
<path class="e" d="M999.6,219.1l9.4,7.2"/>
<path class="w8" d="M1103.5,498.7l-0.9,11.8l23,-10.1l0.9,-11.8z"/>
<path class="e" d="M1126.5,488.6l-0.9,11.8"/>
<path class="w14" d="M986.1,236.5l9.2,7.6l23,-10.1l-9.2,-7.6z"/>
<path class="e" d="M1009.1,226.4l9.2,7.6"/>
<path class="w8" d="M1104,486.9l-0.4,11.9l23,-10.1l0.4,-11.9z"/>
<path class="e" d="M1127,476.8l-0.4,11.9"/>
<path class="w14" d="M995.2,244.1l8.9,7.9l23,-10.1l-8.9,-7.9z"/>
<path class="e" d="M1018.2,234l8.9,7.9"/>
<path class="w8" d="M1103.9,475l0,11.9l23,-10.1l-0,-11.9z"/>
<path class="e" d="M1126.9,464.9l0,11.9"/>
<path class="w14" d="M1004.1,252l8.6,8.3l23,-10.1l-8.6,-8.3z"/>
<path class="e" d="M1027.1,241.9l8.6,8.3"/>
<path class="w9" d="M1103.5,463.1l0.5,11.9l23,-10.1l-0.5,-11.9z"/>
<path class="e" d="M1126.5,453l0.5,11.9"/>
<path class="w14" d="M1012.7,260.3l8.2,8.6l23,-10.1l-8.2,-8.6z"/>
<path class="e" d="M1035.7,250.2l8.2,8.6"/>
<path class="w9" d="M1102.5,451.2l0.9,11.9l23,-10.1l-0.9,-11.9z"/>
<path class="e" d="M1125.5,441.1l0.9,11.9"/>
<path class="w14" d="M1020.9,268.9l7.9,8.9l23,-10.1l-7.9,-8.9z"/>
<path class="e" d="M1043.9,258.8l7.9,8.9"/>
<path class="w9" d="M1101.1,439.3l1.4,11.8l23,-10.1l-1.4,-11.8z"/>
<path class="e" d="M1124.1,429.2l1.4,11.8"/>
<path class="w14" d="M1028.8,277.8l7.6,9.2l23,-10.1l-7.6,-9.2z"/>
<path class="e" d="M1051.8,267.7l7.6,9.2"/>
<path class="w10" d="M1099.3,427.5l1.8,11.8l23,-10.1l-1.8,-11.8z"/>
<path class="e" d="M1122.3,417.4l1.8,11.8"/>
<path class="w13" d="M1036.4,287.1l7.2,9.5l23,-10.1l-7.2,-9.5z"/>
<path class="e" d="M1059.4,277l7.2,9.5"/>
<path class="w10" d="M1097,415.8l2.3,11.7l23,-10.1l-2.3,-11.7z"/>
<path class="e" d="M1120,405.7l2.3,11.7"/>
<path class="w13" d="M1043.6,296.6l6.9,9.8l23,-10.1l-6.9,-9.8z"/>
<path class="e" d="M1066.6,286.5l6.9,9.8"/>
<path class="w10" d="M1094.3,404.2l2.7,11.6l23,-10.1l-2.7,-11.6z"/>
<path class="e" d="M1117.3,394.1l2.7,11.6"/>
<path class="w13" d="M1050.5,306.4l6.5,10.1l23,-10.1l-6.5,-10.1z"/>
<path class="e" d="M1073.5,296.3l6.5,10.1"/>
<path class="w11" d="M1091.1,392.7l3.2,11.5l23,-10.1l-3.2,-11.5z"/>
<path class="e" d="M1114.1,382.6l3.2,11.5"/>
<path class="w13" d="M1057,316.4l6.1,10.3l23,-10.1l-6.1,-10.3z"/>
<path class="e" d="M1080,306.3l6.1,10.3"/>
<path class="w11" d="M1087.5,381.3l3.6,11.4l23,-10.1l-3.6,-11.4z"/>
<path class="e" d="M1110.5,371.2l3.6,11.4"/>
<path class="w13" d="M1063.1,326.7l5.7,10.5l23,-10.1l-5.7,-10.5z"/>
<path class="e" d="M1086.1,316.6l5.7,10.5"/>
<path class="w11" d="M1083.4,370l4,11.3l23,-10.1l-4,-11.3z"/>
<path class="e" d="M1106.4,359.9l4,11.3"/>
<path class="w12" d="M1068.8,337.2l5.3,10.7l23,-10.1l-5.3,-10.7z"/>
<path class="e" d="M1091.8,327.1l5.3,10.7"/>
<path class="w12" d="M1079,358.9l4.5,11.1l23,-10.1l-4.5,-11.1z"/>
<path class="e" d="M1102,348.8l4.5,11.1"/>
<path class="w12" d="M1074.1,348l4.9,10.9l23,-10.1l-4.9,-10.9z"/>
<path class="e" d="M1097.1,337.9l4.9,10.9"/>
<path d="M1101.1,439.3 L1102.5,451.2 L1103.5,463.1 L1103.9,475 L1104,486.9 L1103.5,498.7 L1102.6,510.6 L1101.3,522.4 L1099.5,534.1 L1097.2,545.7 L1094.5,557.2 L1091.4,568.5 L1087.8,579.8 L1083.8,590.8 L1079.4,601.7 L1074.5,612.4 L1069.3,622.9 L1063.6,633.1 L1057.5,643.1 L1051.1,652.8 L1044.3,662.3 L1037.1,671.5 L1029.5,680.3 L1021.6,688.9 L1013.4,697.1 L1004.9,704.9 L996.1,712.4 L986.9,719.6 L977.5,726.3 L967.9,732.7 L957.9,738.7 L947.8,744.2 L937.4,749.4 L926.9,754.1 L916.1,758.4 L905.2,762.2 L894.2,765.6 L883,768.6 L871.6,771.1 L860.2,773.1 L848.7,774.7 L837.2,775.8 L825.6,776.5 L814,776.6 L802.3,776.4 L790.7,775.6 L779.1,774.4 L767.5,772.7 L756,770.5 L744.6,767.9 L733.3,764.9 L722.1,761.4 L711,757.4 L700.1,753 L689.3,748.2 L678.7,743 L668.3,737.3 L658.2,731.3 L648.2,724.8 L638.6,718 L629.1,710.7 L620,703.1 L611.1,695.2 L602.5,686.9 L594.3,678.3 L586.4,669.4 L578.8,660.1 L571.6,650.6 L564.7,640.8 L558.2,630.8 L552.1,620.5 L546.4,610 L541.1,599.2 L536.2,588.3 L531.8,577.2 L527.7,565.9 L524.1,554.5 L520.9,543 L518.2,531.4 L515.9,519.7 L514.1,507.9 L512.7,496 L511.7,484.1 L511.3,472.2 L511.2,460.3 L511.7,448.5 L512.6,436.6 L513.9,424.8 L515.7,413.1 L518,401.5 L520.7,390 L523.8,378.7 L527.4,367.4 L531.4,356.4 L535.8,345.5 L540.7,334.8 L545.9,324.3 L551.6,314.1 L557.7,304.1 L564.1,294.4 L570.9,284.9 L578.1,275.7 L585.7,266.9 L593.6,258.3 L601.8,250.1 L610.3,242.3 L619.1,234.8 L628.3,227.6 L637.7,220.9 L647.3,214.5 L657.3,208.5 L667.4,203 L677.8,197.8 L688.3,193.1 L699.1,188.8 L710,185 L721,181.6 L732.2,178.6 L743.6,176.1 L755,174.1 L766.5,172.5 L778,171.4 L789.6,170.7 L801.2,170.6 L812.9,170.8 L824.5,171.6 L836.1,172.8 L847.7,174.5 L859.2,176.7 L870.6,179.3 L881.9,182.3 L893.1,185.8 L904.2,189.8 L915.1,194.2 L925.9,199 L936.5,204.2 L946.9,209.9 L957,215.9 L967,222.4 L976.6,229.2 L986.1,236.5 L995.2,244.1 L1004.1,252 L1012.7,260.3 L1020.9,268.9 L1028.8,277.8 L1036.4,287.1 L1043.6,296.6 L1050.5,306.4 L1057,316.4 L1063.1,326.7 L1068.8,337.2 L1074.1,348 L1079,358.9 L1083.4,370 L1087.5,381.3 L1091.1,392.7 L1094.3,404.2 L1097,415.8 L1099.3,427.5ZM1036.1,446.9 L1036.3,449.1 L1036.7,450.4 L1037.4,451.6 L1038.4,452.5 L1039.5,453.1 L1042.6,454.2 L1048.6,456.6 L1054.5,459.5 L1060.4,462.7 L1066.3,466.4 L1072.2,470.3 L1072.2,472.3 L1072.3,474.3 L1072.3,476.3 L1066.7,480.3 L1061,483.9 L1055.2,487.2 L1049.5,490 L1043.7,492.5 L1040.6,493.6 L1039.5,494.2 L1038.5,495.1 L1037.9,496.3 L1037.6,497.6 L1037.5,499.8 L1037.3,501.9 L1037.3,503.3 L1037.7,504.6 L1038.5,505.7 L1039.5,506.5 L1042.3,508.3 L1047.6,512 L1052.8,516.1 L1057.9,520.6 L1062.9,525.5 L1067.8,530.6 L1067.4,532.6 L1067,534.5 L1066.6,536.4 L1060.2,539 L1053.9,541.2 L1047.5,543.1 L1041.2,544.6 L1035,545.6 L1031.8,546 L1030.5,546.3 L1029.4,547 L1028.5,548 L1028,549.2 L1027.3,551.3 L1026.7,553.3 L1026.4,554.6 L1026.6,556 L1027.1,557.2 L1027.9,558.3 L1030.3,560.6 L1034.6,565.4 L1038.8,570.6 L1042.8,576.1 L1046.7,582 L1050.3,588.1 L1049.6,589.9 L1048.8,591.7 L1048,593.5 L1041.1,594.5 L1034.4,595.2 L1027.7,595.5 L1021.3,595.5 L1014.9,595.2 L1011.7,594.8 L1010.4,594.8 L1009.1,595.2 L1008.1,596 L1007.3,597 L1006.2,598.9 L1005.1,600.7 L1004.6,601.9 L1004.4,603.3 L1004.6,604.6 L1005.2,605.8 L1007,608.6 L1010.3,614.3 L1013.2,620.2 L1016,626.5 L1018.5,633 L1020.7,639.8 L1019.6,641.4 L1018.4,642.9 L1017.2,644.5 L1010.3,643.9 L1003.5,643.1 L996.9,641.9 L990.6,640.4 L984.4,638.6 L981.4,637.5 L980.1,637.2 L978.8,637.3 L977.6,637.8 L976.5,638.6 L975.1,640.2 L973.6,641.7 L972.8,642.8 L972.4,644.1 L972.3,645.4 L972.6,646.7 L973.8,649.8 L975.7,656 L977.3,662.5 L978.7,669.2 L979.7,676.1 L980.4,683.2 L979,684.4 L977.5,685.7 L976,686.9 L969.3,684.8 L962.8,682.4 L956.7,679.8 L950.7,676.9 L945.1,673.7 L942.3,672 L941.1,671.4 L939.8,671.2 L938.5,671.4 L937.4,672 L935.6,673.2 L933.8,674.3 L932.8,675.2 L932.1,676.3 L931.7,677.6 L931.7,678.9 L932.2,682.2 L932.8,688.7 L932.9,695.3 L932.8,702.1 L932.3,709 L931.5,716 L929.7,716.9 L928,717.8 L926.3,718.6 L920.2,715.1 L914.4,711.3 L908.9,707.3 L903.7,703.2 L898.9,698.9 L896.6,696.5 L895.5,695.7 L894.3,695.2 L892.9,695.1 L891.7,695.4 L889.7,696.1 L887.6,696.8 L886.5,697.5 L885.5,698.4 L884.9,699.5 L884.6,700.8 L884.4,704.1 L883.5,710.5 L882.3,717 L880.6,723.5 L878.6,730.1 L876.3,736.8 L874.4,737.2 L872.5,737.7 L870.7,738.1 L865.5,733.2 L860.6,728.3 L856,723.2 L851.9,718 L848.1,712.7 L846.3,709.9 L845.4,708.8 L844.3,708.1 L843.1,707.7 L841.8,707.7 L839.6,707.9 L837.5,708.2 L836.2,708.5 L835.1,709.2 L834.2,710.2 L833.7,711.4 L832.7,714.5 L830.5,720.5 L827.8,726.5 L824.8,732.4 L821.4,738.4 L817.7,744.3 L815.7,744.3 L813.8,744.3 L811.9,744.3 L807.8,738.4 L804.1,732.5 L800.8,726.5 L797.8,720.5 L795.2,714.5 L794.1,711.4 L793.5,710.2 L792.6,709.2 L791.4,708.5 L790.1,708.2 L788,708 L785.8,707.7 L784.5,707.8 L783.3,708.2 L782.2,708.9 L781.4,709.9 L779.8,712.8 L776.3,718.1 L772.4,723.3 L768.1,728.4 L763.5,733.4 L758.5,738.2 L756.6,737.8 L754.7,737.3 L752.8,736.9 L750.1,730.3 L747.8,723.7 L745.8,717.1 L744.2,710.7 L743,704.3 L742.6,701 L742.2,699.7 L741.6,698.5 L740.6,697.6 L739.4,697 L737.3,696.3 L735.3,695.6 L734,695.3 L732.7,695.4 L731.5,695.9 L730.4,696.7 L728.2,699.1 L723.6,703.4 L718.7,707.6 L713.4,711.5 L707.8,715.3 L701.9,718.9 L700.1,718 L698.3,717.2 L696.6,716.3 L695.4,709.3 L694.5,702.4 L694,695.6 L693.8,688.9 L694,682.5 L694.3,679.2 L694.3,677.8 L693.9,676.6 L693.1,675.4 L692.1,674.6 L690.2,673.4 L688.3,672.3 L687.1,671.7 L685.8,671.5 L684.5,671.7 L683.4,672.3 L680.7,674 L675.2,677.2 L669.5,680.1 L663.4,682.7 L657.1,685.1 L650.5,687.3 L649,686 L647.4,684.8 L645.9,683.6 L646.2,676.5 L646.9,669.6 L647.9,662.9 L649.1,656.4 L650.8,650.2 L651.8,647.1 L652,645.8 L651.9,644.4 L651.4,643.2 L650.5,642.1 L648.9,640.6 L647.4,639 L646.3,638.2 L645.1,637.7 L643.8,637.6 L642.5,637.9 L639.5,639 L633.5,640.8 L627.2,642.3 L620.7,643.5 L613.9,644.4 L607,644.9 L605.8,643.4 L604.5,641.8 L603.3,640.3 L605.2,633.5 L607.3,627 L609.7,620.7 L612.4,614.7 L615.3,609 L617,606.3 L617.5,605 L617.7,603.7 L617.5,602.4 L616.9,601.2 L615.7,599.3 L614.5,597.4 L613.6,596.4 L612.5,595.6 L611.2,595.2 L609.9,595.2 L606.7,595.6 L600.4,596 L593.9,596 L587.3,595.7 L580.5,595 L573.6,594 L572.7,592.2 L571.8,590.4 L570.9,588.6 L574.3,582.5 L577.8,576.6 L581.5,571.1 L585.4,565.9 L589.6,561.1 L591.8,558.8 L592.6,557.7 L593,556.5 L593.1,555.1 L592.8,553.8 L592,551.7 L591.2,549.7 L590.6,548.5 L589.7,547.5 L588.5,546.8 L587.3,546.5 L584,546.1 L577.8,545.1 L571.4,543.6 L564.9,541.8 L558.4,539.6 L551.9,537 L551.4,535.1 L550.9,533.2 L550.5,531.2 L555.1,526 L559.8,521.2 L564.7,516.7 L569.6,512.5 L574.7,508.8 L577.4,507 L578.4,506.2 L579.1,505.1 L579.5,503.8 L579.5,502.5 L579.1,500.3 L578.9,498.1 L578.5,496.8 L577.8,495.6 L576.8,494.7 L575.7,494.1 L572.6,493 L566.6,490.6 L560.7,487.7 L554.8,484.5 L548.9,480.8 L543,476.9 L543,474.9 L542.9,472.9 L542.9,470.9 L548.5,466.9 L554.2,463.3 L560,460 L565.7,457.2 L571.5,454.7 L574.6,453.6 L575.7,453 L576.7,452.1 L577.3,450.9 L577.6,449.6 L577.7,447.4 L577.9,445.3 L577.9,443.9 L577.5,442.6 L576.7,441.5 L575.7,440.7 L572.9,438.9 L567.6,435.2 L562.4,431.1 L557.3,426.6 L552.3,421.7 L547.4,416.6 L547.8,414.6 L548.2,412.7 L548.6,410.8 L555,408.2 L561.3,406 L567.7,404.1 L574,402.6 L580.2,401.6 L583.4,401.2 L584.7,400.9 L585.8,400.2 L586.7,399.2 L587.2,398 L587.9,395.9 L588.5,393.9 L588.8,392.6 L588.6,391.2 L588.1,390 L587.3,388.9 L584.9,386.6 L580.6,381.8 L576.4,376.6 L572.4,371.1 L568.5,365.2 L564.9,359.1 L565.6,357.3 L566.4,355.5 L567.2,353.7 L574.1,352.7 L580.8,352 L587.5,351.7 L593.9,351.7 L600.3,352 L603.5,352.4 L604.8,352.4 L606.1,352 L607.1,351.2 L607.9,350.2 L609,348.3 L610.1,346.5 L610.6,345.3 L610.8,343.9 L610.6,342.6 L610,341.4 L608.2,338.6 L604.9,332.9 L602,327 L599.2,320.7 L596.7,314.2 L594.5,307.4 L595.6,305.8 L596.8,304.3 L598,302.7 L604.9,303.3 L611.7,304.1 L618.3,305.3 L624.6,306.8 L630.8,308.6 L633.8,309.7 L635.1,310 L636.4,309.9 L637.6,309.4 L638.7,308.6 L640.1,307 L641.6,305.5 L642.4,304.4 L642.8,303.1 L642.9,301.8 L642.6,300.5 L641.4,297.4 L639.5,291.2 L637.9,284.7 L636.5,278 L635.5,271.1 L634.8,264 L636.2,262.8 L637.7,261.5 L639.2,260.3 L645.9,262.4 L652.4,264.8 L658.5,267.4 L664.5,270.3 L670.1,273.5 L672.9,275.2 L674.1,275.8 L675.4,276 L676.7,275.8 L677.8,275.2 L679.6,274 L681.4,272.9 L682.4,272 L683.1,270.9 L683.5,269.6 L683.5,268.3 L683,265 L682.4,258.5 L682.3,251.9 L682.4,245.1 L682.9,238.2 L683.7,231.2 L685.5,230.3 L687.2,229.4 L688.9,228.6 L695,232.1 L700.8,235.9 L706.3,239.9 L711.5,244 L716.3,248.3 L718.6,250.7 L719.7,251.5 L720.9,252 L722.3,252.1 L723.5,251.8 L725.5,251.1 L727.6,250.4 L728.7,249.7 L729.7,248.8 L730.3,247.7 L730.6,246.4 L730.8,243.1 L731.7,236.7 L732.9,230.2 L734.6,223.7 L736.6,217.1 L738.9,210.4 L740.8,210 L742.7,209.5 L744.5,209.1 L749.7,214 L754.6,218.9 L759.2,224 L763.3,229.2 L767.1,234.5 L768.9,237.3 L769.8,238.4 L770.9,239.1 L772.1,239.5 L773.4,239.5 L775.6,239.3 L777.7,239 L779,238.7 L780.1,238 L781,237 L781.5,235.8 L782.5,232.7 L784.7,226.7 L787.4,220.7 L790.4,214.8 L793.8,208.8 L797.5,202.9 L799.5,202.9 L801.4,202.9 L803.3,202.9 L807.4,208.8 L811.1,214.7 L814.4,220.7 L817.4,226.7 L820,232.7 L821.1,235.8 L821.7,237 L822.6,238 L823.8,238.7 L825.1,239 L827.2,239.2 L829.4,239.5 L830.7,239.4 L831.9,239 L833,238.3 L833.8,237.3 L835.4,234.4 L838.9,229.1 L842.8,223.9 L847.1,218.8 L851.7,213.8 L856.7,209 L858.6,209.4 L860.5,209.9 L862.4,210.3 L865.1,216.9 L867.4,223.5 L869.4,230.1 L871,236.5 L872.2,242.9 L872.6,246.2 L873,247.5 L873.6,248.7 L874.6,249.6 L875.8,250.2 L877.9,250.9 L879.9,251.6 L881.2,251.9 L882.5,251.8 L883.7,251.3 L884.8,250.5 L887,248.1 L891.6,243.8 L896.5,239.6 L901.8,235.7 L907.4,231.9 L913.3,228.3 L915.1,229.2 L916.9,230 L918.6,230.9 L919.8,237.9 L920.7,244.8 L921.2,251.6 L921.4,258.3 L921.2,264.7 L920.9,268 L920.9,269.4 L921.3,270.6 L922.1,271.8 L923.1,272.6 L925,273.8 L926.9,274.9 L928.1,275.5 L929.4,275.7 L930.7,275.5 L931.8,274.9 L934.5,273.2 L940,270 L945.7,267.1 L951.8,264.5 L958.1,262.1 L964.7,259.9 L966.2,261.2 L967.8,262.4 L969.3,263.6 L969,270.7 L968.3,277.6 L967.3,284.3 L966.1,290.8 L964.4,297 L963.4,300.1 L963.2,301.4 L963.3,302.8 L963.8,304 L964.7,305.1 L966.3,306.6 L967.8,308.2 L968.9,309 L970.1,309.5 L971.4,309.6 L972.7,309.3 L975.7,308.2 L981.7,306.4 L988,304.9 L994.5,303.7 L1001.3,302.8 L1008.2,302.3 L1009.4,303.8 L1010.7,305.4 L1011.9,306.9 L1010,313.7 L1007.9,320.2 L1005.5,326.5 L1002.8,332.5 L999.9,338.2 L998.2,340.9 L997.7,342.2 L997.5,343.5 L997.7,344.8 L998.3,346 L999.5,347.9 L1000.7,349.8 L1001.6,350.8 L1002.7,351.6 L1004,352 L1005.3,352 L1008.5,351.6 L1014.8,351.2 L1021.3,351.2 L1027.9,351.5 L1034.7,352.2 L1041.6,353.2 L1042.5,355 L1043.4,356.8 L1044.3,358.6 L1040.9,364.7 L1037.4,370.6 L1033.7,376.1 L1029.8,381.3 L1025.6,386.1 L1023.4,388.4 L1022.6,389.5 L1022.2,390.7 L1022.1,392.1 L1022.4,393.4 L1023.2,395.5 L1024,397.5 L1024.6,398.7 L1025.5,399.7 L1026.7,400.4 L1027.9,400.7 L1031.2,401.1 L1037.4,402.1 L1043.8,403.6 L1050.3,405.4 L1056.8,407.6 L1063.3,410.2 L1063.8,412.1 L1064.3,414 L1064.7,416 L1060.1,421.2 L1055.4,426 L1050.5,430.5 L1045.6,434.7 L1040.5,438.4 L1037.8,440.2 L1036.8,441 L1036.1,442.1 L1035.7,443.4 L1035.7,444.7Z" fill="url(#gf)" fill-rule="evenodd" stroke="#3c4043" stroke-width=".9"/>
<path d="M884.8,442.2 L885.6,444.4 L886.5,445.9 L887.8,446.9 L889.4,447.4 L891,447.2 L894.5,446.1 L900,445.7 L905.7,446.4 L911.6,448 L917.6,450.4 L923.6,453.5 L929.7,457.3 L929.9,458.6 L930.1,460 L930.2,461.4 L925.4,466.4 L920.4,470.8 L915.2,474.5 L909.9,477.4 L904.6,479.4 L899.2,480.3 L895.5,480 L893.9,480.2 L892.5,481 L891.5,482.3 L891,483.9 L890.8,486.3 L890.4,488.6 L890.5,490.3 L891.2,491.8 L892.3,493 L893.8,493.7 L897.5,494.6 L902.4,497 L907.1,500.6 L911.5,505 L915.7,510.1 L919.5,515.8 L922.9,522.1 L922.4,523.4 L921.9,524.6 L921.4,525.9 L914.7,527.7 L908.1,528.9 L901.8,529.4 L895.7,529.1 L890,528.1 L884.9,526.2 L881.7,524 L880.2,523.4 L878.6,523.3 L877,523.9 L875.9,525.1 L874.5,527 L873.1,528.8 L872.3,530.2 L872.1,531.9 L872.6,533.5 L873.6,534.9 L876.4,537.5 L879.5,542.1 L881.9,547.5 L883.6,553.5 L884.8,559.9 L885.3,566.8 L885.2,573.9 L884.2,574.7 L883.1,575.6 L882,576.4 L875.2,574.5 L868.9,572.2 L863.1,569.3 L857.9,566 L853.3,562.3 L849.8,557.9 L848.1,554.5 L847.1,553.2 L845.6,552.3 L844,552 L842.4,552.4 L840.3,553.4 L838.2,554.1 L836.8,555 L835.8,556.3 L835.4,557.9 L835.6,559.6 L836.8,563.2 L837.3,568.8 L836.7,574.6 L835.3,580.6 L833.2,586.7 L830.3,592.8 L826.7,598.9 L825.4,599 L824.1,599.2 L822.8,599.3 L817.7,594.3 L813.3,589 L809.5,583.6 L806.6,578.2 L804.4,572.6 L803.4,567.1 L803.6,563.3 L803.4,561.7 L802.5,560.2 L801.2,559.1 L799.7,558.6 L797.4,558.4 L795.1,557.9 L793.4,557.9 L791.9,558.6 L790.8,559.7 L790.1,561.3 L789.4,565 L787.1,570 L783.8,574.7 L779.6,579.1 L774.7,583.2 L769.2,586.9 L763.1,590.2 L761.9,589.7 L760.7,589.2 L759.4,588.6 L757.4,581.7 L756.1,575 L755.5,568.5 L755.5,562.3 L756.4,556.5 L758.2,551.3 L760.2,548.1 L760.8,546.6 L760.8,544.9 L760.2,543.3 L759,542.1 L757.1,540.7 L755.3,539.1 L753.9,538.3 L752.2,538.1 L750.7,538.5 L749.4,539.5 L746.9,542.3 L742.5,545.4 L737.2,547.6 L731.4,549.3 L725.1,550.3 L718.5,550.6 L711.5,550.4 L710.6,549.3 L709.8,548.2 L709,547.1 L710.6,540.1 L712.7,533.7 L715.4,527.9 L718.5,522.6 L722,518.1 L726.2,514.6 L729.5,512.9 L730.8,511.9 L731.6,510.5 L731.8,508.8 L731.4,507.2 L730.4,505 L729.6,502.8 L728.7,501.3 L727.4,500.3 L725.8,499.8 L724.2,500 L720.7,501.1 L715.2,501.5 L709.5,500.8 L703.6,499.2 L697.6,496.8 L691.6,493.7 L685.5,489.9 L685.3,488.6 L685.1,487.2 L685,485.8 L689.8,480.8 L694.8,476.4 L700,472.7 L705.3,469.8 L710.6,467.8 L716,466.9 L719.7,467.2 L721.3,467 L722.7,466.2 L723.7,464.9 L724.2,463.3 L724.4,460.9 L724.8,458.6 L724.7,456.9 L724,455.4 L722.9,454.2 L721.4,453.5 L717.7,452.6 L712.8,450.2 L708.1,446.6 L703.7,442.2 L699.5,437.1 L695.7,431.4 L692.3,425.1 L692.8,423.8 L693.3,422.6 L693.8,421.3 L700.5,419.5 L707.1,418.3 L713.4,417.8 L719.5,418.1 L725.2,419.1 L730.3,421 L733.5,423.2 L735,423.8 L736.6,423.9 L738.2,423.3 L739.3,422.1 L740.7,420.2 L742.1,418.4 L742.9,417 L743.1,415.3 L742.6,413.7 L741.6,412.3 L738.8,409.7 L735.7,405.1 L733.3,399.7 L731.6,393.7 L730.4,387.3 L729.9,380.4 L730,373.3 L731,372.5 L732.1,371.6 L733.2,370.8 L740,372.7 L746.3,375 L752.1,377.9 L757.3,381.2 L761.9,384.9 L765.4,389.3 L767.1,392.7 L768.1,394 L769.6,394.9 L771.2,395.2 L772.8,394.8 L774.9,393.8 L777,393.1 L778.4,392.2 L779.4,390.9 L779.8,389.3 L779.6,387.6 L778.4,384 L777.9,378.4 L778.5,372.6 L779.9,366.6 L782,360.5 L784.9,354.4 L788.5,348.3 L789.8,348.2 L791.1,348 L792.4,347.9 L797.5,352.9 L801.9,358.2 L805.7,363.6 L808.6,369 L810.8,374.6 L811.8,380.1 L811.6,383.9 L811.8,385.5 L812.7,387 L814,388.1 L815.5,388.6 L817.8,388.8 L820.1,389.3 L821.8,389.3 L823.3,388.6 L824.4,387.5 L825.1,385.9 L825.8,382.2 L828.1,377.2 L831.4,372.5 L835.6,368.1 L840.5,364 L846,360.3 L852.1,357 L853.3,357.5 L854.5,358 L855.8,358.6 L857.8,365.5 L859.1,372.2 L859.7,378.7 L859.7,384.9 L858.8,390.7 L857,395.9 L855,399.1 L854.4,400.6 L854.4,402.3 L855,403.9 L856.2,405.1 L858.1,406.5 L859.9,408.1 L861.3,408.9 L863,409.1 L864.5,408.7 L865.8,407.7 L868.3,404.9 L872.7,401.8 L878,399.6 L883.8,397.9 L890.1,396.9 L896.7,396.6 L903.7,396.8 L904.6,397.9 L905.4,399 L906.2,400.1 L904.6,407.1 L902.5,413.5 L899.8,419.3 L896.7,424.6 L893.2,429.1 L889,432.6 L885.7,434.3 L884.4,435.3 L883.6,436.7 L883.4,438.4 L883.8,440Z" fill="url(#gf)" stroke="#3c4043" stroke-width=".9"/>
<path d="M680.9,488.4 L681,491.1 L681.5,492.8 L682.5,494.2 L683.9,495.2 L685.6,495.6 L693.9,495.8 L698.4,497.2 L702.9,499.7 L707.2,503.1 L711.3,507.2 L715.1,512.1 L718.6,517.6 L718.3,518.5 L718.1,519.3 L717.9,520.2 L712.3,523 L706.7,525.2 L701.2,526.5 L695.9,527.1 L690.9,526.8 L686.4,525.6 L679.1,521.3 L677.4,520.7 L675.7,520.8 L674.2,521.5 L673,522.7 L671.6,524.9 L669.8,526.9 L669,528.4 L668.7,530.1 L669.1,531.8 L670,533.3 L675.9,539.5 L678.2,543.7 L679.7,548.6 L680.5,554 L680.6,559.8 L680,566 L678.7,572.3 L677.9,572.7 L677.2,573.1 L676.4,573.6 L670.4,571.5 L664.9,568.9 L659.9,565.9 L655.7,562.4 L652.2,558.6 L649.8,554.5 L647.5,546.3 L646.7,544.7 L645.4,543.5 L643.8,542.8 L642.1,542.8 L639.5,543.3 L636.9,543.4 L635.3,543.8 L633.9,544.8 L632.9,546.3 L632.6,548 L632.6,556.5 L631.4,561.1 L629,565.5 L625.8,569.8 L621.9,573.9 L617.2,577.7 L611.9,581.1 L611.1,580.8 L610.3,580.6 L609.4,580.4 L606.5,574.5 L604.2,568.8 L602.8,563.1 L602.1,557.7 L602.2,552.6 L603.3,548 L607.3,540.6 L607.8,539 L607.7,537.2 L607,535.6 L605.8,534.3 L603.6,532.8 L601.6,531 L600.1,530.1 L598.4,529.8 L596.7,530.1 L595.3,531.1 L589.4,536.9 L585.4,539.2 L580.6,540.5 L575.3,541.2 L569.6,541.2 L563.6,540.4 L557.4,538.9 L557,538.1 L556.5,537.3 L556.1,536.6 L558,530.4 L560.4,524.8 L563.2,519.9 L566.5,515.6 L570.1,512.2 L574.1,509.8 L582,507.7 L583.6,506.9 L584.7,505.6 L585.3,504 L585.3,502.2 L584.7,499.6 L584.6,496.9 L584.1,495.2 L583.1,493.8 L581.7,492.8 L580,492.4 L571.7,492.2 L567.2,490.8 L562.7,488.3 L558.4,484.9 L554.3,480.8 L550.5,475.9 L547,470.4 L547.3,469.5 L547.5,468.7 L547.7,467.8 L553.3,465 L558.9,462.8 L564.4,461.5 L569.7,460.9 L574.7,461.2 L579.2,462.4 L586.5,466.7 L588.2,467.3 L589.9,467.2 L591.4,466.5 L592.6,465.3 L594,463.1 L595.8,461.1 L596.6,459.6 L596.9,457.9 L596.5,456.2 L595.6,454.7 L589.7,448.5 L587.4,444.3 L585.9,439.4 L585.1,434 L585,428.2 L585.6,422 L586.9,415.7 L587.7,415.3 L588.4,414.9 L589.2,414.4 L595.2,416.5 L600.7,419.1 L605.7,422.1 L609.9,425.6 L613.4,429.4 L615.8,433.5 L618.1,441.7 L618.9,443.3 L620.2,444.5 L621.8,445.2 L623.5,445.2 L626.1,444.7 L628.7,444.6 L630.3,444.2 L631.7,443.2 L632.7,441.7 L633,440 L633,431.5 L634.2,426.9 L636.6,422.5 L639.8,418.2 L643.7,414.1 L648.4,410.3 L653.7,406.9 L654.5,407.2 L655.3,407.4 L656.2,407.6 L659.1,413.5 L661.4,419.2 L662.8,424.9 L663.5,430.3 L663.4,435.4 L662.3,440 L658.3,447.4 L657.8,449 L657.9,450.8 L658.6,452.4 L659.8,453.7 L662,455.2 L664,457 L665.5,457.9 L667.2,458.2 L668.9,457.9 L670.3,456.9 L676.2,451.1 L680.2,448.8 L685,447.5 L690.3,446.8 L696,446.8 L702,447.6 L708.2,449.1 L708.6,449.9 L709.1,450.7 L709.5,451.4 L707.6,457.6 L705.2,463.2 L702.4,468.1 L699.1,472.4 L695.5,475.8 L691.5,478.2 L683.6,480.3 L682,481.1 L680.9,482.4 L680.3,484 L680.3,485.8Z" fill="url(#gf)" stroke="#3c4043" stroke-width=".9"/>
<path d="M853,286.1 L853.6,292.4 L853.7,298.7 L853.2,305 L852.2,311.2 L850.6,317.2 L848.6,323.1 L846,328.8 L843,334.1 L839.5,339.2 L835.6,344 L831.2,348.4 L826.5,352.3 L821.5,355.9 L816.2,358.9 L810.7,361.5 L804.9,363.5 L799,365 L792.9,366 L786.8,366.5 L780.6,366.3 L774.5,365.7 L768.4,364.5 L762.4,362.7 L756.6,360.5 L751,357.7 L745.7,354.5 L740.6,350.8 L735.8,346.7 L731.4,342.1 L727.4,337.2 L723.9,332 L720.7,326.5 L718.1,320.7 L715.9,314.8 L714.3,308.7 L713.2,302.5 L712.6,296.2 L712.5,289.9 L713,283.6 L714,277.4 L715.6,271.4 L717.6,265.5 L720.2,259.8 L723.2,254.5 L726.7,249.4 L730.6,244.6 L735,240.2 L739.7,236.3 L744.7,232.7 L750,229.7 L755.5,227.1 L761.3,225.1 L767.2,223.6 L773.3,222.6 L779.4,222.1 L785.6,222.3 L791.7,222.9 L797.8,224.1 L803.8,225.9 L809.6,228.1 L815.2,230.9 L820.5,234.1 L825.6,237.8 L830.4,241.9 L834.8,246.5 L838.8,251.4 L842.3,256.6 L845.5,262.1 L848.1,267.9 L850.3,273.8 L851.9,279.9ZM1052.3,445 L1052.9,451.3 L1053,457.6 L1052.5,463.9 L1051.5,470.1 L1049.9,476.1 L1047.9,482 L1045.3,487.7 L1042.3,493 L1038.8,498.1 L1034.9,502.9 L1030.5,507.3 L1025.8,511.2 L1020.8,514.8 L1015.5,517.8 L1010,520.4 L1004.2,522.4 L998.3,523.9 L992.2,524.9 L986.1,525.4 L979.9,525.2 L973.8,524.6 L967.7,523.4 L961.7,521.6 L955.9,519.4 L950.3,516.6 L945,513.4 L939.9,509.7 L935.1,505.6 L930.7,501 L926.7,496.1 L923.2,490.9 L920,485.4 L917.4,479.6 L915.2,473.7 L913.6,467.6 L912.5,461.4 L911.9,455.1 L911.8,448.8 L912.3,442.5 L913.3,436.3 L914.9,430.3 L916.9,424.4 L919.5,418.7 L922.5,413.4 L926,408.3 L929.9,403.5 L934.3,399.1 L939,395.2 L944,391.6 L949.3,388.6 L954.8,386 L960.6,384 L966.5,382.5 L972.6,381.5 L978.7,381 L984.9,381.2 L991,381.8 L997.1,383 L1003.1,384.8 L1008.9,387 L1014.5,389.8 L1019.8,393 L1024.9,396.7 L1029.7,400.8 L1034.1,405.4 L1038.1,410.3 L1041.6,415.5 L1044.8,421 L1047.4,426.8 L1049.6,432.7 L1051.2,438.8ZM902,644.7 L902.6,651 L902.7,657.3 L902.2,663.6 L901.2,669.8 L899.6,675.8 L897.6,681.7 L895,687.4 L892,692.7 L888.5,697.8 L884.6,702.6 L880.2,707 L875.5,710.9 L870.5,714.5 L865.2,717.5 L859.7,720.1 L853.9,722.1 L848,723.6 L841.9,724.6 L835.8,725.1 L829.6,724.9 L823.5,724.3 L817.4,723.1 L811.4,721.3 L805.6,719.1 L800,716.3 L794.7,713.1 L789.6,709.4 L784.8,705.3 L780.4,700.7 L776.4,695.8 L772.9,690.6 L769.7,685.1 L767.1,679.3 L764.9,673.4 L763.3,667.3 L762.2,661.1 L761.6,654.8 L761.5,648.5 L762,642.2 L763,636 L764.6,630 L766.6,624.1 L769.2,618.4 L772.2,613.1 L775.7,608 L779.6,603.2 L784,598.8 L788.7,594.9 L793.7,591.3 L799,588.3 L804.5,585.7 L810.3,583.7 L816.2,582.2 L822.3,581.2 L828.4,580.7 L834.6,580.9 L840.7,581.5 L846.8,582.7 L852.8,584.5 L858.6,586.7 L864.2,589.5 L869.5,592.7 L874.6,596.4 L879.4,600.5 L883.8,605.1 L887.8,610 L891.3,615.2 L894.5,620.7 L897.1,626.5 L899.3,632.4 L900.9,638.5ZM702.7,485.8 L703.3,492.1 L703.4,498.4 L702.9,504.7 L701.9,510.9 L700.3,516.9 L698.3,522.8 L695.7,528.5 L692.7,533.8 L689.2,538.9 L685.3,543.7 L680.9,548.1 L676.2,552 L671.2,555.6 L665.9,558.6 L660.4,561.2 L654.6,563.2 L648.7,564.7 L642.6,565.7 L636.5,566.2 L630.3,566 L624.2,565.4 L618.1,564.2 L612.1,562.4 L606.3,560.2 L600.7,557.4 L595.4,554.2 L590.3,550.5 L585.5,546.4 L581.1,541.8 L577.1,536.9 L573.6,531.7 L570.4,526.2 L567.8,520.4 L565.6,514.5 L564,508.4 L562.9,502.2 L562.3,495.9 L562.2,489.6 L562.7,483.3 L563.7,477.1 L565.3,471.1 L567.3,465.2 L569.9,459.5 L572.9,454.2 L576.4,449.1 L580.3,444.3 L584.7,439.9 L589.4,436 L594.4,432.4 L599.7,429.4 L605.2,426.8 L611,424.8 L616.9,423.3 L623,422.3 L629.1,421.8 L635.3,422 L641.4,422.6 L647.5,423.8 L653.5,425.6 L659.3,427.8 L664.9,430.6 L670.2,433.8 L675.3,437.5 L680.1,441.6 L684.5,446.2 L688.5,451.1 L692,456.3 L695.2,461.8 L697.8,467.6 L700,473.5 L701.6,479.6ZM1052.3,445 L1053.8,458.2 L1054.6,471.4 L1054.7,484.7 L1054.1,497.9 L1052.9,511 L1050.9,524 L1048.4,536.9 L1045.1,549.6 L1041.2,562.1 L1036.7,574.4 L1031.5,586.4 L1025.7,598 L1019.4,609.4 L1012.4,620.3 L1004.9,630.9 L996.8,641 L988.3,650.7 L979.2,659.9 L969.7,668.6 L959.7,676.7 L949.3,684.3 L938.5,691.3 L927.3,697.7 L915.8,703.5 L904.1,708.7 L892,713.2 L879.8,717.1 L867.3,720.3 L854.7,722.8 L841.9,724.6 L829,725.8 L816.1,726.2 L803.2,726 L790.3,725.1 L777.4,723.5 L764.6,721.2 L751.9,718.2 L739.4,714.5 L727.1,710.2 L714.9,705.3 L703.1,699.7 L691.5,693.5 L680.2,686.7 L669.3,679.3 L658.8,671.3 L648.7,662.8 L639,653.8 L629.8,644.3 L621,634.3 L612.8,623.8 L605.1,613 L598,601.8 L591.4,590.2 L585.5,578.3 L580.1,566.2 L575.4,553.7 L571.3,541.1 L567.8,528.2 L565,515.3 L562.9,502.2 L561.4,489 L560.6,475.8 L560.5,462.5 L561.1,449.3 L562.3,436.2 L564.3,423.2 L566.8,410.3 L570.1,397.6 L574,385.1 L578.5,372.8 L583.7,360.8 L589.5,349.2 L595.8,337.8 L602.8,326.9 L610.3,316.3 L618.4,306.2 L626.9,296.5 L636,287.3 L645.5,278.6 L655.5,270.5 L665.9,262.9 L676.7,255.9 L687.9,249.5 L699.4,243.7 L711.1,238.5 L723.2,234 L735.4,230.1 L747.9,226.9 L760.5,224.4 L773.3,222.6 L786.2,221.4 L799.1,221 L812,221.2 L824.9,222.1 L837.8,223.7 L850.6,226 L863.3,229 L875.8,232.7 L888.1,237 L900.3,241.9 L912.1,247.5 L923.7,253.7 L935,260.5 L945.9,267.9 L956.4,275.9 L966.5,284.4 L976.2,293.4 L985.4,302.9 L994.2,312.9 L1002.4,323.4 L1010.1,334.2 L1017.2,345.4 L1023.8,357 L1029.7,368.9 L1035.1,381 L1039.8,393.5 L1043.9,406.1 L1047.4,419 L1050.2,431.9ZM912.5,461.4 L913.4,470.8 L913.4,480.2 L912.7,489.6 L911.2,498.9 L908.9,508 L905.8,516.8 L901.9,525.3 L897.4,533.4 L892.2,541 L886.3,548.1 L879.8,554.7 L872.8,560.6 L865.2,565.9 L857.3,570.5 L848.9,574.3 L840.3,577.4 L831.4,579.7 L822.3,581.2 L813.1,581.8 L803.9,581.7 L794.7,580.7 L785.5,578.9 L776.6,576.3 L767.9,572.9 L759.5,568.7 L751.4,563.9 L743.8,558.3 L736.7,552.1 L730.1,545.3 L724.1,538 L718.8,530.2 L714.1,521.9 L710.1,513.3 L706.9,504.3 L704.4,495.2 L702.7,485.8 L701.8,476.4 L701.8,467 L702.5,457.6 L704,448.3 L706.3,439.2 L709.4,430.4 L713.3,421.9 L717.8,413.8 L723,406.2 L728.9,399.1 L735.4,392.5 L742.4,386.6 L750,381.3 L757.9,376.7 L766.3,372.9 L774.9,369.8 L783.8,367.5 L792.9,366 L802.1,365.4 L811.3,365.5 L820.5,366.5 L829.7,368.3 L838.6,370.9 L847.3,374.3 L855.7,378.5 L863.8,383.3 L871.4,388.9 L878.5,395.1 L885.1,401.9 L891.1,409.2 L896.4,417 L901.1,425.3 L905.1,433.9 L908.3,442.9 L910.8,452Z" stroke="#7f8894" stroke-width=".8" stroke-dasharray="20 4 3 4" opacity=".3"/>
<circle cx="807.6" cy="473.6" r="4" fill="#fff" stroke="#000" stroke-width="1.600"/><circle cx="807.6" cy="473.6" r="1.500" fill="#000"/>
<circle cx="632.8" cy="494" r="1.800" fill="#858c96" opacity=".6"/>
</svg>
<div style="left:434px;top:151px;width:571.5px;height:81.5px;background:#d9ebf7;border:1px solid #bcdff1;border-radius:4px;"></div>
<span class="t" style="left:445.30px;top:157.65px;font-size:14px;color:#31628c;letter-spacing:-0.16px;">Reduction if Carrier is held constant and Sun is used as input: -0.42857142857142855</span>
<span class="t" style="left:445.30px;top:175.65px;font-size:14px;color:#31628c;letter-spacing:-0.14px;">Reduction if Ring is held constant and Carrier is used as input: 3.3333333333333335</span>
<span class="t" style="left:445.30px;top:193.65px;font-size:14px;color:#31628c;letter-spacing:-0.21px;">Reduction if Ring is held constant and Sun is used as input: 0.3</span>
<span class="t" style="left:445.30px;top:211.65px;font-size:14px;color:#31628c;letter-spacing:-0.18px;">Reduction if Sun is held constant and Carrier is used as input: 1.4285714285714286</span>
<svg style="left:989px;top:158px" width="12" height="12" viewBox="0 0 12 12"><path d="M2,2 l8,8 m0,-8 l-8,8" stroke="#5f8fb8" stroke-width="1.500" fill="none"/></svg>
<div style="left:1407px;top:431px;width:36px;height:35px;background:#fff;border:1px solid #ccc;"></div>
<svg style="left:1411px;top:436px" width="26" height="26" viewBox="0 0 26 26" fill="none"><path d="M9.500,9 L15,6.500 L22.500,9.500 V18 L16.500,22 L9.500,18.500Z" fill="#fff" stroke="#333" stroke-width="1.100" stroke-linejoin="round"/><path d="M9.500,9 L16.500,12.500 L22.500,9.500 M16.500,12.500 V22" stroke="#333" stroke-width="1.100"/><rect x="2" y="2.500" width="10.500" height="8" fill="#2f3fd0"/><path d="M2,5.200 h10.500 M2,7.900 h10.500 M5.500,2.500 v8 M9,2.500 v8" stroke="#fff" stroke-width=".8"/></svg>
<svg style="left:1270px;top:150px" width="170" height="170" viewBox="1270 150 170 170" fill="none"><path d="M1342.400,166.500 h14.800 l-7.400,-9.200z" fill="#dde2ec"/><path d="M1342.600,297 h14.800 l-7.400,9.600z" fill="#dde2ec"/><path d="M1285,224.600 v14.600 l-9.700,-7.300z" fill="#dde2ec"/><path d="M1415,224.600 v14.600 l9.700,-7.300z" fill="#dde2ec"/><path d="M1329.500,167.500 C1316,172 1306,179 1301,187" stroke="#dde2ec" stroke-width="5"/><path d="M1296,191 l1.500,-13 l10,8.500z" fill="#dde2ec"/><path d="M1371,167.500 C1384.500,172 1394.500,179 1399.500,187" stroke="#dde2ec" stroke-width="5"/><path d="M1404.500,191 l-1.500,-13 l-10,8.500z" fill="#dde2ec"/><path d="M1314,209 C1312.500,207 1315,205.500 1318,205 L1368,199.500 C1372,199 1381,201.500 1383.500,205 C1386,215 1389,240 1390,252 C1390.500,256 1388,257.500 1385,258 L1326,266 C1321,266.500 1318.500,264.500 1318,261 C1316,245 1314.500,225 1314,209Z" fill="#dde2ec"/><path d="M1327,215 C1332,212.500 1352,210.500 1360,210 C1365,210 1366.500,212.500 1367,216 L1370,246 C1370.500,251 1368,253.500 1363,254.500 C1352,256.500 1340,258 1331,258.500 C1326,258.500 1323.500,256 1323,251 C1322,242 1321.500,230 1321.500,222 C1321.500,218 1323.500,216 1327,215Z" fill="#fff"/><path d="M1372.500,214 C1374,208.500 1381.500,208 1383,214 C1385,224 1386.500,236 1387,246 C1387,251.500 1379,253.500 1377,248 C1375,238 1373.500,226 1372.500,214Z" fill="#fff"/><ellipse cx="1318.500" cy="213" rx="3.500" ry="5.500" transform="rotate(20 1318.500 213)" fill="#fff"/><ellipse cx="1364.500" cy="206.500" rx="5" ry="4" fill="#fff"/><ellipse cx="1371" cy="253" rx="4.500" ry="3" fill="#fff"/><ellipse cx="1381" cy="204.500" rx="4" ry="2.500" transform="rotate(25 1381 204.500)" fill="#fff"/><path d="M1337,203.500 L1353,202" stroke="#888" stroke-width=".7"/><path d="M1382.600,197.300 L1390.300,255.200" stroke="#6a35f0" stroke-width="1.600"/><path d="M1390.300,255.200 L1376.500,261.500" stroke="#1fc01f" stroke-width="1.500"/><path d="M1390.300,255.200 L1333.500,261.700" stroke="#f08a92" stroke-width="1"/><text x="1343" y="239.500" font-family="Liberation Sans, sans-serif" font-size="11.500" fill="#222" text-anchor="middle" transform="rotate(-5 1343 235)">Back</text><text x="0" y="0" font-family="Liberation Sans, sans-serif" font-size="8" fill="#333" text-anchor="middle" transform="translate(1379.500,232) rotate(-80) scale(1,.45)">Left</text><text x="1375.500" y="192" font-family="Liberation Sans, sans-serif" font-size="12" font-weight="700" fill="#5a3de0">Z</text><text x="1371" y="267.500" font-family="Liberation Sans, sans-serif" font-size="11" font-weight="700" fill="#1fc01f">Y</text><text x="1320.500" y="268" font-family="Liberation Sans, sans-serif" font-size="10" fill="#ee3344">X</text><path d="M1387,292.500 L1396,289 L1404.500,292.500 V302.500 L1396,307 L1387,302.500Z" fill="#e4e4e4" stroke="#555" stroke-width="1" stroke-linejoin="round"/><path d="M1387,292.500 L1396,296 V307 L1387,302.500Z" fill="#c9c9c9"/><path d="M1396,296 L1404.500,292.500 V302.500 L1396,307Z" fill="#9f9f9f"/><path d="M1387,292.500 L1396,296 L1404.500,292.500 M1396,296 V307" stroke="#555" stroke-width=".7"/><path d="M1411.500,296 h8.500 l-4.250,4.200z" fill="#222"/></svg>
<div style="left:279px;top:142px;width:4px;height:647px;background:linear-gradient(90deg,rgba(0,0,0,.2),rgba(0,0,0,.05) 45%,rgba(0,0,0,0));"></div>
<div style="left:0px;top:142px;width:279px;height:647px;background:#fff;"></div>
<div style="left:269px;top:206px;width:7px;height:417px;background:#f3f4fa;"></div>
<div style="left:269px;top:628px;width:7px;height:133px;background:#f3f4fa;"></div>
<div style="left:269.3px;top:631px;width:6.5px;height:87px;background:#ccd5e4;border-radius:2px;"></div>
<div style="left:6px;top:623.5px;width:273px;height:3.5px;background:#cdd8e8;"></div>
<span class="t" style="left:10.30px;top:153.15px;font-size:14px;color:#222;letter-spacing:-0.52px;">Features (182)</span>
<div style="left:10px;top:178.5px;width:230px;height:26px;border:1px solid #999;background:#fff;"></div>
<span class="t" style="left:13.30px;top:184.65px;font-size:14px;color:#aaa;font-style:italic;letter-spacing:-0.56px;">Filter by name or type</span>
<span class="t" style="left:26.30px;top:209.35px;font-size:14px;color:#222;letter-spacing:-0.49px;">Default geometry</span>
<span class="t" style="left:55.30px;top:236.15px;font-size:14px;color:#222;letter-spacing:-0.66px;">Origin</span>
<span class="t" style="left:55.80px;top:262.15px;font-size:14px;color:#aaa;letter-spacing:-0.36px;">Top</span>
<span class="t" style="left:55.50px;top:288.15px;font-size:14px;color:#aaa;letter-spacing:-0.64px;">Front</span>
<span class="t" style="left:55.50px;top:314.15px;font-size:14px;color:#aaa;letter-spacing:-0.74px;">Right</span>
<span class="t" style="left:35.50px;top:340.15px;font-size:14px;color:#aaa;letter-spacing:-0.64px;">Sketch 28</span>
<div style="left:6px;top:361px;width:274px;height:24px;background:#b5d6f7;"></div>
<svg style="left:0;top:142px" width="280" height="647" viewBox="0 142 280 647" fill="none"><path d="M11,213 l5,5 l5,-5" stroke="#333" stroke-width="1.800" fill="none"/><path d="M11,638.5 l5,5 l5,-5" stroke="#333" stroke-width="1.800" fill="none"/><circle cx="39.500" cy="242.700" r="3.400" stroke="#888" stroke-width="1"/><circle cx="39.500" cy="242.700" r="1.400" fill="#777"/><path d="M33.500,262.5 L45.500,263.5 V274 L33.500,273Z" fill="#dcdcdc" stroke="#c4c4c4" stroke-width="1"/><path d="M33.500,268.2 H40.500 V263" stroke="#eee" stroke-width="1"/><path d="M33.500,288.5 L45.500,289.5 V300 L33.500,299Z" fill="#dcdcdc" stroke="#c4c4c4" stroke-width="1"/><path d="M33.500,294.2 H40.500 V289" stroke="#eee" stroke-width="1"/><path d="M33.500,314.5 L45.500,315.5 V326 L33.500,325Z" fill="#dcdcdc" stroke="#c4c4c4" stroke-width="1"/><path d="M33.500,320.2 H40.500 V315" stroke="#eee" stroke-width="1"/><path d="M13.500,353.3 H26" stroke="#9a9a9a" stroke-width="1.200"/><path d="M15.500,350.3 L23.500,341.3 L25.500,343.3 L17.800,351.8 L14.300,352.8Z" stroke="#9a9a9a" stroke-width="1.100" fill="#fff"/><path d="M13.500,405.3 H26" stroke="#a8a8a8" stroke-width="1.200"/><path d="M15.500,402.3 L23.500,393.3 L25.500,395.3 L17.800,403.8 L14.300,404.8Z" stroke="#a8a8a8" stroke-width="1.100" fill="#fff"/><path d="M13.500,457.3 H26" stroke="#a8a8a8" stroke-width="1.200"/><path d="M15.500,454.3 L23.500,445.3 L25.500,447.3 L17.800,455.8 L14.300,456.8Z" stroke="#a8a8a8" stroke-width="1.100" fill="#fff"/><path d="M13.500,535.3 H26" stroke="#a8a8a8" stroke-width="1.200"/><path d="M15.500,532.3 L23.500,523.3 L25.500,525.3 L17.800,533.8 L14.300,534.8Z" stroke="#a8a8a8" stroke-width="1.100" fill="#fff"/><path d="M13.500,613.3 H26" stroke="#a8a8a8" stroke-width="1.200"/><path d="M15.500,610.3 L23.500,601.3 L25.500,603.3 L17.800,611.8 L14.300,612.8Z" stroke="#a8a8a8" stroke-width="1.100" fill="#fff"/><path d="M13,424 C13,420 15.500,417.5 19.500,417.5 H25 L27,419.5 V432 H15 L13,430Z" fill="#fff" stroke="#a8a8a8" stroke-width="1.200"/><path d="M13,424 C13,420 15.500,417.5 19.500,417.5 L21.500,419.5 C18,419.5 15.200,422 15,426Z" fill="#c8c8c8" stroke="#a8a8a8" stroke-width=".6"/><path d="M15,426 V432" stroke="#a8a8a8" stroke-width=".8"/><path d="M13,471.5 L15,469.5 H25 L27,471.5 V484 H15 L13,482Z" fill="#fff" stroke="#a8a8a8" stroke-width="1.200"/><path d="M13,471.5 L15,473.5 V484 M15,473.5 H27" stroke="#a8a8a8" stroke-width=".8"/><path d="M18,476 L19.500,475 H26.500 V483.5 H19.500 L18,482.5Z" fill="#c4c4c4" stroke="#a8a8a8" stroke-width=".7"/><path d="M13,501.5 L19,495.5 H25 L27,497.5 V510 H15 L13,508Z" fill="#fff" stroke="#a8a8a8" stroke-width="1.200"/><path d="M13,501.5 L19,495.5 L21,497.5 L15,503.5Z" fill="#c8c8c8" stroke="#a8a8a8" stroke-width=".6"/><path d="M15,503.5 V510" stroke="#a8a8a8" stroke-width=".8"/><path d="M13,549.5 L15,547.5 H25 L27,549.5 V562 H15 L13,560Z" fill="#fff" stroke="#a8a8a8" stroke-width="1.200"/><path d="M13,549.5 L15,551.5 V562 M15,551.5 H27" stroke="#a8a8a8" stroke-width=".8"/><path d="M18,554 L19.500,553 H26.500 V561.5 H19.500 L18,560.5Z" fill="#c4c4c4" stroke="#a8a8a8" stroke-width=".7"/><path d="M13,580 C13,576 15.500,573.5 19.500,573.5 H25 L27,575.5 V588 H15 L13,586Z" fill="#fff" stroke="#a8a8a8" stroke-width="1.200"/><path d="M13,580 C13,576 15.500,573.5 19.500,573.5 L21.500,575.5 C18,575.5 15.200,578 15,582Z" fill="#c8c8c8" stroke="#a8a8a8" stroke-width=".6"/><path d="M15,582 V588" stroke="#a8a8a8" stroke-width=".8"/></svg>
<div style="left:12px;top:364px;width:17.5px;height:17.5px;background:#fff;border:1px solid #777;border-radius:2px;"></div>
<span class="t" style="left:13.93px;top:368.46px;font-size:9.5px;color:#222;">PG</span>
<span class="t" style="left:35.50px;top:365.77px;font-size:13.5px;color:#222;font-weight:700;letter-spacing:-0.39px;">Planetary Gears</span>
<span class="t" style="left:36.00px;top:392.57px;font-size:13.5px;color:#bebebe;font-style:italic;letter-spacing:-0.57px;">Sketch 1</span>
<span class="t" style="left:36.00px;top:418.57px;font-size:13.5px;color:#bebebe;font-style:italic;letter-spacing:-0.28px;">Fillet 1</span>
<span class="t" style="left:36.00px;top:444.57px;font-size:13.5px;color:#bebebe;font-style:italic;letter-spacing:-0.29px;">Sketch 2</span>
<span class="t" style="left:36.00px;top:470.57px;font-size:13.5px;color:#bebebe;font-style:italic;letter-spacing:-0.47px;">Extrude 2</span>
<span class="t" style="left:36.00px;top:496.57px;font-size:13.5px;color:#bebebe;font-style:italic;letter-spacing:-0.64px;">Chamfer 1</span>
<span class="t" style="left:36.00px;top:522.57px;font-size:13.5px;color:#bebebe;font-style:italic;letter-spacing:-0.29px;">Sketch 3</span>
<span class="t" style="left:36.00px;top:548.57px;font-size:13.5px;color:#bebebe;font-style:italic;letter-spacing:-0.47px;">Extrude 3</span>
<span class="t" style="left:36.00px;top:574.57px;font-size:13.5px;color:#bebebe;font-style:italic;letter-spacing:-0.1px;">Fillet 2</span>
<span class="t" style="left:36.00px;top:600.57px;font-size:13.5px;color:#bebebe;font-style:italic;letter-spacing:-0.37px;">Sketch 16</span>
<span class="t" style="left:26.30px;top:635.15px;font-size:14px;color:#222;letter-spacing:-0.63px;">Parts (3)</span>
<span class="t" style="left:32.30px;top:657.15px;font-size:14px;color:#222;letter-spacing:-1.14px;">Sun</span>
<span class="t" style="left:32.30px;top:683.15px;font-size:14px;color:#222;letter-spacing:-0.45px;">Planet</span>
<span class="t" style="left:32.30px;top:709.15px;font-size:14px;color:#222;letter-spacing:-1.07px;">Ring</span>
<div style="left:200px;top:145px;width:220px;height:449px;background:#fff;box-shadow:0 2px 7px rgba(0,0,0,.38);"></div>
<div style="left:200px;top:173px;width:220px;height:1px;background:#d0d4dc;"></div>
<span class="t" style="left:206.00px;top:151.87px;font-size:13.5px;color:#333;letter-spacing:-0.27px;-webkit-text-stroke:.45px #333;">Planetary Gears</span>
<div style="left:364px;top:145px;width:28px;height:28px;background:#07a007;"></div>
<svg style="left:364px;top:145px" width="56" height="28" viewBox="0 0 56 28" fill="none"><path d="M7,14.500 L12,19.500 L21.500,8.500" stroke="#fff" stroke-width="3"/><path d="M37,9 l10,10 m0,-10 l-10,10" stroke="#e0431a" stroke-width="2.800"/></svg>
<span class="t" style="left:205.30px;top:182.00px;font-size:13px;color:#6a6a6a;letter-spacing:-0.58px;">Number of Sun teeth</span>
<span class="t" style="left:376.53px;top:182.50px;font-size:13px;color:#333;">12</span>
<div style="left:320px;top:199px;width:74px;height:1px;background:#dcdcdc;"></div>
<span class="t" style="left:205.30px;top:208.00px;font-size:13px;color:#6a6a6a;letter-spacing:-0.53px;">Number of Planet teeth</span>
<span class="t" style="left:383.77px;top:208.50px;font-size:13px;color:#333;">8</span>
<div style="left:333px;top:225px;width:61px;height:1px;background:#dcdcdc;"></div>
<span class="t" style="left:205.30px;top:234.00px;font-size:13px;color:#6a6a6a;letter-spacing:-0.53px;">Number of Ring teeth</span>
<span class="t" style="left:376.53px;top:234.50px;font-size:13px;color:#333;">28</span>
<div style="left:324px;top:251px;width:70px;height:1px;background:#dcdcdc;"></div>
<span class="t" style="left:205.30px;top:260.00px;font-size:13px;color:#6a6a6a;letter-spacing:-0.57px;">Number of Planets</span>
<span class="t" style="left:383.77px;top:260.50px;font-size:13px;color:#333;">4</span>
<div style="left:309px;top:277px;width:85px;height:1px;background:#dcdcdc;"></div>
<span class="t" style="left:206.00px;top:282.43px;font-size:14.5px;color:#222;letter-spacing:-0.46px;">Module</span>
<div style="left:200px;top:303.2px;width:194px;height:1px;background:#dcdcdc;"></div>
<svg style="left:379px;top:288.2px" width="10" height="6" viewBox="0 0 10 6"><path d="M1,1 h8 l-4,4.200z" fill="#222"/></svg>
<span class="t" style="left:205.30px;top:310.70px;font-size:13px;color:#6a6a6a;letter-spacing:-0.44px;">Module</span>
<span class="t" style="left:347.66px;top:311.20px;font-size:13px;color:#333;">2.9 mm</span>
<div style="left:250px;top:327.7px;width:144px;height:1px;background:#dcdcdc;"></div>
<span class="t" style="left:205.30px;top:336.70px;font-size:13px;color:#6a6a6a;letter-spacing:-0.37px;">Sun pitch circle diameter</span>
<span class="t" style="left:351.25px;top:337.20px;font-size:13px;color:#333;">34.8 ...</span>
<div style="left:344px;top:353.7px;width:50px;height:1px;background:#dcdcdc;"></div>
<span class="t" style="left:205.30px;top:362.70px;font-size:13px;color:#6a6a6a;letter-spacing:-0.46px;">Pressure angle</span>
<span class="t" style="left:351.23px;top:363.20px;font-size:13px;color:#333;">30 deg</span>
<div style="left:291px;top:379.7px;width:103px;height:1px;background:#dcdcdc;"></div>
<span class="t" style="left:206.00px;top:385.73px;font-size:14.5px;color:#222;letter-spacing:-0.07px;">1/3 root fillet</span>
<div style="left:200px;top:406.5px;width:194px;height:1px;background:#dcdcdc;"></div>
<svg style="left:379px;top:391.5px" width="10" height="6" viewBox="0 0 10 6"><path d="M1,1 h8 l-4,4.200z" fill="#222"/></svg>
<div style="left:204px;top:414.3px;width:12px;height:12px;background:#fff;border:1px solid #ccc;border-radius:2.500px;"></div>
<span class="t" style="left:220.30px;top:414.00px;font-size:13px;color:#6a6a6a;letter-spacing:-0.24px;">Center bore</span>
<div style="left:204px;top:441.0px;width:12px;height:12px;background:#fff;border:1px solid #ccc;border-radius:2.500px;"></div>
<span class="t" style="left:220.30px;top:440.70px;font-size:13px;color:#6a6a6a;letter-spacing:-0.07px;">Select origin position</span>
<span class="t" style="left:205.30px;top:467.70px;font-size:13px;color:#6a6a6a;letter-spacing:-0.46px;">Extrude depth</span>
<span class="t" style="left:351.27px;top:468.20px;font-size:13px;color:#333;">15 mm</span>
<div style="left:286px;top:484.7px;width:108px;height:1px;background:#dcdcdc;"></div>
<svg style="left:397px;top:462px" width="20" height="20" viewBox="0 0 20 20"><path d="M19.500,1 L9,10.500" stroke="#556070" stroke-width="2"/><path d="M1,19 L5,5.500 L14.500,15Z" fill="#556070"/><path d="M1.500,8 L6,3 M4.500,2.500 L6.500,2.300 L6.300,4.500" stroke="#8892a0" stroke-width="1" fill="none"/></svg>
<div style="left:204px;top:494.0px;width:12px;height:12px;background:#3a36ae;border-radius:2.500px;"></div>
<svg style="left:204px;top:494.0px" width="12" height="12" viewBox="0 0 12 12"><path d="M2.700,6.200 L5,8.500 L9.300,3.500" stroke="#fff" stroke-width="1.700" fill="none"/></svg>
<span class="t" style="left:220.30px;top:493.70px;font-size:13px;color:#6a6a6a;letter-spacing:-0.03px;">Backlash</span>
<span class="t" style="left:205.30px;top:521.00px;font-size:13px;color:#6a6a6a;letter-spacing:-0.51px;">Backlash Value</span>
<span class="t" style="left:347.66px;top:521.50px;font-size:13px;color:#333;">0.2 mm</span>
<div style="left:292px;top:538px;width:102px;height:1px;background:#dcdcdc;"></div>
<div style="left:204px;top:546.8px;width:12px;height:12px;background:#fff;border:1px solid #ccc;border-radius:2.500px;"></div>
<span class="t" style="left:220.30px;top:546.50px;font-size:13px;color:#6a6a6a;letter-spacing:-0.08px;">Offset</span>
<div style="left:207px;top:579px;width:112px;height:1.5px;background:#666;"></div>
<div style="left:278.5px;top:573.7px;width:12px;height:12px;background:#fff;border:1.500px solid #666;border-radius:50%;"></div>
<div style="left:345px;top:569px;width:49px;height:22px;background:#fff;border:1px solid #c8c8c8;border-radius:3px;"></div>
<span class="t" style="left:355.97px;top:572.57px;font-size:13.5px;color:#222;letter-spacing:-0.55px;">Final</span>
<div style="left:0px;top:789px;width:1440px;height:31px;background:#cfcfcf;"></div>
<div style="left:0px;top:789px;width:72px;height:31px;background:#d6d6d6;"></div>
<div style="left:72px;top:789px;width:86px;height:27.5px;background:#ebebeb;border-radius:0 0 5px 5px;"></div>
<div style="left:161px;top:789px;width:183px;height:27.5px;background:#ebebeb;border-radius:0 0 5px 5px;"></div>
<div style="left:347px;top:789px;width:88px;height:27.5px;background:#ebebeb;border-radius:0 0 5px 5px;"></div>
<div style="left:438px;top:789px;width:199px;height:27.5px;background:#ebebeb;border-radius:0 0 5px 5px;"></div>
<div style="left:640px;top:789px;width:198px;height:27.5px;background:#fff;border-radius:0 0 5px 5px;box-shadow:inset 0 -2.500px 0 #3a36ae;border-radius:0 0 3px 3px;"></div>
<div style="left:841px;top:789px;width:96px;height:27.5px;background:#ebebeb;border-radius:0 0 5px 5px;"></div>
<div style="left:940px;top:789px;width:198px;height:27.5px;background:#ebebeb;border-radius:0 0 5px 5px;"></div>
<div style="left:1141px;top:789px;width:129px;height:27.5px;background:#ebebeb;border-radius:0 0 5px 5px;"></div>
<div style="left:1273px;top:789px;width:121px;height:27.5px;background:#ebebeb;border-radius:0 0 5px 5px;"></div>
<div style="left:72px;top:789px;width:26px;height:27.5px;background:linear-gradient(90deg,#c0c0c0,rgba(235,235,235,0));"></div>
<div style="left:1392px;top:789px;width:48px;height:31px;background:#d6d6d6;"></div>
<svg style="left:0;top:789px" width="1440" height="31" viewBox="0 789 1440 31" fill="none" stroke-linejoin="round"><path d="M9.500,797.500 h15.500 M19.500,802.500 h5.500 M20.500,807.500 h4.500" stroke="#555" stroke-width="1.600"/><circle cx="13.500" cy="805" r="3.600" stroke="#555" stroke-width="1.600"/><path d="M16,807.800 l3,3" stroke="#555" stroke-width="1.800"/><path d="M46,804 h14 M53,797 v14" stroke="#444" stroke-width="2.400"/><path d="M173,800 L175,798.5 H179.5 V811 H175 L173,809.5Z" fill="#fff" stroke="#333" stroke-width="1.400"/><path d="M180.5,796.5 C180.5,795 182,794.5 184,794.5 C187,794.5 189,795.5 189,797.5 V811 H180.5Z" fill="#fff" stroke="#333" stroke-width="1.400"/><path d="M173,800 L175,801.5 V811 M182.5,794.8 V811" stroke="#333" stroke-width=".9"/><path d="M359,800 L361,798.5 H365.5 V811 H361 L359,809.5Z" fill="#fff" stroke="#333" stroke-width="1.400"/><path d="M366.5,796.5 C366.5,795 368,794.5 370,794.5 C373,794.5 375,795.5 375,797.5 V811 H366.5Z" fill="#fff" stroke="#333" stroke-width="1.400"/><path d="M359,800 L361,801.5 V811 M368.5,794.8 V811" stroke="#333" stroke-width=".9"/><path d="M469,800 L471,798.5 H475.5 V811 H471 L469,809.5Z" fill="#fff" stroke="#333" stroke-width="1.400"/><path d="M476.5,796.5 C476.5,795 478,794.5 480,794.5 C483,794.5 485,795.5 485,797.5 V811 H476.5Z" fill="#fff" stroke="#333" stroke-width="1.400"/><path d="M469,800 L471,801.5 V811 M478.5,794.8 V811" stroke="#333" stroke-width=".9"/><path d="M671,800 L673,798.5 H677.5 V811 H673 L671,809.5Z" fill="#fff" stroke="#333" stroke-width="1.400"/><path d="M678.5,796.5 C678.5,795 680,794.5 682,794.5 C685,794.5 687,795.5 687,797.5 V811 H678.5Z" fill="#fff" stroke="#333" stroke-width="1.400"/><path d="M671,800 L673,801.5 V811 M680.5,794.8 V811" stroke="#333" stroke-width=".9"/><path d="M853,800 L855,798.5 H859.5 V811 H855 L853,809.5Z" fill="#fff" stroke="#333" stroke-width="1.400"/><path d="M860.5,796.5 C860.5,795 862,794.5 864,794.5 C867,794.5 869,795.5 869,797.5 V811 H860.5Z" fill="#fff" stroke="#333" stroke-width="1.400"/><path d="M853,800 L855,801.5 V811 M862.5,794.8 V811" stroke="#333" stroke-width=".9"/><path d="M970,800 L972,798.5 H976.5 V811 H972 L970,809.5Z" fill="#fff" stroke="#333" stroke-width="1.400"/><path d="M977.5,796.5 C977.5,795 979,794.5 981,794.5 C984,794.5 986,795.5 986,797.5 V811 H977.5Z" fill="#fff" stroke="#333" stroke-width="1.400"/><path d="M970,800 L972,801.5 V811 M979.5,794.8 V811" stroke="#333" stroke-width=".9"/><path d="M1151.8,796 H1164 L1167.5,798.5 V811 H1155 L1151.8,808.5Z" fill="#fff" stroke="#333" stroke-width="1.400"/><path d="M1155,798.5 H1167.5 V811 H1155Z" fill="#8c8c8c" stroke="#333" stroke-width="1"/><path d="M1151.8,796 L1155,798.5" stroke="#333" stroke-width="1"/><path d="M1283.8,796 H1296 L1299.5,798.5 V811 H1287 L1283.8,808.5Z" fill="#fff" stroke="#333" stroke-width="1.400"/><path d="M1287,798.5 H1299.5 V811 H1287Z" fill="#8c8c8c" stroke="#333" stroke-width="1"/><path d="M1283.8,796 L1287,798.5" stroke="#333" stroke-width="1"/><circle cx="457" cy="802.500" r="6.300" fill="#6d83d8"/><g transform="rotate(-40 457 802.500)" stroke="#fff" stroke-width="1.400" fill="none"><rect x="452" y="800.600" width="6" height="3.800" rx="1.900"/><rect x="456" y="800.600" width="6" height="3.800" rx="1.900"/></g><circle cx="658.5" cy="802.500" r="6.300" fill="#6d83d8"/><g transform="rotate(-40 658.5 802.500)" stroke="#fff" stroke-width="1.400" fill="none"><rect x="653.5" y="800.600" width="6" height="3.800" rx="1.900"/><rect x="657.5" y="800.600" width="6" height="3.800" rx="1.900"/></g><circle cx="957.5" cy="802.500" r="6.300" fill="#6d83d8"/><g transform="rotate(-40 957.5 802.500)" stroke="#fff" stroke-width="1.400" fill="none"><rect x="952.5" y="800.600" width="6" height="3.800" rx="1.900"/><rect x="956.5" y="800.600" width="6" height="3.800" rx="1.900"/></g><path d="M1407,797.500 l-6,6 l6,6" stroke="#444" stroke-width="2"/><path d="M1424,797.500 l6,6 l-6,6" stroke="#444" stroke-width="2"/></svg>
<span class="t" style="left:74.00px;top:795.73px;font-size:14.5px;color:#555;letter-spacing:-0.6px;">ttery 10Ah 6S</span>
<div style="left:72px;top:789px;width:12px;height:27.5px;background:linear-gradient(90deg,#c6c6c6 10%,rgba(225,225,225,0));"></div>
<span class="t" style="left:194.00px;top:795.73px;font-size:14.5px;color:#555;letter-spacing:-0.38px;">Extra Small Ouput Plate</span>
<span class="t" style="left:380.00px;top:795.73px;font-size:14.5px;color:#555;letter-spacing:-0.5px;">Spring 1</span>
<span class="t" style="left:490.00px;top:795.73px;font-size:14.5px;color:#555;letter-spacing:-0.35px;">Extra Small Planetary...</span>
<span class="t" style="left:692.00px;top:795.73px;font-size:14.5px;color:#333;letter-spacing:-0.7px;">Dual Stage Gearbox ...</span>
<span class="t" style="left:874.00px;top:795.73px;font-size:14.5px;color:#555;letter-spacing:-0.2px;">test cube</span>
<span class="t" style="left:991.00px;top:795.73px;font-size:14.5px;color:#555;letter-spacing:-0.77px;">Dual Stage Gearbox S...</span>
<span class="t" style="left:1173.00px;top:795.73px;font-size:14.5px;color:#555;letter-spacing:-0.62px;">New V2 Corner</span>
<span class="t" style="left:1304.00px;top:795.73px;font-size:14.5px;color:#555;letter-spacing:-0.73px;">Dual Stage V2</span>
<div style="left:0px;top:820px;width:1440px;height:53px;background:#3b4143;border-top:1px solid #2a2f31;"></div>
<span class="t" style="left:49.00px;top:842.46px;font-size:16px;color:#eceeee;letter-spacing:0.08px;">Support Arm V....stl</span>
<svg style="left:200px;top:838px" width="16" height="12" viewBox="0 0 16 12"><path d="M2.500,9 l5,-5 l5,5" stroke="#eceeee" stroke-width="1.800" fill="none"/></svg>
<div style="left:230px;top:827px;width:1px;height:40px;background:#23282a;"></div>
<div style="left:1315px;top:831px;width:88.5px;height:29.5px;border:1px solid #6b7173;border-radius:2px;"></div>
<span class="t" style="left:1330.90px;top:838.38px;font-size:15.5px;color:#eceeee;letter-spacing:-0.2px;">Show all</span>
<svg style="left:1414px;top:839px" width="14" height="14" viewBox="0 0 14 14"><path d="M2.500,2.500 l9,9 m0,-9 l-9,9" stroke="#eceeee" stroke-width="1.800" fill="none"/></svg>
</body></html>
